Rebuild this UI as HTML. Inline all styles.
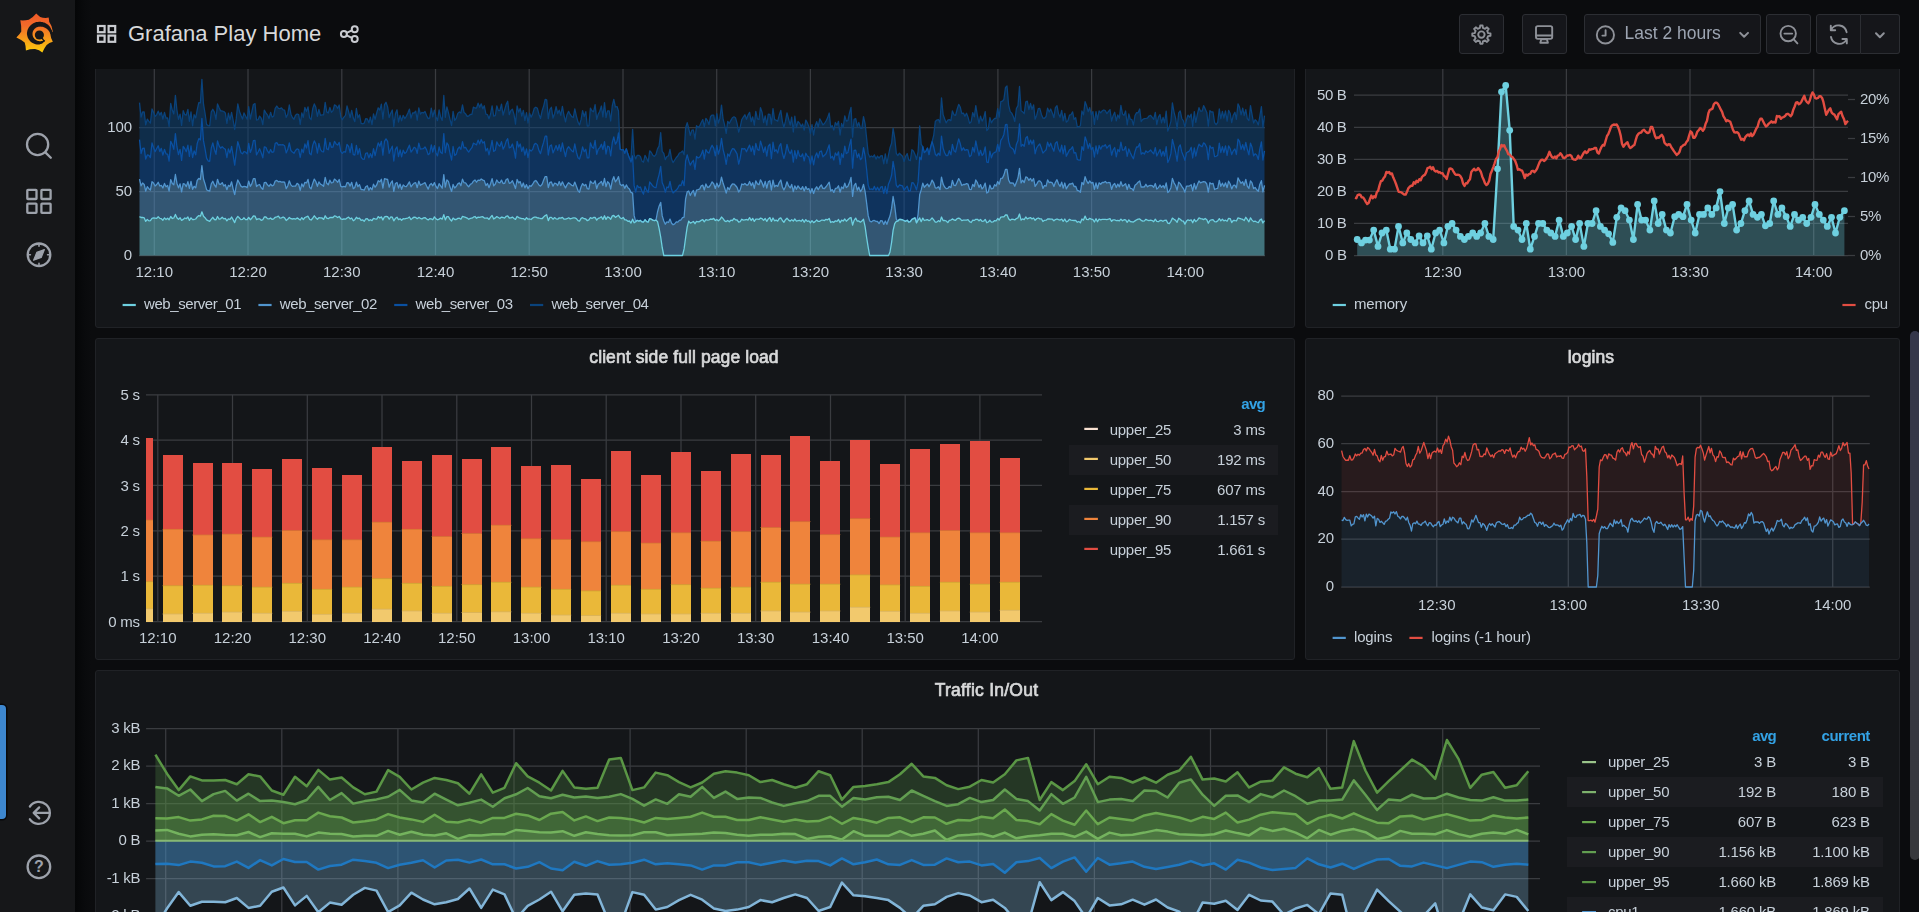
<!DOCTYPE html>
<html><head><meta charset="utf-8"><title>Grafana Play Home - Grafana</title>
<style>
html,body{margin:0;padding:0;background:#0b0c0e;}
body{width:1919px;height:912px;overflow:hidden;position:relative;font-family:"Liberation Sans", sans-serif;color:#c7d0d9;}
.abs{position:absolute}
.panel{position:absolute;box-sizing:border-box;background:#141619;border:1px solid #202226;border-radius:3px}
.side{position:absolute;left:0;top:0;width:75px;height:912px;background:#161719;z-index:5}
.shadow{position:absolute;left:75px;top:0;width:16px;height:912px;background:linear-gradient(to right,#050607,#090a0c 60%,#0b0c0e);z-index:5}
.header{position:absolute;left:91px;top:0;width:1828px;height:69px;background:#0b0c0e;z-index:4}
.hdr{position:absolute;left:0;top:0;z-index:6}
.charts{position:absolute;left:0;top:0;z-index:2}
.title{position:absolute;left:128px;top:20.5px;font-size:22px;line-height:26px;color:#d8d9da;white-space:nowrap;letter-spacing:0px;z-index:6}
.btn{position:absolute;top:14px;height:40px;box-sizing:border-box;background:#15161a;border:1px solid #2c2e33;border-radius:3px;z-index:6}
.tr{position:absolute;left:1624.5px;top:23.4px;font-size:17.5px;line-height:20px;color:#9da5b2;white-space:nowrap;z-index:7}
.alt{position:absolute;height:30px;background:#1b1c20;z-index:1}
.bluebar{position:absolute;left:0;top:705px;width:5.5px;height:114px;background:#3d87cf;border-radius:0 4px 4px 0;box-shadow:0 0 0 1.5px #07080a;z-index:7}
.scroll{position:absolute;left:1910px;top:331px;width:10px;height:529px;background:linear-gradient(#35374a,#37383c);border-radius:5px;z-index:7}
.q{z-index:7}
.side svg, svg.abs{z-index:6}
</style></head>
<body>
<div class="panel" style="left:95px;top:6px;width:1200px;height:322px"></div><div class="panel" style="left:1305px;top:6px;width:595px;height:322px"></div><div class="panel" style="left:95px;top:338px;width:1200px;height:322px"></div><div class="panel" style="left:1305px;top:338px;width:595px;height:322px"></div><div class="panel" style="left:95px;top:670px;width:1805px;height:322px"></div>
<div class="alt" style="left:1069px;top:445px;width:209px"></div><div class="alt" style="left:1069px;top:505px;width:209px"></div>
<div class="alt" style="left:1567px;top:777px;width:316px"></div><div class="alt" style="left:1567px;top:837px;width:316px"></div><div class="alt" style="left:1567px;top:897px;width:316px"></div>
<svg class="charts" style="will-change:transform" width="1919" height="912" viewBox="0 0 1919 912" font-family='"Liberation Sans", sans-serif' font-size="15" fill="#c7d0d9"><line x1="139" y1="255.5" x2="1265" y2="255.5" stroke="#3a3c40" stroke-width="1.25"/>
<line x1="139" y1="191.5" x2="1265" y2="191.5" stroke="#3a3c40" stroke-width="1.25"/>
<line x1="139" y1="127.5" x2="1265" y2="127.5" stroke="#3a3c40" stroke-width="1.25"/>
<line x1="154.3" y1="40" x2="154.3" y2="255.5" stroke="#3a3c40" stroke-width="1.25"/>
<line x1="248" y1="40" x2="248" y2="255.5" stroke="#3a3c40" stroke-width="1.25"/>
<line x1="341.8" y1="40" x2="341.8" y2="255.5" stroke="#3a3c40" stroke-width="1.25"/>
<line x1="435.5" y1="40" x2="435.5" y2="255.5" stroke="#3a3c40" stroke-width="1.25"/>
<line x1="529.2" y1="40" x2="529.2" y2="255.5" stroke="#3a3c40" stroke-width="1.25"/>
<line x1="623" y1="40" x2="623" y2="255.5" stroke="#3a3c40" stroke-width="1.25"/>
<line x1="716.7" y1="40" x2="716.7" y2="255.5" stroke="#3a3c40" stroke-width="1.25"/>
<line x1="810.4" y1="40" x2="810.4" y2="255.5" stroke="#3a3c40" stroke-width="1.25"/>
<line x1="904.1" y1="40" x2="904.1" y2="255.5" stroke="#3a3c40" stroke-width="1.25"/>
<line x1="997.9" y1="40" x2="997.9" y2="255.5" stroke="#3a3c40" stroke-width="1.25"/>
<line x1="1091.6" y1="40" x2="1091.6" y2="255.5" stroke="#3a3c40" stroke-width="1.25"/>
<line x1="1185.3" y1="40" x2="1185.3" y2="255.5" stroke="#3a3c40" stroke-width="1.25"/>
<line x1="1354" y1="255.5" x2="1848" y2="255.5" stroke="#3a3c40" stroke-width="1.25"/>
<line x1="1354" y1="223.4" x2="1848" y2="223.4" stroke="#3a3c40" stroke-width="1.25"/>
<line x1="1354" y1="191.4" x2="1848" y2="191.4" stroke="#3a3c40" stroke-width="1.25"/>
<line x1="1354" y1="159.4" x2="1848" y2="159.4" stroke="#3a3c40" stroke-width="1.25"/>
<line x1="1354" y1="127.3" x2="1848" y2="127.3" stroke="#3a3c40" stroke-width="1.25"/>
<line x1="1354" y1="95.2" x2="1848" y2="95.2" stroke="#3a3c40" stroke-width="1.25"/>
<line x1="1442.8" y1="40" x2="1442.8" y2="255.5" stroke="#3a3c40" stroke-width="1.25"/>
<line x1="1566.4" y1="40" x2="1566.4" y2="255.5" stroke="#3a3c40" stroke-width="1.25"/>
<line x1="1690" y1="40" x2="1690" y2="255.5" stroke="#3a3c40" stroke-width="1.25"/>
<line x1="1813.7" y1="40" x2="1813.7" y2="255.5" stroke="#3a3c40" stroke-width="1.25"/>
<line x1="1848" y1="255.5" x2="1855" y2="255.5" stroke="#3a3c40" stroke-width="1.25"/>
<line x1="1848" y1="216.5" x2="1855" y2="216.5" stroke="#3a3c40" stroke-width="1.25"/>
<line x1="1848" y1="177.5" x2="1855" y2="177.5" stroke="#3a3c40" stroke-width="1.25"/>
<line x1="1848" y1="138.5" x2="1855" y2="138.5" stroke="#3a3c40" stroke-width="1.25"/>
<line x1="1848" y1="99.5" x2="1855" y2="99.5" stroke="#3a3c40" stroke-width="1.25"/>
<line x1="146" y1="621.5" x2="1042" y2="621.5" stroke="#3a3c40" stroke-width="1.25"/>
<line x1="146" y1="576.1" x2="1042" y2="576.1" stroke="#3a3c40" stroke-width="1.25"/>
<line x1="146" y1="530.8" x2="1042" y2="530.8" stroke="#3a3c40" stroke-width="1.25"/>
<line x1="146" y1="485.4" x2="1042" y2="485.4" stroke="#3a3c40" stroke-width="1.25"/>
<line x1="146" y1="440.1" x2="1042" y2="440.1" stroke="#3a3c40" stroke-width="1.25"/>
<line x1="146" y1="394.8" x2="1042" y2="394.8" stroke="#3a3c40" stroke-width="1.25"/>
<line x1="157.8" y1="394.8" x2="157.8" y2="621.5" stroke="#3a3c40" stroke-width="1.25"/>
<line x1="232.5" y1="394.8" x2="232.5" y2="621.5" stroke="#3a3c40" stroke-width="1.25"/>
<line x1="307.3" y1="394.8" x2="307.3" y2="621.5" stroke="#3a3c40" stroke-width="1.25"/>
<line x1="382" y1="394.8" x2="382" y2="621.5" stroke="#3a3c40" stroke-width="1.25"/>
<line x1="456.8" y1="394.8" x2="456.8" y2="621.5" stroke="#3a3c40" stroke-width="1.25"/>
<line x1="531.5" y1="394.8" x2="531.5" y2="621.5" stroke="#3a3c40" stroke-width="1.25"/>
<line x1="606.2" y1="394.8" x2="606.2" y2="621.5" stroke="#3a3c40" stroke-width="1.25"/>
<line x1="681" y1="394.8" x2="681" y2="621.5" stroke="#3a3c40" stroke-width="1.25"/>
<line x1="755.7" y1="394.8" x2="755.7" y2="621.5" stroke="#3a3c40" stroke-width="1.25"/>
<line x1="830.5" y1="394.8" x2="830.5" y2="621.5" stroke="#3a3c40" stroke-width="1.25"/>
<line x1="905.2" y1="394.8" x2="905.2" y2="621.5" stroke="#3a3c40" stroke-width="1.25"/>
<line x1="979.9" y1="394.8" x2="979.9" y2="621.5" stroke="#3a3c40" stroke-width="1.25"/>
<line x1="1341.2" y1="587" x2="1869.8" y2="587" stroke="#3a3c40" stroke-width="1.25"/>
<line x1="1341.2" y1="539.2" x2="1869.8" y2="539.2" stroke="#3a3c40" stroke-width="1.25"/>
<line x1="1341.2" y1="491.5" x2="1869.8" y2="491.5" stroke="#3a3c40" stroke-width="1.25"/>
<line x1="1341.2" y1="443.7" x2="1869.8" y2="443.7" stroke="#3a3c40" stroke-width="1.25"/>
<line x1="1341.2" y1="396" x2="1869.8" y2="396" stroke="#3a3c40" stroke-width="1.25"/>
<line x1="1436.8" y1="395.9" x2="1436.8" y2="587" stroke="#3a3c40" stroke-width="1.25"/>
<line x1="1568.3" y1="395.9" x2="1568.3" y2="587" stroke="#3a3c40" stroke-width="1.25"/>
<line x1="1700.8" y1="395.9" x2="1700.8" y2="587" stroke="#3a3c40" stroke-width="1.25"/>
<line x1="1832.7" y1="395.9" x2="1832.7" y2="587" stroke="#3a3c40" stroke-width="1.25"/>
<line x1="146.1" y1="916.2" x2="1540" y2="916.2" stroke="#3a3c40" stroke-width="1.25"/>
<line x1="146.1" y1="878.6" x2="1540" y2="878.6" stroke="#3a3c40" stroke-width="1.25"/>
<line x1="146.1" y1="841.1" x2="1540" y2="841.1" stroke="#3a3c40" stroke-width="1.25"/>
<line x1="146.1" y1="803.6" x2="1540" y2="803.6" stroke="#3a3c40" stroke-width="1.25"/>
<line x1="146.1" y1="766" x2="1540" y2="766" stroke="#3a3c40" stroke-width="1.25"/>
<line x1="146.1" y1="728.5" x2="1540" y2="728.5" stroke="#3a3c40" stroke-width="1.25"/>
<line x1="165.7" y1="728.4" x2="165.7" y2="920" stroke="#3a3c40" stroke-width="1.25"/>
<line x1="281.8" y1="728.4" x2="281.8" y2="920" stroke="#3a3c40" stroke-width="1.25"/>
<line x1="397.9" y1="728.4" x2="397.9" y2="920" stroke="#3a3c40" stroke-width="1.25"/>
<line x1="514" y1="728.4" x2="514" y2="920" stroke="#3a3c40" stroke-width="1.25"/>
<line x1="630.1" y1="728.4" x2="630.1" y2="920" stroke="#3a3c40" stroke-width="1.25"/>
<line x1="746.2" y1="728.4" x2="746.2" y2="920" stroke="#3a3c40" stroke-width="1.25"/>
<line x1="862.2" y1="728.4" x2="862.2" y2="920" stroke="#3a3c40" stroke-width="1.25"/>
<line x1="978.3" y1="728.4" x2="978.3" y2="920" stroke="#3a3c40" stroke-width="1.25"/>
<line x1="1094.4" y1="728.4" x2="1094.4" y2="920" stroke="#3a3c40" stroke-width="1.25"/>
<line x1="1210.5" y1="728.4" x2="1210.5" y2="920" stroke="#3a3c40" stroke-width="1.25"/>
<line x1="1326.6" y1="728.4" x2="1326.6" y2="920" stroke="#3a3c40" stroke-width="1.25"/>
<line x1="1442.7" y1="728.4" x2="1442.7" y2="920" stroke="#3a3c40" stroke-width="1.25"/>
<g stroke-linejoin="round" fill-opacity="0.5">
<path d="M139.5,102.6 L141.1,117.1 L142.6,112 L144.2,112 L145.7,124.9 L147.3,119.2 L148.9,121.4 L150.4,123.1 L152,109 L153.5,112.2 L155.1,116.5 L156.7,114.6 L158.2,111.2 L159.8,115.1 L161.3,112.4 L162.9,119.2 L164.5,112.4 L166,118.1 L167.6,117.9 L169.1,126.4 L170.7,103.5 L172.3,110.3 L173.8,114 L175.4,95.3 L176.9,110 L178.5,119.4 L180.1,114.1 L181.6,125.4 L183.2,110.7 L184.7,114.6 L186.3,115.2 L187.9,109.4 L189.4,121.4 L191,111.9 L192.6,125.8 L194.1,114.7 L195.7,117.9 L197.2,109.9 L198.8,102.7 L200.4,102.9 L201.9,79.4 L203.5,104.2 L205,113 L206.6,124.5 L208.2,125.6 L209.7,125.9 L211.3,111.9 L212.8,109.2 L214.4,112.1 L216,119.3 L217.5,103.9 L219.1,107.8 L220.6,110.9 L222.2,111 L223.8,111.5 L225.3,112.9 L226.9,123.5 L228.4,113.1 L230,119.9 L231.6,112.5 L233.1,120.2 L234.7,129.5 L236.2,118.9 L237.8,104 L239.4,111.2 L240.9,115.2 L242.5,119.1 L244,113 L245.6,116.3 L247.2,119.3 L248.7,106.7 L250.3,119.1 L251.8,112.1 L253.4,104.5 L255,103.6 L256.5,120 L258.1,119.7 L259.6,116.1 L261.2,118.2 L262.8,124.7 L264.3,110.1 L265.9,112.8 L267.4,114.8 L269,118.5 L270.6,112.3 L272.1,117.1 L273.7,116.2 L275.2,108.3 L276.8,106 L278.4,108.4 L279.9,108.6 L281.5,107.9 L283.1,109.9 L284.6,110.2 L286.2,117.3 L287.7,114.5 L289.3,105 L290.9,114.2 L292.4,117.5 L294,119.2 L295.5,115.3 L297.1,114 L298.7,114.6 L300.2,124.4 L301.8,112.8 L303.3,117.5 L304.9,107.4 L306.5,111.4 L308,106.9 L309.6,117.9 L311.1,119.7 L312.7,108.8 L314.3,103.9 L315.8,107.3 L317.4,116.4 L318.9,109.5 L320.5,115.3 L322.1,114.9 L323.6,114.8 L325.2,102.3 L326.7,111.9 L328.3,113 L329.9,107.5 L331.4,112.3 L333,110.6 L334.5,104.9 L336.1,105.8 L337.7,108.3 L339.2,105 L340.8,116.9 L342.3,119.7 L343.9,117.1 L345.5,115.4 L347,106 L348.6,111.7 L350.1,117.6 L351.7,110.3 L353.3,118.1 L354.8,121.7 L356.4,108.5 L357.9,117.8 L359.5,114.8 L361.1,123.4 L362.6,123.8 L364.2,123.2 L365.7,118.7 L367.3,118.9 L368.9,122.8 L370.4,117.1 L372,124.6 L373.5,114 L375.1,119.4 L376.7,113 L378.2,107.8 L379.8,110.1 L381.4,104.2 L382.9,119 L384.5,104.7 L386,102.3 L387.6,106.9 L389.2,117.6 L390.7,113.4 L392.3,110 L393.8,126.6 L395.4,113.8 L397,109.8 L398.5,122.1 L400.1,115.5 L401.6,120.9 L403.2,115.3 L404.8,118.6 L406.3,116.4 L407.9,113.1 L409.4,109.2 L411,118.1 L412.6,112.9 L414.1,113 L415.7,111.1 L417.2,120.1 L418.8,107.9 L420.4,114.1 L421.9,112.3 L423.5,113 L425,111.4 L426.6,115.6 L428.2,118.6 L429.7,118.1 L431.3,108.2 L432.8,116.9 L434.4,110.2 L436,117 L437.5,120.7 L439.1,109.9 L440.6,116.9 L442.2,120.4 L443.8,95.5 L445.3,117.3 L446.9,106.8 L448.4,112.7 L450,119.3 L451.6,125.5 L453.1,111.3 L454.7,120.3 L456.2,118.5 L457.8,113.4 L459.4,111.9 L460.9,113.1 L462.5,105 L464,112.5 L465.6,113.8 L467.2,116.4 L468.7,116 L470.3,114.5 L471.9,114.3 L473.4,107.2 L475,108 L476.5,108.1 L478.1,103.2 L479.7,107.3 L481.2,103.8 L482.8,108.9 L484.3,105.8 L485.9,114.2 L487.5,114.7 L489,118.8 L490.6,114 L492.1,105.8 L493.7,116.2 L495.3,115.7 L496.8,105.8 L498.4,110.6 L499.9,110.5 L501.5,104.2 L503.1,115.1 L504.6,110 L506.2,104.4 L507.7,101.3 L509.3,114.7 L510.9,110.4 L512.4,109.2 L514,114.4 L515.5,124.1 L517.1,106 L518.7,112.1 L520.2,108.5 L521.8,116.1 L523.3,110.3 L524.9,120.5 L526.5,112.7 L528,123 L529.6,113.1 L531.1,117.2 L532.7,113.7 L534.3,108.3 L535.8,107.2 L537.4,108.3 L538.9,114.2 L540.5,118.5 L542.1,110.9 L543.6,106.3 L545.2,99.3 L546.7,99.8 L548.3,118.7 L549.9,109.3 L551.4,107.3 L553,118.1 L554.5,114 L556.1,106.7 L557.7,113.6 L559.2,110.2 L560.8,115.3 L562.4,106.4 L563.9,115 L565.5,121.9 L567,114.7 L568.6,111.4 L570.2,114.5 L571.7,116.6 L573.3,117.5 L574.8,108.8 L576.4,116.1 L578,122.1 L579.5,125 L581.1,119.4 L582.6,110.7 L584.2,116.6 L585.8,111.6 L587.3,126.2 L588.9,125.8 L590.4,108.1 L592,110.9 L593.6,111.7 L595.1,104.6 L596.7,119.4 L598.2,114.3 L599.8,111.3 L601.4,106 L602.9,116.9 L604.5,102.6 L606,117.6 L607.6,110.8 L609.2,110.8 L610.7,121 L612.3,105.7 L613.8,99.4 L615.4,107 L617,106.5 L618.5,111 L620.1,149.1 L621.6,149.8 L623.2,149.6 L624.8,153.2 L626.3,148.8 L627.9,154.1 L629.4,157.9 L631,159.3 L632.6,129.3 L634.1,154.6 L635.7,158.9 L637.2,155.3 L638.8,155.3 L640.4,156.5 L641.9,160.9 L643.5,162.2 L645,155.4 L646.6,158.3 L648.2,161.8 L649.7,150.8 L651.3,152.5 L652.8,155.2 L654.4,156.4 L656,154.3 L657.5,148.9 L659.1,146.2 L660.7,132.7 L662.2,151.4 L663.8,153.5 L665.3,159.6 L666.9,156.5 L668.5,155.9 L670,149.5 L671.6,159.1 L673.1,162.7 L674.7,160 L676.3,157.5 L677.8,156 L679.4,153 L680.9,152.5 L682.5,150.9 L684.1,154.8 L685.6,128 L687.2,122.6 L688.7,128.4 L690.3,135.3 L691.9,130.1 L693.4,129.9 L695,139.2 L696.5,125.6 L698.1,127.5 L699.7,125.9 L701.2,122.5 L702.8,119.6 L704.3,127 L705.9,118.4 L707.5,120.6 L709,124.7 L710.6,116.4 L712.1,115.1 L713.7,115.1 L715.3,125.8 L716.8,113.6 L718.4,123.1 L719.9,118.4 L721.5,105.1 L723.1,119.2 L724.6,124.8 L726.2,133.4 L727.7,121.3 L729.3,123.5 L730.9,120.4 L732.4,117.7 L734,116.8 L735.5,117.7 L737.1,123.7 L738.7,132.1 L740.2,127.2 L741.8,119.5 L743.3,117.2 L744.9,114.8 L746.5,119.3 L748,115.1 L749.6,112.4 L751.2,121.7 L752.7,116.8 L754.3,125.1 L755.8,111.4 L757.4,118.8 L759,119.5 L760.5,107.6 L762.1,112.5 L763.6,122.7 L765.2,116 L766.8,125.2 L768.3,114.2 L769.9,114.4 L771.4,124 L773,108.6 L774.6,119.6 L776.1,120.2 L777.7,121.2 L779.2,115.3 L780.8,110.4 L782.4,121.6 L783.9,127.5 L785.5,121.2 L787,112.8 L788.6,119.1 L790.2,125.1 L791.7,117.1 L793.3,132 L794.8,116.2 L796.4,127.7 L798,121.5 L799.5,123.1 L801.1,126.6 L802.6,124 L804.2,130.2 L805.8,120.1 L807.3,122.8 L808.9,126.7 L810.4,133.4 L812,124.7 L813.6,135.2 L815.1,126 L816.7,121.7 L818.2,127.1 L819.8,118.8 L821.4,121.7 L822.9,124.9 L824.5,123.5 L826,121 L827.6,117.9 L829.2,113 L830.7,127.1 L832.3,125.7 L833.8,130.1 L835.4,122.5 L837,125.2 L838.5,121.3 L840.1,135 L841.6,123.5 L843.2,127.5 L844.8,115.8 L846.3,121.2 L847.9,120.6 L849.5,112.8 L851,107.4 L852.6,137.2 L854.1,119.3 L855.7,118.6 L857.3,126.5 L858.8,122.5 L860.4,128.1 L861.9,128.3 L863.5,116.6 L865.1,123.9 L866.6,138.1 L868.2,153.6 L869.7,157.1 L871.3,156 L872.9,157 L874.4,154.9 L876,159.1 L877.5,156.1 L879.1,158.1 L880.7,155.8 L882.2,155.7 L883.8,163.9 L885.3,153.8 L886.9,163.5 L888.5,155 L890,147.8 L891.6,143.3 L893.1,128.4 L894.7,137.9 L896.3,153.3 L897.8,155.6 L899.4,153.2 L900.9,154.7 L902.5,156.3 L904.1,161.5 L905.6,156.3 L907.2,153.6 L908.7,159.9 L910.3,160.8 L911.9,149.7 L913.4,150.9 L915,154.4 L916.5,159.5 L918.1,151.7 L919.7,125.9 L921.2,144.5 L922.8,146.7 L924.3,152.6 L925.9,151.1 L927.5,148.1 L929,154.6 L930.6,147.1 L932.1,141.6 L933.7,135.5 L935.3,121.5 L936.8,120.1 L938.4,119.5 L940,122.8 L941.5,97.8 L943.1,114.6 L944.6,118.8 L946.2,122.9 L947.8,120.2 L949.3,119.6 L950.9,120.7 L952.4,110.9 L954,114.8 L955.6,115.3 L957.1,109.5 L958.7,104.4 L960.2,107 L961.8,113.7 L963.4,113.1 L964.9,116.3 L966.5,113.3 L968,117.2 L969.6,123.3 L971.2,121.7 L972.7,112.6 L974.3,116.8 L975.8,105.7 L977.4,115.5 L979,123.4 L980.5,116.1 L982.1,121.1 L983.6,118.3 L985.2,111.6 L986.8,130.7 L988.3,128.9 L989.9,117.6 L991.4,122.8 L993,120.1 L994.6,118.5 L996.1,118.4 L997.7,108.6 L999.2,117.1 L1000.8,101.7 L1002.4,101.2 L1003.9,99.5 L1005.5,87.4 L1007,86 L1008.6,105.1 L1010.2,111.6 L1011.7,113.1 L1013.3,116.5 L1014.8,121.5 L1016.4,108.5 L1018,105.6 L1019.5,86.5 L1021.1,110.8 L1022.6,111.8 L1024.2,113.7 L1025.8,101.8 L1027.3,101.2 L1028.9,109.7 L1030.5,103.5 L1032,109.4 L1033.6,104.9 L1035.1,119.2 L1036.7,115.2 L1038.3,108.7 L1039.8,108.4 L1041.4,114.4 L1042.9,118 L1044.5,118.3 L1046.1,116.5 L1047.6,108.2 L1049.2,112 L1050.7,109 L1052.3,112.9 L1053.9,117.7 L1055.4,107.6 L1057,105.7 L1058.5,113.8 L1060.1,117.2 L1061.7,110.4 L1063.2,120.8 L1064.8,113.3 L1066.3,122.2 L1067.9,120.8 L1069.5,115.1 L1071,114.7 L1072.6,111.9 L1074.1,119.3 L1075.7,117.8 L1077.3,127.2 L1078.8,126.7 L1080.4,125.8 L1081.9,111 L1083.5,114.8 L1085.1,101.7 L1086.6,105.8 L1088.2,111.7 L1089.7,107.7 L1091.3,114.9 L1092.9,111.6 L1094.4,124.4 L1096,111.6 L1097.5,119.7 L1099.1,110.8 L1100.7,112.9 L1102.2,110.9 L1103.8,110 L1105.3,110.7 L1106.9,113.6 L1108.5,111.4 L1110,109.6 L1111.6,121.2 L1113.1,115.7 L1114.7,112.3 L1116.3,120.8 L1117.8,115 L1119.4,118.2 L1120.9,105.3 L1122.5,114.1 L1124.1,115.4 L1125.6,111 L1127.2,124.8 L1128.8,114 L1130.3,119.2 L1131.9,119.7 L1133.4,125.2 L1135,115.5 L1136.6,112.6 L1138.1,112.8 L1139.7,109 L1141.2,121.7 L1142.8,119.4 L1144.4,118.6 L1145.9,118.4 L1147.5,118.1 L1149,116 L1150.6,115.4 L1152.2,117.4 L1153.7,119.4 L1155.3,112.4 L1156.8,124.5 L1158.4,117.1 L1160,114.5 L1161.5,122.8 L1163.1,117.4 L1164.6,122.8 L1166.2,111.2 L1167.8,131.1 L1169.3,127.2 L1170.9,121.3 L1172.4,102.9 L1174,112.1 L1175.6,118.1 L1177.1,129 L1178.7,112.9 L1180.2,110.9 L1181.8,118.5 L1183.4,120.9 L1184.9,126.8 L1186.5,119.8 L1188,115.1 L1189.6,117.4 L1191.2,114.1 L1192.7,126.5 L1194.3,111.6 L1195.8,122.3 L1197.4,114.1 L1199,107.7 L1200.5,111.2 L1202.1,111.1 L1203.6,105.6 L1205.2,108.9 L1206.8,112.4 L1208.3,126.2 L1209.9,110.7 L1211.4,112 L1213,112 L1214.6,122.6 L1216.1,124.7 L1217.7,122.5 L1219.3,109 L1220.8,118.7 L1222.4,111.5 L1223.9,118 L1225.5,111 L1227.1,121.1 L1228.6,110.3 L1230.2,113.5 L1231.7,122.7 L1233.3,115.2 L1234.9,112.2 L1236.4,119.3 L1238,103.8 L1239.5,107.1 L1241.1,114.8 L1242.7,108.2 L1244.2,115.7 L1245.8,109.6 L1247.3,118.6 L1248.9,120.5 L1250.5,105.6 L1252,114.4 L1253.6,123 L1255.1,119.8 L1256.7,121.2 L1258.3,125 L1259.8,116.7 L1261.4,106.6 L1262.9,127.4 L1264.5,115.6 L1264.5,150.8 L1262.9,160 L1261.4,141.9 L1259.8,149.1 L1258.3,159.4 L1256.7,155.1 L1255.1,153.8 L1253.6,155.8 L1252,147.2 L1250.5,143.1 L1248.9,154.9 L1247.3,149.3 L1245.8,142.5 L1244.2,150.2 L1242.7,144.7 L1241.1,149.4 L1239.5,141.4 L1238,139.1 L1236.4,154.5 L1234.9,148.9 L1233.3,150.8 L1231.7,154.6 L1230.2,148.7 L1228.6,145.8 L1227.1,155.3 L1225.5,145.8 L1223.9,152.5 L1222.4,146.6 L1220.8,152.7 L1219.3,143.2 L1217.7,155.4 L1216.1,156.3 L1214.6,156.6 L1213,147.4 L1211.4,148.3 L1209.9,145.7 L1208.3,159.7 L1206.8,147.8 L1205.2,144.3 L1203.6,142.8 L1202.1,146.7 L1200.5,145.9 L1199,144.2 L1197.4,148.9 L1195.8,156.2 L1194.3,147.9 L1192.7,158 L1191.2,147.3 L1189.6,150.7 L1188,151.9 L1186.5,152.7 L1184.9,160.3 L1183.4,155.9 L1181.8,151.9 L1180.2,144.9 L1178.7,147.4 L1177.1,161.1 L1175.6,152.4 L1174,145.6 L1172.4,139.5 L1170.9,153.6 L1169.3,159.3 L1167.8,162.5 L1166.2,146.7 L1164.6,156.1 L1163.1,151.3 L1161.5,156 L1160,149.5 L1158.4,152.8 L1156.8,156 L1155.3,147.6 L1153.7,153.9 L1152.2,152.1 L1150.6,150 L1149,151.5 L1147.5,152.4 L1145.9,150.9 L1144.4,154 L1142.8,152.7 L1141.2,154.2 L1139.7,143.5 L1138.1,147 L1136.6,146.9 L1135,151.7 L1133.4,158.8 L1131.9,156.1 L1130.3,152.8 L1128.8,149 L1127.2,156.4 L1125.6,146.6 L1124.1,149.9 L1122.5,150.2 L1120.9,142.1 L1119.4,151.5 L1117.8,149.5 L1116.3,156.8 L1114.7,147.5 L1113.1,150 L1111.6,155.2 L1110,144.9 L1108.5,146.1 L1106.9,148.2 L1105.3,144.6 L1103.8,146.2 L1102.2,146 L1100.7,149.2 L1099.1,145.5 L1097.5,153.9 L1096,145.9 L1094.4,157 L1092.9,147.5 L1091.3,149.6 L1089.7,143.5 L1088.2,148.4 L1086.6,141.1 L1085.1,136.8 L1083.5,150.3 L1081.9,146.6 L1080.4,160.2 L1078.8,160.2 L1077.3,159.5 L1075.7,152.7 L1074.1,153.2 L1072.6,146.7 L1071,149.1 L1069.5,149.9 L1067.9,153.1 L1066.3,156.3 L1064.8,145.7 L1063.2,153.9 L1061.7,145.1 L1060.1,152 L1058.5,148.8 L1057,141.6 L1055.4,143.1 L1053.9,151.2 L1052.3,147.7 L1050.7,143.2 L1049.2,146.6 L1047.6,142.1 L1046.1,149.8 L1044.5,151.4 L1042.9,153.1 L1041.4,148.2 L1039.8,143.9 L1038.3,145.5 L1036.7,147.8 L1035.1,153.8 L1033.6,140.1 L1032,144.1 L1030.5,140.1 L1028.9,144.4 L1027.3,136.5 L1025.8,137.9 L1024.2,146.3 L1022.6,144.5 L1021.1,146.3 L1019.5,123.8 L1018,140.6 L1016.4,144.4 L1014.8,153.9 L1013.3,149.2 L1011.7,147.9 L1010.2,146.8 L1008.6,141.1 L1007,124.5 L1005.5,124.7 L1003.9,134.4 L1002.4,138 L1000.8,140.3 L999.2,151.3 L997.7,144.5 L996.1,151.8 L994.6,152.4 L993,153.6 L991.4,157.8 L989.9,151.1 L988.3,162.5 L986.8,162.1 L985.2,146.9 L983.6,153.5 L982.1,155.5 L980.5,150.3 L979,155.6 L977.4,148.8 L975.8,141 L974.3,152.1 L972.7,147.3 L971.2,155.2 L969.6,156.7 L968,149.9 L966.5,149.6 L964.9,150.4 L963.4,147.8 L961.8,150.5 L960.2,143.5 L958.7,138.9 L957.1,145.3 L955.6,152 L954,150.7 L952.4,144.3 L950.9,154.8 L949.3,150.7 L947.8,155.5 L946.2,155.6 L944.6,152.7 L943.1,148.1 L941.5,136.1 L940,155.3 L938.4,153.2 L936.8,155.9 L935.3,154.2 L933.7,147 L932.1,141.6 L930.6,147.1 L929,154.6 L927.5,148.1 L925.9,151.1 L924.3,152.6 L922.8,146.7 L921.2,159.7 L919.7,157.2 L918.1,181.9 L916.5,189.8 L915,185.8 L913.4,183 L911.9,182.6 L910.3,190.9 L908.7,191 L907.2,186.2 L905.6,188.1 L904.1,190.2 L902.5,185.8 L900.9,185.4 L899.4,185 L897.8,187.4 L896.3,185.2 L894.7,170.5 L893.1,161.4 L891.6,175.2 L890,180.6 L888.5,183.9 L886.9,193.5 L885.3,186.3 L883.8,193.4 L882.2,186.5 L880.7,187.2 L879.1,190.5 L877.5,187.3 L876,190.2 L874.4,186.4 L872.9,189.6 L871.3,188.8 L869.7,189.5 L868.2,185.1 L866.6,169.4 L865.1,155.8 L863.5,147.6 L861.9,158 L860.4,159.7 L858.8,153.7 L857.3,157.6 L855.7,150.1 L854.1,150.5 L852.6,168.1 L851,139.1 L849.5,145.1 L847.9,152.5 L846.3,153.5 L844.8,146.1 L843.2,157.7 L841.6,153.7 L840.1,164.4 L838.5,151.8 L837,155.5 L835.4,153 L833.8,160 L832.3,156.3 L830.7,158.2 L829.2,144.8 L827.6,149.4 L826,153.8 L824.5,155.2 L822.9,156.9 L821.4,151 L819.8,151.7 L818.2,157.8 L816.7,152.9 L815.1,156.5 L813.6,164.8 L812,155.8 L810.4,164.1 L808.9,157.1 L807.3,156 L805.8,153.2 L804.2,160.9 L802.6,153.9 L801.1,156.6 L799.5,155.9 L798,150.3 L796.4,158.7 L794.8,150.6 L793.3,162.1 L791.7,150 L790.2,153.7 L788.6,150.8 L787,144.4 L785.5,153.1 L783.9,158.6 L782.4,153.3 L780.8,143.6 L779.2,146.3 L777.7,153 L776.1,149.8 L774.6,151.4 L773,142.2 L771.4,158.7 L769.9,144.1 L768.3,146.1 L766.8,156.1 L765.2,146.9 L763.6,152.3 L762.1,146.4 L760.5,141.1 L759,150.4 L757.4,149.4 L755.8,143.5 L754.3,154.9 L752.7,146.2 L751.2,151.4 L749.6,145.1 L748,148.2 L746.5,151.8 L744.9,148.7 L743.3,149 L741.8,148.4 L740.2,158.1 L738.7,164.1 L737.1,154.1 L735.5,151.1 L734,149 L732.4,148.7 L730.9,151.6 L729.3,156.2 L727.7,154 L726.2,164.4 L724.6,155.5 L723.1,149.6 L721.5,138.3 L719.9,148.9 L718.4,154.1 L716.8,145.3 L715.3,155.9 L713.7,148.1 L712.1,145.3 L710.6,148.4 L709,153.1 L707.5,152.1 L705.9,149.7 L704.3,159.1 L702.8,150.2 L701.2,154.6 L699.7,157.2 L698.1,158 L696.5,156.4 L695,169.4 L693.4,160.3 L691.9,162.1 L690.3,165.2 L688.7,160.6 L687.2,154.8 L685.6,161.1 L684.1,185.7 L682.5,180.6 L680.9,185.7 L679.4,185 L677.8,188.1 L676.3,190.1 L674.7,191.2 L673.1,193 L671.6,189.6 L670,181.5 L668.5,187.7 L666.9,187 L665.3,192.2 L663.8,186.3 L662.2,182.7 L660.7,166.3 L659.1,174.6 L657.5,180.3 L656,187.6 L654.4,187.3 L652.8,186.1 L651.3,184 L649.7,182 L648.2,192.4 L646.6,190.2 L645,186.5 L643.5,194.2 L641.9,191 L640.4,187 L638.8,187.7 L637.2,185.3 L635.7,192 L634.1,185.4 L632.6,155.8 L631,162.1 L629.4,157.9 L627.9,154.1 L626.3,148.8 L624.8,153.2 L623.2,149.6 L621.6,149.8 L620.1,149.1 L618.5,132.9 L617,141.4 L615.4,144.1 L613.8,136.8 L612.3,142.5 L610.7,155.9 L609.2,147 L607.6,146.2 L606,154 L604.5,141.7 L602.9,149.5 L601.4,144.3 L599.8,147.6 L598.2,149.2 L596.7,154.3 L595.1,140.4 L593.6,148.3 L592,147.1 L590.4,142.8 L588.9,157.8 L587.3,157.8 L585.8,149.3 L584.2,151.6 L582.6,147 L581.1,154 L579.5,159 L578,157.7 L576.4,152.2 L574.8,144 L573.3,151.9 L571.7,150.7 L570.2,148.9 L568.6,146.7 L567,149.2 L565.5,156.5 L563.9,150.1 L562.4,142.9 L560.8,151.4 L559.2,144.6 L557.7,150.4 L556.1,145.5 L554.5,149.4 L553,152.9 L551.4,144.9 L549.9,146.1 L548.3,155 L546.7,136.1 L545.2,136.2 L543.6,142.4 L542.1,147.3 L540.5,153.6 L538.9,150.4 L537.4,144.9 L535.8,143.4 L534.3,144.4 L532.7,149.4 L531.1,151.1 L529.6,149.7 L528,157.6 L526.5,148.9 L524.9,155.1 L523.3,147 L521.8,151.4 L520.2,144 L518.7,147 L517.1,141.3 L515.5,158.2 L514,149.7 L512.4,144 L510.9,147.1 L509.3,147.9 L507.7,138.7 L506.2,141.1 L504.6,146.4 L503.1,149.2 L501.5,141.6 L499.9,146.3 L498.4,145 L496.8,141.8 L495.3,150.3 L493.7,151.4 L492.1,140.5 L490.6,147.9 L489,154.8 L487.5,148.4 L485.9,151 L484.3,141.6 L482.8,143.1 L481.2,139.4 L479.7,143.9 L478.1,140.1 L476.5,144.9 L475,144 L473.4,143.2 L471.9,147.7 L470.3,149.7 L468.7,152.1 L467.2,150.2 L465.6,147.4 L464,147.9 L462.5,141.6 L460.9,149.3 L459.4,147 L457.8,149 L456.2,154.2 L454.7,155.4 L453.1,146.5 L451.6,160 L450,153.5 L448.4,145.1 L446.9,142.8 L445.3,152.6 L443.8,133.6 L442.2,153.6 L440.6,152.3 L439.1,147 L437.5,155.9 L436,153 L434.4,145.6 L432.8,152 L431.3,144.8 L429.7,153.5 L428.2,154.7 L426.6,149.9 L425,146.9 L423.5,148.7 L421.9,148.9 L420.4,149.2 L418.8,143.2 L417.2,153.5 L415.7,148.3 L414.1,147.2 L412.6,150 L411,152 L409.4,145.2 L407.9,148.5 L406.3,152.3 L404.8,153.4 L403.2,150.2 L401.6,156.8 L400.1,149.9 L398.5,156.7 L397,146.9 L395.4,149.4 L393.8,161 L392.3,146.2 L390.7,149.5 L389.2,153.3 L387.6,141.3 L386,138.9 L384.5,141.4 L382.9,155.2 L381.4,141.3 L379.8,146.3 L378.2,142.8 L376.7,148.7 L375.1,155.5 L373.5,148.6 L372,157.7 L370.4,153.5 L368.9,157.9 L367.3,152.8 L365.7,153.3 L364.2,159.4 L362.6,159.2 L361.1,157.1 L359.5,148.6 L357.9,154.3 L356.4,145.4 L354.8,155.1 L353.3,154.7 L351.7,143.6 L350.1,152.7 L348.6,146.4 L347,144.4 L345.5,152.2 L343.9,151.6 L342.3,153.4 L340.8,151.6 L339.2,142.4 L337.7,145.1 L336.1,143.9 L334.5,141.3 L333,147 L331.4,147.4 L329.9,142.3 L328.3,149.7 L326.7,148.9 L325.2,138.3 L323.6,151.9 L322.1,151.6 L320.5,149.7 L318.9,143.4 L317.4,153.2 L315.8,144 L314.3,140.9 L312.7,145.4 L311.1,154.8 L309.6,153.4 L308,140.6 L306.5,148 L304.9,144 L303.3,152.7 L301.8,149.1 L300.2,157.5 L298.7,149.7 L297.1,148.9 L295.5,150.5 L294,153.3 L292.4,152 L290.9,150.6 L289.3,142.8 L287.7,149.6 L286.2,152.9 L284.6,145.7 L283.1,144.7 L281.5,144.9 L279.9,144.6 L278.4,145.2 L276.8,142.7 L275.2,143.4 L273.7,151.8 L272.1,152.4 L270.6,149.5 L269,153.2 L267.4,150.9 L265.9,147.3 L264.3,146.8 L262.8,157.9 L261.2,152.7 L259.6,148.8 L258.1,152 L256.5,154.9 L255,140.5 L253.4,140.6 L251.8,148.4 L250.3,152.4 L248.7,143.4 L247.2,153.9 L245.6,152.1 L244,151.5 L242.5,153.8 L240.9,152.7 L239.4,147 L237.8,141.6 L236.2,153.1 L234.7,165.2 L233.1,155.2 L231.6,146.4 L230,153.1 L228.4,148.9 L226.9,157.7 L225.3,149.2 L223.8,148.2 L222.2,146.8 L220.6,148.2 L219.1,145.9 L217.5,140.9 L216,154.4 L214.4,149.5 L212.8,142.9 L211.3,148 L209.7,161.4 L208.2,161 L206.6,158.1 L205,148.6 L203.5,140.9 L201.9,118.5 L200.4,139.9 L198.8,138.6 L197.2,143.6 L195.7,154.8 L194.1,150.8 L192.6,157.5 L191,145.8 L189.4,156.4 L187.9,145.2 L186.3,151.7 L184.7,148.5 L183.2,146.5 L181.6,160.4 L180.1,149.3 L178.5,154.5 L176.9,146.7 L175.4,133.6 L173.8,149.4 L172.3,144.5 L170.7,141.4 L169.1,161 L167.6,154.1 L166,153.8 L164.5,149.4 L162.9,155.2 L161.3,148.3 L159.8,151.7 L158.2,145.7 L156.7,148.5 L155.1,151.7 L153.5,147.4 L152,143 L150.4,157.6 L148.9,155.3 L147.3,154.9 L145.7,159.1 L144.2,148.2 L142.6,148.5 L141.1,153.5 L139.5,139.6 Z" fill="#0a437c"/>
<path d="M139.5,139.6 L141.1,153.5 L142.6,148.5 L144.2,148.2 L145.7,159.1 L147.3,154.9 L148.9,155.3 L150.4,157.6 L152,143 L153.5,147.4 L155.1,151.7 L156.7,148.5 L158.2,145.7 L159.8,151.7 L161.3,148.3 L162.9,155.2 L164.5,149.4 L166,153.8 L167.6,154.1 L169.1,161 L170.7,141.4 L172.3,144.5 L173.8,149.4 L175.4,133.6 L176.9,146.7 L178.5,154.5 L180.1,149.3 L181.6,160.4 L183.2,146.5 L184.7,148.5 L186.3,151.7 L187.9,145.2 L189.4,156.4 L191,145.8 L192.6,157.5 L194.1,150.8 L195.7,154.8 L197.2,143.6 L198.8,138.6 L200.4,139.9 L201.9,118.5 L203.5,140.9 L205,148.6 L206.6,158.1 L208.2,161 L209.7,161.4 L211.3,148 L212.8,142.9 L214.4,149.5 L216,154.4 L217.5,140.9 L219.1,145.9 L220.6,148.2 L222.2,146.8 L223.8,148.2 L225.3,149.2 L226.9,157.7 L228.4,148.9 L230,153.1 L231.6,146.4 L233.1,155.2 L234.7,165.2 L236.2,153.1 L237.8,141.6 L239.4,147 L240.9,152.7 L242.5,153.8 L244,151.5 L245.6,152.1 L247.2,153.9 L248.7,143.4 L250.3,152.4 L251.8,148.4 L253.4,140.6 L255,140.5 L256.5,154.9 L258.1,152 L259.6,148.8 L261.2,152.7 L262.8,157.9 L264.3,146.8 L265.9,147.3 L267.4,150.9 L269,153.2 L270.6,149.5 L272.1,152.4 L273.7,151.8 L275.2,143.4 L276.8,142.7 L278.4,145.2 L279.9,144.6 L281.5,144.9 L283.1,144.7 L284.6,145.7 L286.2,152.9 L287.7,149.6 L289.3,142.8 L290.9,150.6 L292.4,152 L294,153.3 L295.5,150.5 L297.1,148.9 L298.7,149.7 L300.2,157.5 L301.8,149.1 L303.3,152.7 L304.9,144 L306.5,148 L308,140.6 L309.6,153.4 L311.1,154.8 L312.7,145.4 L314.3,140.9 L315.8,144 L317.4,153.2 L318.9,143.4 L320.5,149.7 L322.1,151.6 L323.6,151.9 L325.2,138.3 L326.7,148.9 L328.3,149.7 L329.9,142.3 L331.4,147.4 L333,147 L334.5,141.3 L336.1,143.9 L337.7,145.1 L339.2,142.4 L340.8,151.6 L342.3,153.4 L343.9,151.6 L345.5,152.2 L347,144.4 L348.6,146.4 L350.1,152.7 L351.7,143.6 L353.3,154.7 L354.8,155.1 L356.4,145.4 L357.9,154.3 L359.5,148.6 L361.1,157.1 L362.6,159.2 L364.2,159.4 L365.7,153.3 L367.3,152.8 L368.9,157.9 L370.4,153.5 L372,157.7 L373.5,148.6 L375.1,155.5 L376.7,148.7 L378.2,142.8 L379.8,146.3 L381.4,141.3 L382.9,155.2 L384.5,141.4 L386,138.9 L387.6,141.3 L389.2,153.3 L390.7,149.5 L392.3,146.2 L393.8,161 L395.4,149.4 L397,146.9 L398.5,156.7 L400.1,149.9 L401.6,156.8 L403.2,150.2 L404.8,153.4 L406.3,152.3 L407.9,148.5 L409.4,145.2 L411,152 L412.6,150 L414.1,147.2 L415.7,148.3 L417.2,153.5 L418.8,143.2 L420.4,149.2 L421.9,148.9 L423.5,148.7 L425,146.9 L426.6,149.9 L428.2,154.7 L429.7,153.5 L431.3,144.8 L432.8,152 L434.4,145.6 L436,153 L437.5,155.9 L439.1,147 L440.6,152.3 L442.2,153.6 L443.8,133.6 L445.3,152.6 L446.9,142.8 L448.4,145.1 L450,153.5 L451.6,160 L453.1,146.5 L454.7,155.4 L456.2,154.2 L457.8,149 L459.4,147 L460.9,149.3 L462.5,141.6 L464,147.9 L465.6,147.4 L467.2,150.2 L468.7,152.1 L470.3,149.7 L471.9,147.7 L473.4,143.2 L475,144 L476.5,144.9 L478.1,140.1 L479.7,143.9 L481.2,139.4 L482.8,143.1 L484.3,141.6 L485.9,151 L487.5,148.4 L489,154.8 L490.6,147.9 L492.1,140.5 L493.7,151.4 L495.3,150.3 L496.8,141.8 L498.4,145 L499.9,146.3 L501.5,141.6 L503.1,149.2 L504.6,146.4 L506.2,141.1 L507.7,138.7 L509.3,147.9 L510.9,147.1 L512.4,144 L514,149.7 L515.5,158.2 L517.1,141.3 L518.7,147 L520.2,144 L521.8,151.4 L523.3,147 L524.9,155.1 L526.5,148.9 L528,157.6 L529.6,149.7 L531.1,151.1 L532.7,149.4 L534.3,144.4 L535.8,143.4 L537.4,144.9 L538.9,150.4 L540.5,153.6 L542.1,147.3 L543.6,142.4 L545.2,136.2 L546.7,136.1 L548.3,155 L549.9,146.1 L551.4,144.9 L553,152.9 L554.5,149.4 L556.1,145.5 L557.7,150.4 L559.2,144.6 L560.8,151.4 L562.4,142.9 L563.9,150.1 L565.5,156.5 L567,149.2 L568.6,146.7 L570.2,148.9 L571.7,150.7 L573.3,151.9 L574.8,144 L576.4,152.2 L578,157.7 L579.5,159 L581.1,154 L582.6,147 L584.2,151.6 L585.8,149.3 L587.3,157.8 L588.9,157.8 L590.4,142.8 L592,147.1 L593.6,148.3 L595.1,140.4 L596.7,154.3 L598.2,149.2 L599.8,147.6 L601.4,144.3 L602.9,149.5 L604.5,141.7 L606,154 L607.6,146.2 L609.2,147 L610.7,155.9 L612.3,142.5 L613.8,136.8 L615.4,144.1 L617,141.4 L618.5,132.9 L620.1,149.1 L621.6,149.8 L623.2,149.6 L624.8,153.2 L626.3,148.8 L627.9,154.1 L629.4,157.9 L631,162.1 L632.6,155.8 L634.1,185.4 L635.7,192 L637.2,185.3 L638.8,187.7 L640.4,187 L641.9,191 L643.5,194.2 L645,186.5 L646.6,190.2 L648.2,192.4 L649.7,182 L651.3,184 L652.8,186.1 L654.4,187.3 L656,187.6 L657.5,180.3 L659.1,174.6 L660.7,166.3 L662.2,182.7 L663.8,186.3 L665.3,192.2 L666.9,187 L668.5,187.7 L670,181.5 L671.6,189.6 L673.1,193 L674.7,191.2 L676.3,190.1 L677.8,188.1 L679.4,185 L680.9,185.7 L682.5,180.6 L684.1,185.7 L685.6,161.1 L687.2,154.8 L688.7,160.6 L690.3,165.2 L691.9,162.1 L693.4,160.3 L695,169.4 L696.5,156.4 L698.1,158 L699.7,157.2 L701.2,154.6 L702.8,150.2 L704.3,159.1 L705.9,149.7 L707.5,152.1 L709,153.1 L710.6,148.4 L712.1,145.3 L713.7,148.1 L715.3,155.9 L716.8,145.3 L718.4,154.1 L719.9,148.9 L721.5,138.3 L723.1,149.6 L724.6,155.5 L726.2,164.4 L727.7,154 L729.3,156.2 L730.9,151.6 L732.4,148.7 L734,149 L735.5,151.1 L737.1,154.1 L738.7,164.1 L740.2,158.1 L741.8,148.4 L743.3,149 L744.9,148.7 L746.5,151.8 L748,148.2 L749.6,145.1 L751.2,151.4 L752.7,146.2 L754.3,154.9 L755.8,143.5 L757.4,149.4 L759,150.4 L760.5,141.1 L762.1,146.4 L763.6,152.3 L765.2,146.9 L766.8,156.1 L768.3,146.1 L769.9,144.1 L771.4,158.7 L773,142.2 L774.6,151.4 L776.1,149.8 L777.7,153 L779.2,146.3 L780.8,143.6 L782.4,153.3 L783.9,158.6 L785.5,153.1 L787,144.4 L788.6,150.8 L790.2,153.7 L791.7,150 L793.3,162.1 L794.8,150.6 L796.4,158.7 L798,150.3 L799.5,155.9 L801.1,156.6 L802.6,153.9 L804.2,160.9 L805.8,153.2 L807.3,156 L808.9,157.1 L810.4,164.1 L812,155.8 L813.6,164.8 L815.1,156.5 L816.7,152.9 L818.2,157.8 L819.8,151.7 L821.4,151 L822.9,156.9 L824.5,155.2 L826,153.8 L827.6,149.4 L829.2,144.8 L830.7,158.2 L832.3,156.3 L833.8,160 L835.4,153 L837,155.5 L838.5,151.8 L840.1,164.4 L841.6,153.7 L843.2,157.7 L844.8,146.1 L846.3,153.5 L847.9,152.5 L849.5,145.1 L851,139.1 L852.6,168.1 L854.1,150.5 L855.7,150.1 L857.3,157.6 L858.8,153.7 L860.4,159.7 L861.9,158 L863.5,147.6 L865.1,155.8 L866.6,169.4 L868.2,185.1 L869.7,189.5 L871.3,188.8 L872.9,189.6 L874.4,186.4 L876,190.2 L877.5,187.3 L879.1,190.5 L880.7,187.2 L882.2,186.5 L883.8,193.4 L885.3,186.3 L886.9,193.5 L888.5,183.9 L890,180.6 L891.6,175.2 L893.1,161.4 L894.7,170.5 L896.3,185.2 L897.8,187.4 L899.4,185 L900.9,185.4 L902.5,185.8 L904.1,190.2 L905.6,188.1 L907.2,186.2 L908.7,191 L910.3,190.9 L911.9,182.6 L913.4,183 L915,185.8 L916.5,189.8 L918.1,181.9 L919.7,157.2 L921.2,159.7 L922.8,146.7 L924.3,152.6 L925.9,151.1 L927.5,148.1 L929,154.6 L930.6,147.1 L932.1,141.6 L933.7,147 L935.3,154.2 L936.8,155.9 L938.4,153.2 L940,155.3 L941.5,136.1 L943.1,148.1 L944.6,152.7 L946.2,155.6 L947.8,155.5 L949.3,150.7 L950.9,154.8 L952.4,144.3 L954,150.7 L955.6,152 L957.1,145.3 L958.7,138.9 L960.2,143.5 L961.8,150.5 L963.4,147.8 L964.9,150.4 L966.5,149.6 L968,149.9 L969.6,156.7 L971.2,155.2 L972.7,147.3 L974.3,152.1 L975.8,141 L977.4,148.8 L979,155.6 L980.5,150.3 L982.1,155.5 L983.6,153.5 L985.2,146.9 L986.8,162.1 L988.3,162.5 L989.9,151.1 L991.4,157.8 L993,153.6 L994.6,152.4 L996.1,151.8 L997.7,144.5 L999.2,151.3 L1000.8,140.3 L1002.4,138 L1003.9,134.4 L1005.5,124.7 L1007,124.5 L1008.6,141.1 L1010.2,146.8 L1011.7,147.9 L1013.3,149.2 L1014.8,153.9 L1016.4,144.4 L1018,140.6 L1019.5,123.8 L1021.1,146.3 L1022.6,144.5 L1024.2,146.3 L1025.8,137.9 L1027.3,136.5 L1028.9,144.4 L1030.5,140.1 L1032,144.1 L1033.6,140.1 L1035.1,153.8 L1036.7,147.8 L1038.3,145.5 L1039.8,143.9 L1041.4,148.2 L1042.9,153.1 L1044.5,151.4 L1046.1,149.8 L1047.6,142.1 L1049.2,146.6 L1050.7,143.2 L1052.3,147.7 L1053.9,151.2 L1055.4,143.1 L1057,141.6 L1058.5,148.8 L1060.1,152 L1061.7,145.1 L1063.2,153.9 L1064.8,145.7 L1066.3,156.3 L1067.9,153.1 L1069.5,149.9 L1071,149.1 L1072.6,146.7 L1074.1,153.2 L1075.7,152.7 L1077.3,159.5 L1078.8,160.2 L1080.4,160.2 L1081.9,146.6 L1083.5,150.3 L1085.1,136.8 L1086.6,141.1 L1088.2,148.4 L1089.7,143.5 L1091.3,149.6 L1092.9,147.5 L1094.4,157 L1096,145.9 L1097.5,153.9 L1099.1,145.5 L1100.7,149.2 L1102.2,146 L1103.8,146.2 L1105.3,144.6 L1106.9,148.2 L1108.5,146.1 L1110,144.9 L1111.6,155.2 L1113.1,150 L1114.7,147.5 L1116.3,156.8 L1117.8,149.5 L1119.4,151.5 L1120.9,142.1 L1122.5,150.2 L1124.1,149.9 L1125.6,146.6 L1127.2,156.4 L1128.8,149 L1130.3,152.8 L1131.9,156.1 L1133.4,158.8 L1135,151.7 L1136.6,146.9 L1138.1,147 L1139.7,143.5 L1141.2,154.2 L1142.8,152.7 L1144.4,154 L1145.9,150.9 L1147.5,152.4 L1149,151.5 L1150.6,150 L1152.2,152.1 L1153.7,153.9 L1155.3,147.6 L1156.8,156 L1158.4,152.8 L1160,149.5 L1161.5,156 L1163.1,151.3 L1164.6,156.1 L1166.2,146.7 L1167.8,162.5 L1169.3,159.3 L1170.9,153.6 L1172.4,139.5 L1174,145.6 L1175.6,152.4 L1177.1,161.1 L1178.7,147.4 L1180.2,144.9 L1181.8,151.9 L1183.4,155.9 L1184.9,160.3 L1186.5,152.7 L1188,151.9 L1189.6,150.7 L1191.2,147.3 L1192.7,158 L1194.3,147.9 L1195.8,156.2 L1197.4,148.9 L1199,144.2 L1200.5,145.9 L1202.1,146.7 L1203.6,142.8 L1205.2,144.3 L1206.8,147.8 L1208.3,159.7 L1209.9,145.7 L1211.4,148.3 L1213,147.4 L1214.6,156.6 L1216.1,156.3 L1217.7,155.4 L1219.3,143.2 L1220.8,152.7 L1222.4,146.6 L1223.9,152.5 L1225.5,145.8 L1227.1,155.3 L1228.6,145.8 L1230.2,148.7 L1231.7,154.6 L1233.3,150.8 L1234.9,148.9 L1236.4,154.5 L1238,139.1 L1239.5,141.4 L1241.1,149.4 L1242.7,144.7 L1244.2,150.2 L1245.8,142.5 L1247.3,149.3 L1248.9,154.9 L1250.5,143.1 L1252,147.2 L1253.6,155.8 L1255.1,153.8 L1256.7,155.1 L1258.3,159.4 L1259.8,149.1 L1261.4,141.9 L1262.9,160 L1264.5,150.8 L1264.5,185.3 L1262.9,191.8 L1261.4,180.7 L1259.8,184.5 L1258.3,191.3 L1256.7,189.8 L1255.1,187.4 L1253.6,188.6 L1252,182.9 L1250.5,180.9 L1248.9,188.4 L1247.3,186.2 L1245.8,179.3 L1244.2,185.4 L1242.7,181.8 L1241.1,183.3 L1239.5,180.7 L1238,177.9 L1236.4,187.9 L1234.9,185.2 L1233.3,185.4 L1231.7,188.9 L1230.2,184 L1228.6,181.2 L1227.1,187.7 L1225.5,182.8 L1223.9,186.5 L1222.4,183.2 L1220.8,186.3 L1219.3,180.3 L1217.7,188.4 L1216.1,188.7 L1214.6,189.5 L1213,183.3 L1211.4,183.9 L1209.9,182.7 L1208.3,192.1 L1206.8,184 L1205.2,181.8 L1203.6,181.7 L1202.1,182.2 L1200.5,182.8 L1199,181 L1197.4,184.6 L1195.8,189.2 L1194.3,183.4 L1192.7,190.9 L1191.2,184.8 L1189.6,185.8 L1188,186.2 L1186.5,186.2 L1184.9,192.2 L1183.4,188.6 L1181.8,186.3 L1180.2,183.6 L1178.7,182.1 L1177.1,190.2 L1175.6,185.5 L1174,182.8 L1172.4,178.4 L1170.9,187.7 L1169.3,191 L1167.8,192.5 L1166.2,182.9 L1164.6,188.1 L1163.1,185.6 L1161.5,187.4 L1160,185 L1158.4,187.6 L1156.8,189.1 L1155.3,183.5 L1153.7,187.3 L1152.2,185.7 L1150.6,185.5 L1149,185.7 L1147.5,186.8 L1145.9,184.3 L1144.4,186.9 L1142.8,187 L1141.2,187.2 L1139.7,180.9 L1138.1,182.2 L1136.6,184 L1135,185.2 L1133.4,190.5 L1131.9,188.6 L1130.3,188.4 L1128.8,184.3 L1127.2,189.5 L1125.6,183.8 L1124.1,185 L1122.5,186.1 L1120.9,181.7 L1119.4,186.8 L1117.8,184.1 L1116.3,187.5 L1114.7,183.5 L1113.1,185 L1111.6,189.4 L1110,182.7 L1108.5,182.5 L1106.9,183 L1105.3,181.4 L1103.8,182.5 L1102.2,182.5 L1100.7,184.2 L1099.1,182.8 L1097.5,188.5 L1096,183 L1094.4,189.4 L1092.9,182.4 L1091.3,183.2 L1089.7,180.9 L1088.2,183.5 L1086.6,180.9 L1085.1,176.7 L1083.5,184.5 L1081.9,182.4 L1080.4,192.2 L1078.8,190.8 L1077.3,190.4 L1075.7,186.3 L1074.1,186.5 L1072.6,183.1 L1071,184 L1069.5,183.9 L1067.9,186.1 L1066.3,188.8 L1064.8,183 L1063.2,188.1 L1061.7,182.2 L1060.1,186.5 L1058.5,183.8 L1057,179.7 L1055.4,182.3 L1053.9,186.5 L1052.3,182.8 L1050.7,182.1 L1049.2,182.7 L1047.6,179.9 L1046.1,186.2 L1044.5,185.5 L1042.9,188.4 L1041.4,182.6 L1039.8,180.9 L1038.3,181.2 L1036.7,184.1 L1035.1,186.4 L1033.6,178.5 L1032,181.2 L1030.5,178.5 L1028.9,180.3 L1027.3,177.6 L1025.8,176.8 L1024.2,182.6 L1022.6,180.2 L1021.1,182.9 L1019.5,168.4 L1018,178 L1016.4,182.2 L1014.8,186.2 L1013.3,183.1 L1011.7,182.9 L1010.2,183.1 L1008.6,180 L1007,169.4 L1005.5,169.4 L1003.9,175.1 L1002.4,178.1 L1000.8,178.3 L999.2,184.3 L997.7,181.5 L996.1,186.1 L994.6,184.7 L993,188.4 L991.4,188.9 L989.9,185.2 L988.3,191.9 L986.8,193 L985.2,183.1 L983.6,187.1 L982.1,188.9 L980.5,184.6 L979,187.4 L977.4,182.6 L975.8,180 L974.3,186.5 L972.7,184.3 L971.2,189.7 L969.6,189.4 L968,184.2 L966.5,183.6 L964.9,184.5 L963.4,184.5 L961.8,185.5 L960.2,181.2 L958.7,178.6 L957.1,182.2 L955.6,185.6 L954,185.3 L952.4,180.5 L950.9,187.6 L949.3,186.5 L947.8,188.3 L946.2,188.6 L944.6,187 L943.1,184.1 L941.5,177.2 L940,189.6 L938.4,186.8 L936.8,188.1 L935.3,187.9 L933.7,182.8 L932.1,180.1 L930.6,184 L929,186.8 L927.5,183.9 L925.9,185.5 L924.3,187.3 L922.8,183.2 L921.2,189.9 L919.7,194.6 L918.1,214.3 L916.5,222.8 L915,217.9 L913.4,218.7 L911.9,219.3 L910.3,221.7 L908.7,222 L907.2,220.2 L905.6,221.3 L904.1,220.7 L902.5,219.8 L900.9,219.5 L899.4,219.3 L897.8,221.2 L896.3,219.1 L894.7,205.6 L893.1,196.5 L891.6,208.4 L890,216.1 L888.5,219.8 L886.9,224.3 L885.3,221 L883.8,224.4 L882.2,220.8 L880.7,220.6 L879.1,223.6 L877.5,221.5 L876,221.3 L874.4,220.5 L872.9,220.7 L871.3,221.9 L869.7,221 L868.2,215.7 L866.6,202.9 L865.1,191.6 L863.5,184.4 L861.9,189.4 L860.4,191.6 L858.8,187.1 L857.3,190.1 L855.7,183.4 L854.1,185.7 L852.6,196.4 L851,177.4 L849.5,182.6 L847.9,186.3 L846.3,187.6 L844.8,183.2 L843.2,188.6 L841.6,187 L840.1,192 L838.5,185.8 L837,188.1 L835.4,188.4 L833.8,192.4 L832.3,189.6 L830.7,191 L829.2,182.2 L827.6,184.5 L826,186.8 L824.5,188.5 L822.9,188.4 L821.4,184.9 L819.8,186.7 L818.2,189.7 L816.7,186.8 L815.1,189 L813.6,193.5 L812,188.5 L810.4,193 L808.9,188.6 L807.3,189.5 L805.8,186.6 L804.2,190.9 L802.6,186.6 L801.1,189.4 L799.5,188 L798,185.9 L796.4,189.3 L794.8,185.8 L793.3,191.5 L791.7,184.4 L790.2,187.9 L788.6,185.9 L787,181.8 L785.5,186.7 L783.9,190 L782.4,187 L780.8,180 L779.2,182.5 L777.7,186.4 L776.1,185.3 L774.6,186.8 L773,180.2 L771.4,190.2 L769.9,180.8 L768.3,181.9 L766.8,188 L765.2,181.4 L763.6,187.2 L762.1,182.8 L760.5,179.8 L759,184.8 L757.4,183.9 L755.8,180.8 L754.3,188.3 L752.7,182.7 L751.2,185.6 L749.6,181.5 L748,185 L746.5,185 L744.9,183.5 L743.3,184.7 L741.8,184 L740.2,189.8 L738.7,192 L737.1,187.5 L735.5,185.5 L734,184.1 L732.4,184 L730.9,186 L729.3,189.7 L727.7,187.4 L726.2,193.1 L724.6,187.8 L723.1,183.3 L721.5,177.2 L719.9,184.7 L718.4,187.1 L716.8,183.1 L715.3,188.5 L713.7,183.7 L712.1,181.9 L710.6,184.8 L709,187 L707.5,187.3 L705.9,184 L704.3,190 L702.8,185.2 L701.2,185.8 L699.7,189 L698.1,189.6 L696.5,190.1 L695,196.2 L693.4,190.5 L691.9,192.3 L690.3,195.5 L688.7,191 L687.2,191.9 L685.6,198.9 L684.1,217.1 L682.5,217.6 L680.9,220 L679.4,220.4 L677.8,222.1 L676.3,221.8 L674.7,223.9 L673.1,224.8 L671.6,223.2 L670,219.1 L668.5,222.5 L666.9,221.8 L665.3,224.2 L663.8,221 L662.2,215.9 L660.7,202.4 L659.1,206.2 L657.5,212 L656,220.2 L654.4,220.6 L652.8,220.1 L651.3,219.2 L649.7,218.6 L648.2,222 L646.6,221.6 L645,219.8 L643.5,222 L641.9,221.9 L640.4,220.4 L638.8,221.2 L637.2,220.3 L635.7,221.7 L634.1,215.4 L632.6,193.1 L631,192.4 L629.4,188.9 L627.9,187.8 L626.3,184.9 L624.8,188.3 L623.2,184.6 L621.6,185.6 L620.1,184.3 L618.5,176.6 L617,179.7 L615.4,181.9 L613.8,176.7 L612.3,180.5 L610.7,189.2 L609.2,183.5 L607.6,181.6 L606,186.7 L604.5,178.5 L602.9,185.5 L601.4,181.4 L599.8,183 L598.2,184.2 L596.7,188.5 L595.1,180.7 L593.6,183.5 L592,183 L590.4,181.1 L588.9,189 L587.3,188.7 L585.8,184.4 L584.2,185.7 L582.6,183.6 L581.1,186.7 L579.5,192.3 L578,190.6 L576.4,186.3 L574.8,182.1 L573.3,185.9 L571.7,185.3 L570.2,184 L568.6,182.7 L567,184.9 L565.5,187.9 L563.9,185 L562.4,181.8 L560.8,185.5 L559.2,181.6 L557.7,185.6 L556.1,183.6 L554.5,183.2 L553,186.2 L551.4,182 L549.9,182.3 L548.3,187.5 L546.7,176.6 L545.2,176.6 L543.6,180.3 L542.1,184.3 L540.5,186.1 L538.9,185 L537.4,182.5 L535.8,180.5 L534.3,181.4 L532.7,184.2 L531.1,186.4 L529.6,185.6 L528,188.7 L526.5,184.6 L524.9,187.9 L523.3,183 L521.8,186.9 L520.2,181.6 L518.7,182.9 L517.1,179.5 L515.5,188.5 L514,184.6 L512.4,180.7 L510.9,182.7 L509.3,183.4 L507.7,178.8 L506.2,179.5 L504.6,183.4 L503.1,183.5 L501.5,180.1 L499.9,182.9 L498.4,182.4 L496.8,180 L495.3,184 L493.7,185.9 L492.1,178.7 L490.6,183.5 L489,187.7 L487.5,183.5 L485.9,185.6 L484.3,180.6 L482.8,180.1 L481.2,179 L479.7,180.4 L478.1,180.1 L476.5,182.2 L475,180 L473.4,181.2 L471.9,183.5 L470.3,184.4 L468.7,186.8 L467.2,185.2 L465.6,182.9 L464,182.7 L462.5,179.2 L460.9,185.7 L459.4,182.9 L457.8,183.9 L456.2,186.5 L454.7,188 L453.1,184.5 L451.6,191.4 L450,187.1 L448.4,181.4 L446.9,179.9 L445.3,187.2 L443.8,174.7 L442.2,188.2 L440.6,185.8 L439.1,183.7 L437.5,188.5 L436,186.5 L434.4,182.6 L432.8,185.8 L431.3,183.5 L429.7,185 L428.2,189.1 L426.6,186 L425,182.6 L423.5,183.5 L421.9,184.3 L420.4,185.3 L418.8,181.2 L417.2,187.7 L415.7,182.6 L414.1,183.1 L412.6,184.6 L411,186.9 L409.4,181.9 L407.9,184.4 L406.3,186.7 L404.8,186.3 L403.2,184.9 L401.6,189.3 L400.1,184.1 L398.5,188 L397,182.5 L395.4,183.5 L393.8,191.4 L392.3,180.9 L390.7,183.1 L389.2,187.2 L387.6,179.5 L386,179.1 L384.5,178.7 L382.9,188.1 L381.4,179.3 L379.8,181.8 L378.2,180.7 L376.7,185 L375.1,187.2 L373.5,184.2 L372,189.9 L370.4,187.6 L368.9,190.3 L367.3,185.8 L365.7,186.7 L364.2,190.2 L362.6,189.6 L361.1,189.5 L359.5,184.6 L357.9,186.7 L356.4,182.2 L354.8,187.5 L353.3,188.7 L351.7,182.3 L350.1,186.1 L348.6,183 L347,182.6 L345.5,186.9 L343.9,186.3 L342.3,186.8 L340.8,186.4 L339.2,179.5 L337.7,182.3 L336.1,180.4 L334.5,179.1 L333,182.5 L331.4,183 L329.9,180.2 L328.3,184.8 L326.7,183.3 L325.2,177.4 L323.6,186.3 L322.1,185 L320.5,184.1 L318.9,181.9 L317.4,186.3 L315.8,181.5 L314.3,179.1 L312.7,183.4 L311.1,188.9 L309.6,187.2 L308,179.4 L306.5,182.9 L304.9,182.3 L303.3,186.8 L301.8,183.9 L300.2,190.3 L298.7,184.5 L297.1,183.4 L295.5,186.1 L294,186.2 L292.4,186.4 L290.9,184.9 L289.3,180.8 L287.7,186 L286.2,188.6 L284.6,182.1 L283.1,181.9 L281.5,182.1 L279.9,181.4 L278.4,181.8 L276.8,180.4 L275.2,181.1 L273.7,185.1 L272.1,185.8 L270.6,184.1 L269,186.4 L267.4,184.8 L265.9,182.3 L264.3,182.7 L262.8,189.4 L261.2,187.8 L259.6,184.5 L258.1,185 L256.5,186.5 L255,178.6 L253.4,178.6 L251.8,183.9 L250.3,186.4 L248.7,181.1 L247.2,187.6 L245.6,186.6 L244,186.3 L242.5,187.1 L240.9,186.1 L239.4,183 L237.8,180 L236.2,186 L234.7,194.6 L233.1,188.8 L231.6,181.8 L230,186.5 L228.4,185.4 L226.9,189.7 L225.3,184.8 L223.8,186.1 L222.2,182.6 L220.6,184.4 L219.1,184 L217.5,179.3 L216,187.2 L214.4,185 L212.8,181.2 L211.3,183.9 L209.7,191.2 L208.2,190.7 L206.6,189.7 L205,183.7 L203.5,179 L201.9,165.6 L200.4,179.5 L198.8,178.4 L197.2,180.5 L195.7,187.9 L194.1,186.3 L192.6,189.3 L191,181.5 L189.4,188.4 L187.9,181.6 L186.3,186.6 L184.7,184.2 L183.2,183.7 L181.6,191.8 L180.1,183.8 L178.5,187.9 L176.9,183.2 L175.4,174.5 L173.8,184.8 L172.3,183.5 L170.7,179.6 L169.1,191.1 L167.6,185.5 L166,186.8 L164.5,183.4 L162.9,188 L161.3,185.3 L159.8,186 L158.2,182.3 L156.7,184.5 L155.1,186 L153.5,183 L152,181.7 L150.4,190.1 L148.9,188.7 L147.3,186.7 L145.7,191.1 L144.2,184.4 L142.6,183 L141.1,185.8 L139.5,179.2 Z" fill="#0a50a1"/>
<path d="M139.5,179.2 L141.1,185.8 L142.6,183 L144.2,184.4 L145.7,191.1 L147.3,186.7 L148.9,188.7 L150.4,190.1 L152,181.7 L153.5,183 L155.1,186 L156.7,184.5 L158.2,182.3 L159.8,186 L161.3,185.3 L162.9,188 L164.5,183.4 L166,186.8 L167.6,185.5 L169.1,191.1 L170.7,179.6 L172.3,183.5 L173.8,184.8 L175.4,174.5 L176.9,183.2 L178.5,187.9 L180.1,183.8 L181.6,191.8 L183.2,183.7 L184.7,184.2 L186.3,186.6 L187.9,181.6 L189.4,188.4 L191,181.5 L192.6,189.3 L194.1,186.3 L195.7,187.9 L197.2,180.5 L198.8,178.4 L200.4,179.5 L201.9,165.6 L203.5,179 L205,183.7 L206.6,189.7 L208.2,190.7 L209.7,191.2 L211.3,183.9 L212.8,181.2 L214.4,185 L216,187.2 L217.5,179.3 L219.1,184 L220.6,184.4 L222.2,182.6 L223.8,186.1 L225.3,184.8 L226.9,189.7 L228.4,185.4 L230,186.5 L231.6,181.8 L233.1,188.8 L234.7,194.6 L236.2,186 L237.8,180 L239.4,183 L240.9,186.1 L242.5,187.1 L244,186.3 L245.6,186.6 L247.2,187.6 L248.7,181.1 L250.3,186.4 L251.8,183.9 L253.4,178.6 L255,178.6 L256.5,186.5 L258.1,185 L259.6,184.5 L261.2,187.8 L262.8,189.4 L264.3,182.7 L265.9,182.3 L267.4,184.8 L269,186.4 L270.6,184.1 L272.1,185.8 L273.7,185.1 L275.2,181.1 L276.8,180.4 L278.4,181.8 L279.9,181.4 L281.5,182.1 L283.1,181.9 L284.6,182.1 L286.2,188.6 L287.7,186 L289.3,180.8 L290.9,184.9 L292.4,186.4 L294,186.2 L295.5,186.1 L297.1,183.4 L298.7,184.5 L300.2,190.3 L301.8,183.9 L303.3,186.8 L304.9,182.3 L306.5,182.9 L308,179.4 L309.6,187.2 L311.1,188.9 L312.7,183.4 L314.3,179.1 L315.8,181.5 L317.4,186.3 L318.9,181.9 L320.5,184.1 L322.1,185 L323.6,186.3 L325.2,177.4 L326.7,183.3 L328.3,184.8 L329.9,180.2 L331.4,183 L333,182.5 L334.5,179.1 L336.1,180.4 L337.7,182.3 L339.2,179.5 L340.8,186.4 L342.3,186.8 L343.9,186.3 L345.5,186.9 L347,182.6 L348.6,183 L350.1,186.1 L351.7,182.3 L353.3,188.7 L354.8,187.5 L356.4,182.2 L357.9,186.7 L359.5,184.6 L361.1,189.5 L362.6,189.6 L364.2,190.2 L365.7,186.7 L367.3,185.8 L368.9,190.3 L370.4,187.6 L372,189.9 L373.5,184.2 L375.1,187.2 L376.7,185 L378.2,180.7 L379.8,181.8 L381.4,179.3 L382.9,188.1 L384.5,178.7 L386,179.1 L387.6,179.5 L389.2,187.2 L390.7,183.1 L392.3,180.9 L393.8,191.4 L395.4,183.5 L397,182.5 L398.5,188 L400.1,184.1 L401.6,189.3 L403.2,184.9 L404.8,186.3 L406.3,186.7 L407.9,184.4 L409.4,181.9 L411,186.9 L412.6,184.6 L414.1,183.1 L415.7,182.6 L417.2,187.7 L418.8,181.2 L420.4,185.3 L421.9,184.3 L423.5,183.5 L425,182.6 L426.6,186 L428.2,189.1 L429.7,185 L431.3,183.5 L432.8,185.8 L434.4,182.6 L436,186.5 L437.5,188.5 L439.1,183.7 L440.6,185.8 L442.2,188.2 L443.8,174.7 L445.3,187.2 L446.9,179.9 L448.4,181.4 L450,187.1 L451.6,191.4 L453.1,184.5 L454.7,188 L456.2,186.5 L457.8,183.9 L459.4,182.9 L460.9,185.7 L462.5,179.2 L464,182.7 L465.6,182.9 L467.2,185.2 L468.7,186.8 L470.3,184.4 L471.9,183.5 L473.4,181.2 L475,180 L476.5,182.2 L478.1,180.1 L479.7,180.4 L481.2,179 L482.8,180.1 L484.3,180.6 L485.9,185.6 L487.5,183.5 L489,187.7 L490.6,183.5 L492.1,178.7 L493.7,185.9 L495.3,184 L496.8,180 L498.4,182.4 L499.9,182.9 L501.5,180.1 L503.1,183.5 L504.6,183.4 L506.2,179.5 L507.7,178.8 L509.3,183.4 L510.9,182.7 L512.4,180.7 L514,184.6 L515.5,188.5 L517.1,179.5 L518.7,182.9 L520.2,181.6 L521.8,186.9 L523.3,183 L524.9,187.9 L526.5,184.6 L528,188.7 L529.6,185.6 L531.1,186.4 L532.7,184.2 L534.3,181.4 L535.8,180.5 L537.4,182.5 L538.9,185 L540.5,186.1 L542.1,184.3 L543.6,180.3 L545.2,176.6 L546.7,176.6 L548.3,187.5 L549.9,182.3 L551.4,182 L553,186.2 L554.5,183.2 L556.1,183.6 L557.7,185.6 L559.2,181.6 L560.8,185.5 L562.4,181.8 L563.9,185 L565.5,187.9 L567,184.9 L568.6,182.7 L570.2,184 L571.7,185.3 L573.3,185.9 L574.8,182.1 L576.4,186.3 L578,190.6 L579.5,192.3 L581.1,186.7 L582.6,183.6 L584.2,185.7 L585.8,184.4 L587.3,188.7 L588.9,189 L590.4,181.1 L592,183 L593.6,183.5 L595.1,180.7 L596.7,188.5 L598.2,184.2 L599.8,183 L601.4,181.4 L602.9,185.5 L604.5,178.5 L606,186.7 L607.6,181.6 L609.2,183.5 L610.7,189.2 L612.3,180.5 L613.8,176.7 L615.4,181.9 L617,179.7 L618.5,176.6 L620.1,184.3 L621.6,185.6 L623.2,184.6 L624.8,188.3 L626.3,184.9 L627.9,187.8 L629.4,188.9 L631,192.4 L632.6,193.1 L634.1,215.4 L635.7,221.7 L637.2,220.3 L638.8,221.2 L640.4,220.4 L641.9,221.9 L643.5,222 L645,219.8 L646.6,221.6 L648.2,222 L649.7,218.6 L651.3,219.2 L652.8,220.1 L654.4,220.6 L656,220.2 L657.5,212 L659.1,206.2 L660.7,202.4 L662.2,215.9 L663.8,221 L665.3,224.2 L666.9,221.8 L668.5,222.5 L670,219.1 L671.6,223.2 L673.1,224.8 L674.7,223.9 L676.3,221.8 L677.8,222.1 L679.4,220.4 L680.9,220 L682.5,217.6 L684.1,217.1 L685.6,198.9 L687.2,191.9 L688.7,191 L690.3,195.5 L691.9,192.3 L693.4,190.5 L695,196.2 L696.5,190.1 L698.1,189.6 L699.7,189 L701.2,185.8 L702.8,185.2 L704.3,190 L705.9,184 L707.5,187.3 L709,187 L710.6,184.8 L712.1,181.9 L713.7,183.7 L715.3,188.5 L716.8,183.1 L718.4,187.1 L719.9,184.7 L721.5,177.2 L723.1,183.3 L724.6,187.8 L726.2,193.1 L727.7,187.4 L729.3,189.7 L730.9,186 L732.4,184 L734,184.1 L735.5,185.5 L737.1,187.5 L738.7,192 L740.2,189.8 L741.8,184 L743.3,184.7 L744.9,183.5 L746.5,185 L748,185 L749.6,181.5 L751.2,185.6 L752.7,182.7 L754.3,188.3 L755.8,180.8 L757.4,183.9 L759,184.8 L760.5,179.8 L762.1,182.8 L763.6,187.2 L765.2,181.4 L766.8,188 L768.3,181.9 L769.9,180.8 L771.4,190.2 L773,180.2 L774.6,186.8 L776.1,185.3 L777.7,186.4 L779.2,182.5 L780.8,180 L782.4,187 L783.9,190 L785.5,186.7 L787,181.8 L788.6,185.9 L790.2,187.9 L791.7,184.4 L793.3,191.5 L794.8,185.8 L796.4,189.3 L798,185.9 L799.5,188 L801.1,189.4 L802.6,186.6 L804.2,190.9 L805.8,186.6 L807.3,189.5 L808.9,188.6 L810.4,193 L812,188.5 L813.6,193.5 L815.1,189 L816.7,186.8 L818.2,189.7 L819.8,186.7 L821.4,184.9 L822.9,188.4 L824.5,188.5 L826,186.8 L827.6,184.5 L829.2,182.2 L830.7,191 L832.3,189.6 L833.8,192.4 L835.4,188.4 L837,188.1 L838.5,185.8 L840.1,192 L841.6,187 L843.2,188.6 L844.8,183.2 L846.3,187.6 L847.9,186.3 L849.5,182.6 L851,177.4 L852.6,196.4 L854.1,185.7 L855.7,183.4 L857.3,190.1 L858.8,187.1 L860.4,191.6 L861.9,189.4 L863.5,184.4 L865.1,191.6 L866.6,202.9 L868.2,215.7 L869.7,221 L871.3,221.9 L872.9,220.7 L874.4,220.5 L876,221.3 L877.5,221.5 L879.1,223.6 L880.7,220.6 L882.2,220.8 L883.8,224.4 L885.3,221 L886.9,224.3 L888.5,219.8 L890,216.1 L891.6,208.4 L893.1,196.5 L894.7,205.6 L896.3,219.1 L897.8,221.2 L899.4,219.3 L900.9,219.5 L902.5,219.8 L904.1,220.7 L905.6,221.3 L907.2,220.2 L908.7,222 L910.3,221.7 L911.9,219.3 L913.4,218.7 L915,217.9 L916.5,222.8 L918.1,214.3 L919.7,194.6 L921.2,189.9 L922.8,183.2 L924.3,187.3 L925.9,185.5 L927.5,183.9 L929,186.8 L930.6,184 L932.1,180.1 L933.7,182.8 L935.3,187.9 L936.8,188.1 L938.4,186.8 L940,189.6 L941.5,177.2 L943.1,184.1 L944.6,187 L946.2,188.6 L947.8,188.3 L949.3,186.5 L950.9,187.6 L952.4,180.5 L954,185.3 L955.6,185.6 L957.1,182.2 L958.7,178.6 L960.2,181.2 L961.8,185.5 L963.4,184.5 L964.9,184.5 L966.5,183.6 L968,184.2 L969.6,189.4 L971.2,189.7 L972.7,184.3 L974.3,186.5 L975.8,180 L977.4,182.6 L979,187.4 L980.5,184.6 L982.1,188.9 L983.6,187.1 L985.2,183.1 L986.8,193 L988.3,191.9 L989.9,185.2 L991.4,188.9 L993,188.4 L994.6,184.7 L996.1,186.1 L997.7,181.5 L999.2,184.3 L1000.8,178.3 L1002.4,178.1 L1003.9,175.1 L1005.5,169.4 L1007,169.4 L1008.6,180 L1010.2,183.1 L1011.7,182.9 L1013.3,183.1 L1014.8,186.2 L1016.4,182.2 L1018,178 L1019.5,168.4 L1021.1,182.9 L1022.6,180.2 L1024.2,182.6 L1025.8,176.8 L1027.3,177.6 L1028.9,180.3 L1030.5,178.5 L1032,181.2 L1033.6,178.5 L1035.1,186.4 L1036.7,184.1 L1038.3,181.2 L1039.8,180.9 L1041.4,182.6 L1042.9,188.4 L1044.5,185.5 L1046.1,186.2 L1047.6,179.9 L1049.2,182.7 L1050.7,182.1 L1052.3,182.8 L1053.9,186.5 L1055.4,182.3 L1057,179.7 L1058.5,183.8 L1060.1,186.5 L1061.7,182.2 L1063.2,188.1 L1064.8,183 L1066.3,188.8 L1067.9,186.1 L1069.5,183.9 L1071,184 L1072.6,183.1 L1074.1,186.5 L1075.7,186.3 L1077.3,190.4 L1078.8,190.8 L1080.4,192.2 L1081.9,182.4 L1083.5,184.5 L1085.1,176.7 L1086.6,180.9 L1088.2,183.5 L1089.7,180.9 L1091.3,183.2 L1092.9,182.4 L1094.4,189.4 L1096,183 L1097.5,188.5 L1099.1,182.8 L1100.7,184.2 L1102.2,182.5 L1103.8,182.5 L1105.3,181.4 L1106.9,183 L1108.5,182.5 L1110,182.7 L1111.6,189.4 L1113.1,185 L1114.7,183.5 L1116.3,187.5 L1117.8,184.1 L1119.4,186.8 L1120.9,181.7 L1122.5,186.1 L1124.1,185 L1125.6,183.8 L1127.2,189.5 L1128.8,184.3 L1130.3,188.4 L1131.9,188.6 L1133.4,190.5 L1135,185.2 L1136.6,184 L1138.1,182.2 L1139.7,180.9 L1141.2,187.2 L1142.8,187 L1144.4,186.9 L1145.9,184.3 L1147.5,186.8 L1149,185.7 L1150.6,185.5 L1152.2,185.7 L1153.7,187.3 L1155.3,183.5 L1156.8,189.1 L1158.4,187.6 L1160,185 L1161.5,187.4 L1163.1,185.6 L1164.6,188.1 L1166.2,182.9 L1167.8,192.5 L1169.3,191 L1170.9,187.7 L1172.4,178.4 L1174,182.8 L1175.6,185.5 L1177.1,190.2 L1178.7,182.1 L1180.2,183.6 L1181.8,186.3 L1183.4,188.6 L1184.9,192.2 L1186.5,186.2 L1188,186.2 L1189.6,185.8 L1191.2,184.8 L1192.7,190.9 L1194.3,183.4 L1195.8,189.2 L1197.4,184.6 L1199,181 L1200.5,182.8 L1202.1,182.2 L1203.6,181.7 L1205.2,181.8 L1206.8,184 L1208.3,192.1 L1209.9,182.7 L1211.4,183.9 L1213,183.3 L1214.6,189.5 L1216.1,188.7 L1217.7,188.4 L1219.3,180.3 L1220.8,186.3 L1222.4,183.2 L1223.9,186.5 L1225.5,182.8 L1227.1,187.7 L1228.6,181.2 L1230.2,184 L1231.7,188.9 L1233.3,185.4 L1234.9,185.2 L1236.4,187.9 L1238,177.9 L1239.5,180.7 L1241.1,183.3 L1242.7,181.8 L1244.2,185.4 L1245.8,179.3 L1247.3,186.2 L1248.9,188.4 L1250.5,180.9 L1252,182.9 L1253.6,188.6 L1255.1,187.4 L1256.7,189.8 L1258.3,191.3 L1259.8,184.5 L1261.4,180.7 L1262.9,191.8 L1264.5,185.3 L1264.5,220.7 L1262.9,223 L1261.4,219 L1259.8,220.1 L1258.3,222.7 L1256.7,222 L1255.1,221.2 L1253.6,221.6 L1252,220.1 L1250.5,217.8 L1248.9,221.8 L1247.3,219.4 L1245.8,217.3 L1244.2,220.5 L1242.7,219.4 L1241.1,218.9 L1239.5,218.3 L1238,217.9 L1236.4,221 L1234.9,220.5 L1233.3,220.4 L1231.7,222.6 L1230.2,218.6 L1228.6,218.3 L1227.1,221.2 L1225.5,220.2 L1223.9,220.9 L1222.4,219.3 L1220.8,220.9 L1219.3,218.6 L1217.7,220.9 L1216.1,221.9 L1214.6,221.7 L1213,219.6 L1211.4,219.8 L1209.9,220.5 L1208.3,223.2 L1206.8,219.8 L1205.2,218.5 L1203.6,219.6 L1202.1,218.9 L1200.5,218.6 L1199,217.8 L1197.4,220.1 L1195.8,221.6 L1194.3,219.4 L1192.7,222.8 L1191.2,219.8 L1189.6,220.5 L1188,219.8 L1186.5,221.1 L1184.9,224.1 L1183.4,221.1 L1181.8,220.8 L1180.2,219.2 L1178.7,218.2 L1177.1,222.3 L1175.6,220.4 L1174,219.3 L1172.4,218.1 L1170.9,221.3 L1169.3,223.6 L1167.8,223.1 L1166.2,220.1 L1164.6,220.3 L1163.1,221.3 L1161.5,220.5 L1160,220.5 L1158.4,221.7 L1156.8,221.4 L1155.3,219.2 L1153.7,221.7 L1152.2,220.6 L1150.6,220.2 L1149,220.7 L1147.5,220.1 L1145.9,219.3 L1144.4,220.9 L1142.8,221.1 L1141.2,220.3 L1139.7,219 L1138.1,219.2 L1136.6,219.8 L1135,220.9 L1133.4,222 L1131.9,221.8 L1130.3,221.5 L1128.8,219.9 L1127.2,222.3 L1125.6,219.8 L1124.1,219.7 L1122.5,220.8 L1120.9,219.1 L1119.4,220.9 L1117.8,220.4 L1116.3,220.7 L1114.7,219.8 L1113.1,219.8 L1111.6,221.4 L1110,218.6 L1108.5,219.2 L1106.9,219.6 L1105.3,219.4 L1103.8,219.4 L1102.2,219.3 L1100.7,219.8 L1099.1,219.1 L1097.5,221.7 L1096,218.7 L1094.4,222 L1092.9,219.5 L1091.3,219.1 L1089.7,218.3 L1088.2,219.7 L1086.6,219.4 L1085.1,216.1 L1083.5,220.1 L1081.9,219 L1080.4,222.8 L1078.8,221.5 L1077.3,222.3 L1075.7,220.3 L1074.1,220.5 L1072.6,220.3 L1071,220.1 L1069.5,219.3 L1067.9,221.1 L1066.3,221.8 L1064.8,219 L1063.2,221.3 L1061.7,219.2 L1060.1,220 L1058.5,219.7 L1057,219 L1055.4,219.6 L1053.9,220.8 L1052.3,219.2 L1050.7,219.2 L1049.2,219 L1047.6,219 L1046.1,220.2 L1044.5,220.3 L1042.9,221.5 L1041.4,218.8 L1039.8,218.9 L1038.3,218 L1036.7,218.7 L1035.1,220.3 L1033.6,218 L1032,218.9 L1030.5,217.6 L1028.9,218.1 L1027.3,218.9 L1025.8,217 L1024.2,219.7 L1022.6,218.9 L1021.1,220.1 L1019.5,214 L1018,217.8 L1016.4,218.5 L1014.8,219.9 L1013.3,219.4 L1011.7,219.2 L1010.2,220.3 L1008.6,218.8 L1007,214.8 L1005.5,215 L1003.9,216.9 L1002.4,216.9 L1000.8,217.1 L999.2,220 L997.7,218.5 L996.1,220.8 L994.6,220.6 L993,221.9 L991.4,222.1 L989.9,220.3 L988.3,222 L986.8,222.7 L985.2,219.4 L983.6,221.2 L982.1,221.4 L980.5,219.4 L979,220.7 L977.4,219.3 L975.8,219.3 L974.3,220.4 L972.7,220.2 L971.2,222.5 L969.6,221.7 L968,219.6 L966.5,220.2 L964.9,220.2 L963.4,220.2 L961.8,220.6 L960.2,218.9 L958.7,218.1 L957.1,218.6 L955.6,220.3 L954,220 L952.4,218.9 L950.9,220.1 L949.3,220.3 L947.8,222.6 L946.2,221 L944.6,220.4 L943.1,220.6 L941.5,217 L940,221.7 L938.4,220.6 L936.8,222.1 L935.3,222.1 L933.7,219.9 L932.1,217.9 L930.6,219.7 L929,220.7 L927.5,219.6 L925.9,220 L924.3,220.5 L922.8,218.1 L921.2,221.7 L919.7,217.9 L918.1,220.2 L916.5,222.8 L915,217.9 L913.4,218.7 L911.9,219.3 L910.3,221.7 L908.7,222 L907.2,220.2 L905.6,221.3 L904.1,220.7 L902.5,219.8 L900.9,219.5 L899.4,219.3 L897.8,221.2 L896.3,221.4 L894.7,223.6 L893.1,230.4 L891.6,242.3 L890,252 L888.5,255.5 L886.9,255.5 L885.3,255.5 L883.8,255.5 L882.2,255.5 L880.7,255.5 L879.1,255.5 L877.5,255.5 L876,255.5 L874.4,255.5 L872.9,255.5 L871.3,255.5 L869.7,255.5 L868.2,247.3 L866.6,237.4 L865.1,226.7 L863.5,219.3 L861.9,221.1 L860.4,222.2 L858.8,220.9 L857.3,221.2 L855.7,218.1 L854.1,220.4 L852.6,225 L851,217.5 L849.5,218.2 L847.9,219.7 L846.3,221.2 L844.8,219 L843.2,221 L841.6,220.2 L840.1,222.6 L838.5,219.5 L837,221.3 L835.4,220.8 L833.8,222.3 L832.3,221.7 L830.7,222.5 L829.2,218.5 L827.6,219.8 L826,219.3 L824.5,220.6 L822.9,220.1 L821.4,220.2 L819.8,221.3 L818.2,221.4 L816.7,220 L815.1,221.6 L813.6,222.6 L812,220.7 L810.4,222.8 L808.9,220.9 L807.3,221.4 L805.8,219.6 L804.2,222.2 L802.6,219.5 L801.1,221.3 L799.5,220.3 L798,220.7 L796.4,221.1 L794.8,219 L793.3,221.1 L791.7,219.6 L790.2,221.1 L788.6,220.1 L787,218.2 L785.5,219.7 L783.9,222.3 L782.4,220.5 L780.8,217.9 L779.2,218.7 L777.7,221.1 L776.1,220.1 L774.6,220.8 L773,218 L771.4,221.4 L769.9,217.6 L768.3,218.9 L766.8,221.4 L765.2,218.5 L763.6,220.4 L762.1,218.7 L760.5,218.1 L759,219.4 L757.4,219.2 L755.8,219.1 L754.3,221.4 L752.7,218.4 L751.2,220.5 L749.6,217.6 L748,220.2 L746.5,219.5 L744.9,219.8 L743.3,220.1 L741.8,219.2 L740.2,221.6 L738.7,222.1 L737.1,220 L735.5,219.8 L734,218.4 L732.4,220.6 L730.9,220.2 L729.3,221.8 L727.7,220.5 L726.2,221.6 L724.6,220.8 L723.1,218.6 L721.5,217 L719.9,219.6 L718.4,220.8 L716.8,219.5 L715.3,220.5 L713.7,218.4 L712.1,219.4 L710.6,219 L709,219.8 L707.5,220.2 L705.9,219.7 L704.3,221.8 L702.8,219.6 L701.2,220.3 L699.7,221.5 L698.1,221.8 L696.5,221.3 L695,223.7 L693.4,221.5 L691.9,222.3 L690.3,223.1 L688.7,221.1 L687.2,226.8 L685.6,237.9 L684.1,248.9 L682.5,255.5 L680.9,255.5 L679.4,255.5 L677.8,255.5 L676.3,255.5 L674.7,255.5 L673.1,255.5 L671.6,255.5 L670,255.5 L668.5,255.5 L666.9,255.5 L665.3,255.5 L663.8,255.5 L662.2,247.5 L660.7,237.2 L659.1,228.4 L657.5,221.4 L656,220.2 L654.4,220.6 L652.8,220.1 L651.3,219.2 L649.7,218.6 L648.2,222 L646.6,221.6 L645,219.8 L643.5,222 L641.9,221.9 L640.4,220.4 L638.8,221.2 L637.2,220.3 L635.7,221.7 L634.1,222.8 L632.6,219.2 L631,223.1 L629.4,221 L627.9,221.3 L626.3,219.9 L624.8,219.9 L623.2,217.4 L621.6,218.7 L620.1,217.8 L618.5,215.3 L617,216.2 L615.4,217.4 L613.8,215.5 L612.3,215.9 L610.7,219.3 L609.2,217.6 L607.6,216.8 L606,219.4 L604.5,215.8 L602.9,219.4 L601.4,216.8 L599.8,217.8 L598.2,218.3 L596.7,220.1 L595.1,217.4 L593.6,217.5 L592,218.5 L590.4,217.6 L588.9,219.9 L587.3,220.7 L585.8,219 L584.2,218.7 L582.6,217.7 L581.1,218.4 L579.5,221.2 L578,220.6 L576.4,218.6 L574.8,217.8 L573.3,217.8 L571.7,218.4 L570.2,218.9 L568.6,217.8 L567,218.7 L565.5,219.2 L563.9,219 L562.4,217.4 L560.8,218.2 L559.2,217.8 L557.7,219.2 L556.1,218.8 L554.5,217.6 L553,219.2 L551.4,217.3 L549.9,217.4 L548.3,220.6 L546.7,214.8 L545.2,215.6 L543.6,217 L542.1,218.7 L540.5,218.5 L538.9,218 L537.4,217.9 L535.8,217.1 L534.3,217.2 L532.7,218 L531.1,219.5 L529.6,219 L528,219.2 L526.5,217.6 L524.9,219.8 L523.3,218.6 L521.8,218.7 L520.2,218.1 L518.7,217.6 L517.1,216.4 L515.5,219.4 L514,218.5 L512.4,217.1 L510.9,217.8 L509.3,218 L507.7,215.9 L506.2,216.3 L504.6,218.1 L503.1,217.5 L501.5,217.1 L499.9,218.5 L498.4,217.5 L496.8,216.6 L495.3,217.9 L493.7,219 L492.1,215.4 L490.6,217.2 L489,219.4 L487.5,218 L485.9,218.2 L484.3,218 L482.8,216.7 L481.2,216.9 L479.7,217.3 L478.1,217.1 L476.5,218.2 L475,216.5 L473.4,217.2 L471.9,218.2 L470.3,218.4 L468.7,219.3 L467.2,218.1 L465.6,217.4 L464,216.9 L462.5,216.4 L460.9,219.2 L459.4,218.2 L457.8,218.4 L456.2,219.5 L454.7,219.5 L453.1,218.1 L451.6,221 L450,219.3 L448.4,216.7 L446.9,216.6 L445.3,219.9 L443.8,214.6 L442.2,219.1 L440.6,218.1 L439.1,219.1 L437.5,219.8 L436,218.9 L434.4,216.9 L432.8,219.7 L431.3,218.9 L429.7,218.7 L428.2,219.9 L426.6,219 L425,217.6 L423.5,217.9 L421.9,219 L420.4,218.3 L418.8,217.4 L417.2,218.7 L415.7,217.4 L414.1,217.1 L412.6,218.1 L411,219.6 L409.4,217 L407.9,218.1 L406.3,218.4 L404.8,218.8 L403.2,218.7 L401.6,220.3 L400.1,218.8 L398.5,219.6 L397,217.2 L395.4,218.3 L393.8,220.8 L392.3,217.2 L390.7,217 L389.2,219.2 L387.6,216.6 L386,216.5 L384.5,216.8 L382.9,220 L381.4,216.9 L379.8,218 L378.2,216.6 L376.7,219.2 L375.1,218.8 L373.5,218.3 L372,220.6 L370.4,219.7 L368.9,220.6 L367.3,218.7 L365.7,219 L364.2,221.4 L362.6,219.8 L361.1,220.4 L359.5,218.1 L357.9,218.7 L356.4,217.3 L354.8,219.7 L353.3,220.8 L351.7,218 L350.1,218.9 L348.6,217.1 L347,218 L345.5,219.2 L343.9,219 L342.3,219.4 L340.8,218.9 L339.2,216.4 L337.7,217.6 L336.1,216.4 L334.5,215.9 L333,217.5 L331.4,217.5 L329.9,217.5 L328.3,218.7 L326.7,218.2 L325.2,215.8 L323.6,219.4 L322.1,218 L320.5,217.9 L318.9,217.7 L317.4,219.2 L315.8,217.7 L314.3,215.8 L312.7,218.2 L311.1,220 L309.6,219.3 L308,216.2 L306.5,216.8 L304.9,217.5 L303.3,219.6 L301.8,217.7 L300.2,220 L298.7,218.9 L297.1,217.9 L295.5,219.2 L294,218.7 L292.4,219 L290.9,218.7 L289.3,217.4 L287.7,219.3 L286.2,220.5 L284.6,217.9 L283.1,217 L281.5,217.9 L279.9,218.1 L278.4,216.2 L276.8,216.8 L275.2,217.3 L273.7,218.8 L272.1,219.4 L270.6,218 L269,218.8 L267.4,218.7 L265.9,216.9 L264.3,217 L262.8,219.7 L261.2,220.4 L259.6,218.8 L258.1,218.9 L256.5,219.6 L255,216.1 L253.4,216 L251.8,218.2 L250.3,219.7 L248.7,217.4 L247.2,219.5 L245.6,219.7 L244,217.8 L242.5,219.4 L240.9,219.6 L239.4,218 L237.8,216.4 L236.2,218.6 L234.7,222.6 L233.1,219.6 L231.6,217 L230,219.3 L228.4,218.9 L226.9,220.8 L225.3,218.4 L223.8,218.9 L222.2,217.3 L220.6,218.8 L219.1,219.1 L217.5,216.5 L216,219.8 L214.4,219.5 L212.8,217.3 L211.3,219.1 L209.7,221.4 L208.2,220.7 L206.6,219.9 L205,217.7 L203.5,216.2 L201.9,211.8 L200.4,216.2 L198.8,215.6 L197.2,216.9 L195.7,219 L194.1,219.5 L192.6,219.7 L191,217.8 L189.4,220.4 L187.9,216.9 L186.3,218.7 L184.7,218 L183.2,219.4 L181.6,220.4 L180.1,217.8 L178.5,219.4 L176.9,217.7 L175.4,214.4 L173.8,218 L172.3,218.5 L170.7,216.5 L169.1,219.8 L167.6,218.2 L166,219.5 L164.5,217.9 L162.9,220.2 L161.3,218.7 L159.8,218.4 L158.2,216.8 L156.7,218.4 L155.1,218.1 L153.5,217.9 L152,218.4 L150.4,220.7 L148.9,220.9 L147.3,219.4 L145.7,221.4 L144.2,217.8 L142.6,217.3 L141.1,217.5 L139.5,216.6 Z" fill="#5195ce"/>
<path d="M139.5,216.6 L141.1,217.5 L142.6,217.3 L144.2,217.8 L145.7,221.4 L147.3,219.4 L148.9,220.9 L150.4,220.7 L152,218.4 L153.5,217.9 L155.1,218.1 L156.7,218.4 L158.2,216.8 L159.8,218.4 L161.3,218.7 L162.9,220.2 L164.5,217.9 L166,219.5 L167.6,218.2 L169.1,219.8 L170.7,216.5 L172.3,218.5 L173.8,218 L175.4,214.4 L176.9,217.7 L178.5,219.4 L180.1,217.8 L181.6,220.4 L183.2,219.4 L184.7,218 L186.3,218.7 L187.9,216.9 L189.4,220.4 L191,217.8 L192.6,219.7 L194.1,219.5 L195.7,219 L197.2,216.9 L198.8,215.6 L200.4,216.2 L201.9,211.8 L203.5,216.2 L205,217.7 L206.6,219.9 L208.2,220.7 L209.7,221.4 L211.3,219.1 L212.8,217.3 L214.4,219.5 L216,219.8 L217.5,216.5 L219.1,219.1 L220.6,218.8 L222.2,217.3 L223.8,218.9 L225.3,218.4 L226.9,220.8 L228.4,218.9 L230,219.3 L231.6,217 L233.1,219.6 L234.7,222.6 L236.2,218.6 L237.8,216.4 L239.4,218 L240.9,219.6 L242.5,219.4 L244,217.8 L245.6,219.7 L247.2,219.5 L248.7,217.4 L250.3,219.7 L251.8,218.2 L253.4,216 L255,216.1 L256.5,219.6 L258.1,218.9 L259.6,218.8 L261.2,220.4 L262.8,219.7 L264.3,217 L265.9,216.9 L267.4,218.7 L269,218.8 L270.6,218 L272.1,219.4 L273.7,218.8 L275.2,217.3 L276.8,216.8 L278.4,216.2 L279.9,218.1 L281.5,217.9 L283.1,217 L284.6,217.9 L286.2,220.5 L287.7,219.3 L289.3,217.4 L290.9,218.7 L292.4,219 L294,218.7 L295.5,219.2 L297.1,217.9 L298.7,218.9 L300.2,220 L301.8,217.7 L303.3,219.6 L304.9,217.5 L306.5,216.8 L308,216.2 L309.6,219.3 L311.1,220 L312.7,218.2 L314.3,215.8 L315.8,217.7 L317.4,219.2 L318.9,217.7 L320.5,217.9 L322.1,218 L323.6,219.4 L325.2,215.8 L326.7,218.2 L328.3,218.7 L329.9,217.5 L331.4,217.5 L333,217.5 L334.5,215.9 L336.1,216.4 L337.7,217.6 L339.2,216.4 L340.8,218.9 L342.3,219.4 L343.9,219 L345.5,219.2 L347,218 L348.6,217.1 L350.1,218.9 L351.7,218 L353.3,220.8 L354.8,219.7 L356.4,217.3 L357.9,218.7 L359.5,218.1 L361.1,220.4 L362.6,219.8 L364.2,221.4 L365.7,219 L367.3,218.7 L368.9,220.6 L370.4,219.7 L372,220.6 L373.5,218.3 L375.1,218.8 L376.7,219.2 L378.2,216.6 L379.8,218 L381.4,216.9 L382.9,220 L384.5,216.8 L386,216.5 L387.6,216.6 L389.2,219.2 L390.7,217 L392.3,217.2 L393.8,220.8 L395.4,218.3 L397,217.2 L398.5,219.6 L400.1,218.8 L401.6,220.3 L403.2,218.7 L404.8,218.8 L406.3,218.4 L407.9,218.1 L409.4,217 L411,219.6 L412.6,218.1 L414.1,217.1 L415.7,217.4 L417.2,218.7 L418.8,217.4 L420.4,218.3 L421.9,219 L423.5,217.9 L425,217.6 L426.6,219 L428.2,219.9 L429.7,218.7 L431.3,218.9 L432.8,219.7 L434.4,216.9 L436,218.9 L437.5,219.8 L439.1,219.1 L440.6,218.1 L442.2,219.1 L443.8,214.6 L445.3,219.9 L446.9,216.6 L448.4,216.7 L450,219.3 L451.6,221 L453.1,218.1 L454.7,219.5 L456.2,219.5 L457.8,218.4 L459.4,218.2 L460.9,219.2 L462.5,216.4 L464,216.9 L465.6,217.4 L467.2,218.1 L468.7,219.3 L470.3,218.4 L471.9,218.2 L473.4,217.2 L475,216.5 L476.5,218.2 L478.1,217.1 L479.7,217.3 L481.2,216.9 L482.8,216.7 L484.3,218 L485.9,218.2 L487.5,218 L489,219.4 L490.6,217.2 L492.1,215.4 L493.7,219 L495.3,217.9 L496.8,216.6 L498.4,217.5 L499.9,218.5 L501.5,217.1 L503.1,217.5 L504.6,218.1 L506.2,216.3 L507.7,215.9 L509.3,218 L510.9,217.8 L512.4,217.1 L514,218.5 L515.5,219.4 L517.1,216.4 L518.7,217.6 L520.2,218.1 L521.8,218.7 L523.3,218.6 L524.9,219.8 L526.5,217.6 L528,219.2 L529.6,219 L531.1,219.5 L532.7,218 L534.3,217.2 L535.8,217.1 L537.4,217.9 L538.9,218 L540.5,218.5 L542.1,218.7 L543.6,217 L545.2,215.6 L546.7,214.8 L548.3,220.6 L549.9,217.4 L551.4,217.3 L553,219.2 L554.5,217.6 L556.1,218.8 L557.7,219.2 L559.2,217.8 L560.8,218.2 L562.4,217.4 L563.9,219 L565.5,219.2 L567,218.7 L568.6,217.8 L570.2,218.9 L571.7,218.4 L573.3,217.8 L574.8,217.8 L576.4,218.6 L578,220.6 L579.5,221.2 L581.1,218.4 L582.6,217.7 L584.2,218.7 L585.8,219 L587.3,220.7 L588.9,219.9 L590.4,217.6 L592,218.5 L593.6,217.5 L595.1,217.4 L596.7,220.1 L598.2,218.3 L599.8,217.8 L601.4,216.8 L602.9,219.4 L604.5,215.8 L606,219.4 L607.6,216.8 L609.2,217.6 L610.7,219.3 L612.3,215.9 L613.8,215.5 L615.4,217.4 L617,216.2 L618.5,215.3 L620.1,217.8 L621.6,218.7 L623.2,217.4 L624.8,219.9 L626.3,219.9 L627.9,221.3 L629.4,221 L631,223.1 L632.6,219.2 L634.1,222.8 L635.7,221.7 L637.2,220.3 L638.8,221.2 L640.4,220.4 L641.9,221.9 L643.5,222 L645,219.8 L646.6,221.6 L648.2,222 L649.7,218.6 L651.3,219.2 L652.8,220.1 L654.4,220.6 L656,220.2 L657.5,221.4 L659.1,228.4 L660.7,237.2 L662.2,247.5 L663.8,255.5 L665.3,255.5 L666.9,255.5 L668.5,255.5 L670,255.5 L671.6,255.5 L673.1,255.5 L674.7,255.5 L676.3,255.5 L677.8,255.5 L679.4,255.5 L680.9,255.5 L682.5,255.5 L684.1,248.9 L685.6,237.9 L687.2,226.8 L688.7,221.1 L690.3,223.1 L691.9,222.3 L693.4,221.5 L695,223.7 L696.5,221.3 L698.1,221.8 L699.7,221.5 L701.2,220.3 L702.8,219.6 L704.3,221.8 L705.9,219.7 L707.5,220.2 L709,219.8 L710.6,219 L712.1,219.4 L713.7,218.4 L715.3,220.5 L716.8,219.5 L718.4,220.8 L719.9,219.6 L721.5,217 L723.1,218.6 L724.6,220.8 L726.2,221.6 L727.7,220.5 L729.3,221.8 L730.9,220.2 L732.4,220.6 L734,218.4 L735.5,219.8 L737.1,220 L738.7,222.1 L740.2,221.6 L741.8,219.2 L743.3,220.1 L744.9,219.8 L746.5,219.5 L748,220.2 L749.6,217.6 L751.2,220.5 L752.7,218.4 L754.3,221.4 L755.8,219.1 L757.4,219.2 L759,219.4 L760.5,218.1 L762.1,218.7 L763.6,220.4 L765.2,218.5 L766.8,221.4 L768.3,218.9 L769.9,217.6 L771.4,221.4 L773,218 L774.6,220.8 L776.1,220.1 L777.7,221.1 L779.2,218.7 L780.8,217.9 L782.4,220.5 L783.9,222.3 L785.5,219.7 L787,218.2 L788.6,220.1 L790.2,221.1 L791.7,219.6 L793.3,221.1 L794.8,219 L796.4,221.1 L798,220.7 L799.5,220.3 L801.1,221.3 L802.6,219.5 L804.2,222.2 L805.8,219.6 L807.3,221.4 L808.9,220.9 L810.4,222.8 L812,220.7 L813.6,222.6 L815.1,221.6 L816.7,220 L818.2,221.4 L819.8,221.3 L821.4,220.2 L822.9,220.1 L824.5,220.6 L826,219.3 L827.6,219.8 L829.2,218.5 L830.7,222.5 L832.3,221.7 L833.8,222.3 L835.4,220.8 L837,221.3 L838.5,219.5 L840.1,222.6 L841.6,220.2 L843.2,221 L844.8,219 L846.3,221.2 L847.9,219.7 L849.5,218.2 L851,217.5 L852.6,225 L854.1,220.4 L855.7,218.1 L857.3,221.2 L858.8,220.9 L860.4,222.2 L861.9,221.1 L863.5,219.3 L865.1,226.7 L866.6,237.4 L868.2,247.3 L869.7,255.5 L871.3,255.5 L872.9,255.5 L874.4,255.5 L876,255.5 L877.5,255.5 L879.1,255.5 L880.7,255.5 L882.2,255.5 L883.8,255.5 L885.3,255.5 L886.9,255.5 L888.5,255.5 L890,252 L891.6,242.3 L893.1,230.4 L894.7,223.6 L896.3,221.4 L897.8,221.2 L899.4,219.3 L900.9,219.5 L902.5,219.8 L904.1,220.7 L905.6,221.3 L907.2,220.2 L908.7,222 L910.3,221.7 L911.9,219.3 L913.4,218.7 L915,217.9 L916.5,222.8 L918.1,220.2 L919.7,217.9 L921.2,221.7 L922.8,218.1 L924.3,220.5 L925.9,220 L927.5,219.6 L929,220.7 L930.6,219.7 L932.1,217.9 L933.7,219.9 L935.3,222.1 L936.8,222.1 L938.4,220.6 L940,221.7 L941.5,217 L943.1,220.6 L944.6,220.4 L946.2,221 L947.8,222.6 L949.3,220.3 L950.9,220.1 L952.4,218.9 L954,220 L955.6,220.3 L957.1,218.6 L958.7,218.1 L960.2,218.9 L961.8,220.6 L963.4,220.2 L964.9,220.2 L966.5,220.2 L968,219.6 L969.6,221.7 L971.2,222.5 L972.7,220.2 L974.3,220.4 L975.8,219.3 L977.4,219.3 L979,220.7 L980.5,219.4 L982.1,221.4 L983.6,221.2 L985.2,219.4 L986.8,222.7 L988.3,222 L989.9,220.3 L991.4,222.1 L993,221.9 L994.6,220.6 L996.1,220.8 L997.7,218.5 L999.2,220 L1000.8,217.1 L1002.4,216.9 L1003.9,216.9 L1005.5,215 L1007,214.8 L1008.6,218.8 L1010.2,220.3 L1011.7,219.2 L1013.3,219.4 L1014.8,219.9 L1016.4,218.5 L1018,217.8 L1019.5,214 L1021.1,220.1 L1022.6,218.9 L1024.2,219.7 L1025.8,217 L1027.3,218.9 L1028.9,218.1 L1030.5,217.6 L1032,218.9 L1033.6,218 L1035.1,220.3 L1036.7,218.7 L1038.3,218 L1039.8,218.9 L1041.4,218.8 L1042.9,221.5 L1044.5,220.3 L1046.1,220.2 L1047.6,219 L1049.2,219 L1050.7,219.2 L1052.3,219.2 L1053.9,220.8 L1055.4,219.6 L1057,219 L1058.5,219.7 L1060.1,220 L1061.7,219.2 L1063.2,221.3 L1064.8,219 L1066.3,221.8 L1067.9,221.1 L1069.5,219.3 L1071,220.1 L1072.6,220.3 L1074.1,220.5 L1075.7,220.3 L1077.3,222.3 L1078.8,221.5 L1080.4,222.8 L1081.9,219 L1083.5,220.1 L1085.1,216.1 L1086.6,219.4 L1088.2,219.7 L1089.7,218.3 L1091.3,219.1 L1092.9,219.5 L1094.4,222 L1096,218.7 L1097.5,221.7 L1099.1,219.1 L1100.7,219.8 L1102.2,219.3 L1103.8,219.4 L1105.3,219.4 L1106.9,219.6 L1108.5,219.2 L1110,218.6 L1111.6,221.4 L1113.1,219.8 L1114.7,219.8 L1116.3,220.7 L1117.8,220.4 L1119.4,220.9 L1120.9,219.1 L1122.5,220.8 L1124.1,219.7 L1125.6,219.8 L1127.2,222.3 L1128.8,219.9 L1130.3,221.5 L1131.9,221.8 L1133.4,222 L1135,220.9 L1136.6,219.8 L1138.1,219.2 L1139.7,219 L1141.2,220.3 L1142.8,221.1 L1144.4,220.9 L1145.9,219.3 L1147.5,220.1 L1149,220.7 L1150.6,220.2 L1152.2,220.6 L1153.7,221.7 L1155.3,219.2 L1156.8,221.4 L1158.4,221.7 L1160,220.5 L1161.5,220.5 L1163.1,221.3 L1164.6,220.3 L1166.2,220.1 L1167.8,223.1 L1169.3,223.6 L1170.9,221.3 L1172.4,218.1 L1174,219.3 L1175.6,220.4 L1177.1,222.3 L1178.7,218.2 L1180.2,219.2 L1181.8,220.8 L1183.4,221.1 L1184.9,224.1 L1186.5,221.1 L1188,219.8 L1189.6,220.5 L1191.2,219.8 L1192.7,222.8 L1194.3,219.4 L1195.8,221.6 L1197.4,220.1 L1199,217.8 L1200.5,218.6 L1202.1,218.9 L1203.6,219.6 L1205.2,218.5 L1206.8,219.8 L1208.3,223.2 L1209.9,220.5 L1211.4,219.8 L1213,219.6 L1214.6,221.7 L1216.1,221.9 L1217.7,220.9 L1219.3,218.6 L1220.8,220.9 L1222.4,219.3 L1223.9,220.9 L1225.5,220.2 L1227.1,221.2 L1228.6,218.3 L1230.2,218.6 L1231.7,222.6 L1233.3,220.4 L1234.9,220.5 L1236.4,221 L1238,217.9 L1239.5,218.3 L1241.1,218.9 L1242.7,219.4 L1244.2,220.5 L1245.8,217.3 L1247.3,219.4 L1248.9,221.8 L1250.5,217.8 L1252,220.1 L1253.6,221.6 L1255.1,221.2 L1256.7,222 L1258.3,222.7 L1259.8,220.1 L1261.4,219 L1262.9,223 L1264.5,220.7 L1264.5,255.5 L139.5,255.5 Z" fill="#6ed0e0"/>
</g>
<g fill="none" stroke-width="1.3" stroke-linejoin="round">
<path d="M139.5,102.6 L141.1,117.1 L142.6,112 L144.2,112 L145.7,124.9 L147.3,119.2 L148.9,121.4 L150.4,123.1 L152,109 L153.5,112.2 L155.1,116.5 L156.7,114.6 L158.2,111.2 L159.8,115.1 L161.3,112.4 L162.9,119.2 L164.5,112.4 L166,118.1 L167.6,117.9 L169.1,126.4 L170.7,103.5 L172.3,110.3 L173.8,114 L175.4,95.3 L176.9,110 L178.5,119.4 L180.1,114.1 L181.6,125.4 L183.2,110.7 L184.7,114.6 L186.3,115.2 L187.9,109.4 L189.4,121.4 L191,111.9 L192.6,125.8 L194.1,114.7 L195.7,117.9 L197.2,109.9 L198.8,102.7 L200.4,102.9 L201.9,79.4 L203.5,104.2 L205,113 L206.6,124.5 L208.2,125.6 L209.7,125.9 L211.3,111.9 L212.8,109.2 L214.4,112.1 L216,119.3 L217.5,103.9 L219.1,107.8 L220.6,110.9 L222.2,111 L223.8,111.5 L225.3,112.9 L226.9,123.5 L228.4,113.1 L230,119.9 L231.6,112.5 L233.1,120.2 L234.7,129.5 L236.2,118.9 L237.8,104 L239.4,111.2 L240.9,115.2 L242.5,119.1 L244,113 L245.6,116.3 L247.2,119.3 L248.7,106.7 L250.3,119.1 L251.8,112.1 L253.4,104.5 L255,103.6 L256.5,120 L258.1,119.7 L259.6,116.1 L261.2,118.2 L262.8,124.7 L264.3,110.1 L265.9,112.8 L267.4,114.8 L269,118.5 L270.6,112.3 L272.1,117.1 L273.7,116.2 L275.2,108.3 L276.8,106 L278.4,108.4 L279.9,108.6 L281.5,107.9 L283.1,109.9 L284.6,110.2 L286.2,117.3 L287.7,114.5 L289.3,105 L290.9,114.2 L292.4,117.5 L294,119.2 L295.5,115.3 L297.1,114 L298.7,114.6 L300.2,124.4 L301.8,112.8 L303.3,117.5 L304.9,107.4 L306.5,111.4 L308,106.9 L309.6,117.9 L311.1,119.7 L312.7,108.8 L314.3,103.9 L315.8,107.3 L317.4,116.4 L318.9,109.5 L320.5,115.3 L322.1,114.9 L323.6,114.8 L325.2,102.3 L326.7,111.9 L328.3,113 L329.9,107.5 L331.4,112.3 L333,110.6 L334.5,104.9 L336.1,105.8 L337.7,108.3 L339.2,105 L340.8,116.9 L342.3,119.7 L343.9,117.1 L345.5,115.4 L347,106 L348.6,111.7 L350.1,117.6 L351.7,110.3 L353.3,118.1 L354.8,121.7 L356.4,108.5 L357.9,117.8 L359.5,114.8 L361.1,123.4 L362.6,123.8 L364.2,123.2 L365.7,118.7 L367.3,118.9 L368.9,122.8 L370.4,117.1 L372,124.6 L373.5,114 L375.1,119.4 L376.7,113 L378.2,107.8 L379.8,110.1 L381.4,104.2 L382.9,119 L384.5,104.7 L386,102.3 L387.6,106.9 L389.2,117.6 L390.7,113.4 L392.3,110 L393.8,126.6 L395.4,113.8 L397,109.8 L398.5,122.1 L400.1,115.5 L401.6,120.9 L403.2,115.3 L404.8,118.6 L406.3,116.4 L407.9,113.1 L409.4,109.2 L411,118.1 L412.6,112.9 L414.1,113 L415.7,111.1 L417.2,120.1 L418.8,107.9 L420.4,114.1 L421.9,112.3 L423.5,113 L425,111.4 L426.6,115.6 L428.2,118.6 L429.7,118.1 L431.3,108.2 L432.8,116.9 L434.4,110.2 L436,117 L437.5,120.7 L439.1,109.9 L440.6,116.9 L442.2,120.4 L443.8,95.5 L445.3,117.3 L446.9,106.8 L448.4,112.7 L450,119.3 L451.6,125.5 L453.1,111.3 L454.7,120.3 L456.2,118.5 L457.8,113.4 L459.4,111.9 L460.9,113.1 L462.5,105 L464,112.5 L465.6,113.8 L467.2,116.4 L468.7,116 L470.3,114.5 L471.9,114.3 L473.4,107.2 L475,108 L476.5,108.1 L478.1,103.2 L479.7,107.3 L481.2,103.8 L482.8,108.9 L484.3,105.8 L485.9,114.2 L487.5,114.7 L489,118.8 L490.6,114 L492.1,105.8 L493.7,116.2 L495.3,115.7 L496.8,105.8 L498.4,110.6 L499.9,110.5 L501.5,104.2 L503.1,115.1 L504.6,110 L506.2,104.4 L507.7,101.3 L509.3,114.7 L510.9,110.4 L512.4,109.2 L514,114.4 L515.5,124.1 L517.1,106 L518.7,112.1 L520.2,108.5 L521.8,116.1 L523.3,110.3 L524.9,120.5 L526.5,112.7 L528,123 L529.6,113.1 L531.1,117.2 L532.7,113.7 L534.3,108.3 L535.8,107.2 L537.4,108.3 L538.9,114.2 L540.5,118.5 L542.1,110.9 L543.6,106.3 L545.2,99.3 L546.7,99.8 L548.3,118.7 L549.9,109.3 L551.4,107.3 L553,118.1 L554.5,114 L556.1,106.7 L557.7,113.6 L559.2,110.2 L560.8,115.3 L562.4,106.4 L563.9,115 L565.5,121.9 L567,114.7 L568.6,111.4 L570.2,114.5 L571.7,116.6 L573.3,117.5 L574.8,108.8 L576.4,116.1 L578,122.1 L579.5,125 L581.1,119.4 L582.6,110.7 L584.2,116.6 L585.8,111.6 L587.3,126.2 L588.9,125.8 L590.4,108.1 L592,110.9 L593.6,111.7 L595.1,104.6 L596.7,119.4 L598.2,114.3 L599.8,111.3 L601.4,106 L602.9,116.9 L604.5,102.6 L606,117.6 L607.6,110.8 L609.2,110.8 L610.7,121 L612.3,105.7 L613.8,99.4 L615.4,107 L617,106.5 L618.5,111 L620.1,149.1 L621.6,149.8 L623.2,149.6 L624.8,153.2 L626.3,148.8 L627.9,154.1 L629.4,157.9 L631,159.3 L632.6,129.3 L634.1,154.6 L635.7,158.9 L637.2,155.3 L638.8,155.3 L640.4,156.5 L641.9,160.9 L643.5,162.2 L645,155.4 L646.6,158.3 L648.2,161.8 L649.7,150.8 L651.3,152.5 L652.8,155.2 L654.4,156.4 L656,154.3 L657.5,148.9 L659.1,146.2 L660.7,132.7 L662.2,151.4 L663.8,153.5 L665.3,159.6 L666.9,156.5 L668.5,155.9 L670,149.5 L671.6,159.1 L673.1,162.7 L674.7,160 L676.3,157.5 L677.8,156 L679.4,153 L680.9,152.5 L682.5,150.9 L684.1,154.8 L685.6,128 L687.2,122.6 L688.7,128.4 L690.3,135.3 L691.9,130.1 L693.4,129.9 L695,139.2 L696.5,125.6 L698.1,127.5 L699.7,125.9 L701.2,122.5 L702.8,119.6 L704.3,127 L705.9,118.4 L707.5,120.6 L709,124.7 L710.6,116.4 L712.1,115.1 L713.7,115.1 L715.3,125.8 L716.8,113.6 L718.4,123.1 L719.9,118.4 L721.5,105.1 L723.1,119.2 L724.6,124.8 L726.2,133.4 L727.7,121.3 L729.3,123.5 L730.9,120.4 L732.4,117.7 L734,116.8 L735.5,117.7 L737.1,123.7 L738.7,132.1 L740.2,127.2 L741.8,119.5 L743.3,117.2 L744.9,114.8 L746.5,119.3 L748,115.1 L749.6,112.4 L751.2,121.7 L752.7,116.8 L754.3,125.1 L755.8,111.4 L757.4,118.8 L759,119.5 L760.5,107.6 L762.1,112.5 L763.6,122.7 L765.2,116 L766.8,125.2 L768.3,114.2 L769.9,114.4 L771.4,124 L773,108.6 L774.6,119.6 L776.1,120.2 L777.7,121.2 L779.2,115.3 L780.8,110.4 L782.4,121.6 L783.9,127.5 L785.5,121.2 L787,112.8 L788.6,119.1 L790.2,125.1 L791.7,117.1 L793.3,132 L794.8,116.2 L796.4,127.7 L798,121.5 L799.5,123.1 L801.1,126.6 L802.6,124 L804.2,130.2 L805.8,120.1 L807.3,122.8 L808.9,126.7 L810.4,133.4 L812,124.7 L813.6,135.2 L815.1,126 L816.7,121.7 L818.2,127.1 L819.8,118.8 L821.4,121.7 L822.9,124.9 L824.5,123.5 L826,121 L827.6,117.9 L829.2,113 L830.7,127.1 L832.3,125.7 L833.8,130.1 L835.4,122.5 L837,125.2 L838.5,121.3 L840.1,135 L841.6,123.5 L843.2,127.5 L844.8,115.8 L846.3,121.2 L847.9,120.6 L849.5,112.8 L851,107.4 L852.6,137.2 L854.1,119.3 L855.7,118.6 L857.3,126.5 L858.8,122.5 L860.4,128.1 L861.9,128.3 L863.5,116.6 L865.1,123.9 L866.6,138.1 L868.2,153.6 L869.7,157.1 L871.3,156 L872.9,157 L874.4,154.9 L876,159.1 L877.5,156.1 L879.1,158.1 L880.7,155.8 L882.2,155.7 L883.8,163.9 L885.3,153.8 L886.9,163.5 L888.5,155 L890,147.8 L891.6,143.3 L893.1,128.4 L894.7,137.9 L896.3,153.3 L897.8,155.6 L899.4,153.2 L900.9,154.7 L902.5,156.3 L904.1,161.5 L905.6,156.3 L907.2,153.6 L908.7,159.9 L910.3,160.8 L911.9,149.7 L913.4,150.9 L915,154.4 L916.5,159.5 L918.1,151.7 L919.7,125.9 L921.2,144.5 L922.8,146.7 L924.3,152.6 L925.9,151.1 L927.5,148.1 L929,154.6 L930.6,147.1 L932.1,141.6 L933.7,135.5 L935.3,121.5 L936.8,120.1 L938.4,119.5 L940,122.8 L941.5,97.8 L943.1,114.6 L944.6,118.8 L946.2,122.9 L947.8,120.2 L949.3,119.6 L950.9,120.7 L952.4,110.9 L954,114.8 L955.6,115.3 L957.1,109.5 L958.7,104.4 L960.2,107 L961.8,113.7 L963.4,113.1 L964.9,116.3 L966.5,113.3 L968,117.2 L969.6,123.3 L971.2,121.7 L972.7,112.6 L974.3,116.8 L975.8,105.7 L977.4,115.5 L979,123.4 L980.5,116.1 L982.1,121.1 L983.6,118.3 L985.2,111.6 L986.8,130.7 L988.3,128.9 L989.9,117.6 L991.4,122.8 L993,120.1 L994.6,118.5 L996.1,118.4 L997.7,108.6 L999.2,117.1 L1000.8,101.7 L1002.4,101.2 L1003.9,99.5 L1005.5,87.4 L1007,86 L1008.6,105.1 L1010.2,111.6 L1011.7,113.1 L1013.3,116.5 L1014.8,121.5 L1016.4,108.5 L1018,105.6 L1019.5,86.5 L1021.1,110.8 L1022.6,111.8 L1024.2,113.7 L1025.8,101.8 L1027.3,101.2 L1028.9,109.7 L1030.5,103.5 L1032,109.4 L1033.6,104.9 L1035.1,119.2 L1036.7,115.2 L1038.3,108.7 L1039.8,108.4 L1041.4,114.4 L1042.9,118 L1044.5,118.3 L1046.1,116.5 L1047.6,108.2 L1049.2,112 L1050.7,109 L1052.3,112.9 L1053.9,117.7 L1055.4,107.6 L1057,105.7 L1058.5,113.8 L1060.1,117.2 L1061.7,110.4 L1063.2,120.8 L1064.8,113.3 L1066.3,122.2 L1067.9,120.8 L1069.5,115.1 L1071,114.7 L1072.6,111.9 L1074.1,119.3 L1075.7,117.8 L1077.3,127.2 L1078.8,126.7 L1080.4,125.8 L1081.9,111 L1083.5,114.8 L1085.1,101.7 L1086.6,105.8 L1088.2,111.7 L1089.7,107.7 L1091.3,114.9 L1092.9,111.6 L1094.4,124.4 L1096,111.6 L1097.5,119.7 L1099.1,110.8 L1100.7,112.9 L1102.2,110.9 L1103.8,110 L1105.3,110.7 L1106.9,113.6 L1108.5,111.4 L1110,109.6 L1111.6,121.2 L1113.1,115.7 L1114.7,112.3 L1116.3,120.8 L1117.8,115 L1119.4,118.2 L1120.9,105.3 L1122.5,114.1 L1124.1,115.4 L1125.6,111 L1127.2,124.8 L1128.8,114 L1130.3,119.2 L1131.9,119.7 L1133.4,125.2 L1135,115.5 L1136.6,112.6 L1138.1,112.8 L1139.7,109 L1141.2,121.7 L1142.8,119.4 L1144.4,118.6 L1145.9,118.4 L1147.5,118.1 L1149,116 L1150.6,115.4 L1152.2,117.4 L1153.7,119.4 L1155.3,112.4 L1156.8,124.5 L1158.4,117.1 L1160,114.5 L1161.5,122.8 L1163.1,117.4 L1164.6,122.8 L1166.2,111.2 L1167.8,131.1 L1169.3,127.2 L1170.9,121.3 L1172.4,102.9 L1174,112.1 L1175.6,118.1 L1177.1,129 L1178.7,112.9 L1180.2,110.9 L1181.8,118.5 L1183.4,120.9 L1184.9,126.8 L1186.5,119.8 L1188,115.1 L1189.6,117.4 L1191.2,114.1 L1192.7,126.5 L1194.3,111.6 L1195.8,122.3 L1197.4,114.1 L1199,107.7 L1200.5,111.2 L1202.1,111.1 L1203.6,105.6 L1205.2,108.9 L1206.8,112.4 L1208.3,126.2 L1209.9,110.7 L1211.4,112 L1213,112 L1214.6,122.6 L1216.1,124.7 L1217.7,122.5 L1219.3,109 L1220.8,118.7 L1222.4,111.5 L1223.9,118 L1225.5,111 L1227.1,121.1 L1228.6,110.3 L1230.2,113.5 L1231.7,122.7 L1233.3,115.2 L1234.9,112.2 L1236.4,119.3 L1238,103.8 L1239.5,107.1 L1241.1,114.8 L1242.7,108.2 L1244.2,115.7 L1245.8,109.6 L1247.3,118.6 L1248.9,120.5 L1250.5,105.6 L1252,114.4 L1253.6,123 L1255.1,119.8 L1256.7,121.2 L1258.3,125 L1259.8,116.7 L1261.4,106.6 L1262.9,127.4 L1264.5,115.6" stroke="#0a437c"/>
<path d="M139.5,139.6 L141.1,153.5 L142.6,148.5 L144.2,148.2 L145.7,159.1 L147.3,154.9 L148.9,155.3 L150.4,157.6 L152,143 L153.5,147.4 L155.1,151.7 L156.7,148.5 L158.2,145.7 L159.8,151.7 L161.3,148.3 L162.9,155.2 L164.5,149.4 L166,153.8 L167.6,154.1 L169.1,161 L170.7,141.4 L172.3,144.5 L173.8,149.4 L175.4,133.6 L176.9,146.7 L178.5,154.5 L180.1,149.3 L181.6,160.4 L183.2,146.5 L184.7,148.5 L186.3,151.7 L187.9,145.2 L189.4,156.4 L191,145.8 L192.6,157.5 L194.1,150.8 L195.7,154.8 L197.2,143.6 L198.8,138.6 L200.4,139.9 L201.9,118.5 L203.5,140.9 L205,148.6 L206.6,158.1 L208.2,161 L209.7,161.4 L211.3,148 L212.8,142.9 L214.4,149.5 L216,154.4 L217.5,140.9 L219.1,145.9 L220.6,148.2 L222.2,146.8 L223.8,148.2 L225.3,149.2 L226.9,157.7 L228.4,148.9 L230,153.1 L231.6,146.4 L233.1,155.2 L234.7,165.2 L236.2,153.1 L237.8,141.6 L239.4,147 L240.9,152.7 L242.5,153.8 L244,151.5 L245.6,152.1 L247.2,153.9 L248.7,143.4 L250.3,152.4 L251.8,148.4 L253.4,140.6 L255,140.5 L256.5,154.9 L258.1,152 L259.6,148.8 L261.2,152.7 L262.8,157.9 L264.3,146.8 L265.9,147.3 L267.4,150.9 L269,153.2 L270.6,149.5 L272.1,152.4 L273.7,151.8 L275.2,143.4 L276.8,142.7 L278.4,145.2 L279.9,144.6 L281.5,144.9 L283.1,144.7 L284.6,145.7 L286.2,152.9 L287.7,149.6 L289.3,142.8 L290.9,150.6 L292.4,152 L294,153.3 L295.5,150.5 L297.1,148.9 L298.7,149.7 L300.2,157.5 L301.8,149.1 L303.3,152.7 L304.9,144 L306.5,148 L308,140.6 L309.6,153.4 L311.1,154.8 L312.7,145.4 L314.3,140.9 L315.8,144 L317.4,153.2 L318.9,143.4 L320.5,149.7 L322.1,151.6 L323.6,151.9 L325.2,138.3 L326.7,148.9 L328.3,149.7 L329.9,142.3 L331.4,147.4 L333,147 L334.5,141.3 L336.1,143.9 L337.7,145.1 L339.2,142.4 L340.8,151.6 L342.3,153.4 L343.9,151.6 L345.5,152.2 L347,144.4 L348.6,146.4 L350.1,152.7 L351.7,143.6 L353.3,154.7 L354.8,155.1 L356.4,145.4 L357.9,154.3 L359.5,148.6 L361.1,157.1 L362.6,159.2 L364.2,159.4 L365.7,153.3 L367.3,152.8 L368.9,157.9 L370.4,153.5 L372,157.7 L373.5,148.6 L375.1,155.5 L376.7,148.7 L378.2,142.8 L379.8,146.3 L381.4,141.3 L382.9,155.2 L384.5,141.4 L386,138.9 L387.6,141.3 L389.2,153.3 L390.7,149.5 L392.3,146.2 L393.8,161 L395.4,149.4 L397,146.9 L398.5,156.7 L400.1,149.9 L401.6,156.8 L403.2,150.2 L404.8,153.4 L406.3,152.3 L407.9,148.5 L409.4,145.2 L411,152 L412.6,150 L414.1,147.2 L415.7,148.3 L417.2,153.5 L418.8,143.2 L420.4,149.2 L421.9,148.9 L423.5,148.7 L425,146.9 L426.6,149.9 L428.2,154.7 L429.7,153.5 L431.3,144.8 L432.8,152 L434.4,145.6 L436,153 L437.5,155.9 L439.1,147 L440.6,152.3 L442.2,153.6 L443.8,133.6 L445.3,152.6 L446.9,142.8 L448.4,145.1 L450,153.5 L451.6,160 L453.1,146.5 L454.7,155.4 L456.2,154.2 L457.8,149 L459.4,147 L460.9,149.3 L462.5,141.6 L464,147.9 L465.6,147.4 L467.2,150.2 L468.7,152.1 L470.3,149.7 L471.9,147.7 L473.4,143.2 L475,144 L476.5,144.9 L478.1,140.1 L479.7,143.9 L481.2,139.4 L482.8,143.1 L484.3,141.6 L485.9,151 L487.5,148.4 L489,154.8 L490.6,147.9 L492.1,140.5 L493.7,151.4 L495.3,150.3 L496.8,141.8 L498.4,145 L499.9,146.3 L501.5,141.6 L503.1,149.2 L504.6,146.4 L506.2,141.1 L507.7,138.7 L509.3,147.9 L510.9,147.1 L512.4,144 L514,149.7 L515.5,158.2 L517.1,141.3 L518.7,147 L520.2,144 L521.8,151.4 L523.3,147 L524.9,155.1 L526.5,148.9 L528,157.6 L529.6,149.7 L531.1,151.1 L532.7,149.4 L534.3,144.4 L535.8,143.4 L537.4,144.9 L538.9,150.4 L540.5,153.6 L542.1,147.3 L543.6,142.4 L545.2,136.2 L546.7,136.1 L548.3,155 L549.9,146.1 L551.4,144.9 L553,152.9 L554.5,149.4 L556.1,145.5 L557.7,150.4 L559.2,144.6 L560.8,151.4 L562.4,142.9 L563.9,150.1 L565.5,156.5 L567,149.2 L568.6,146.7 L570.2,148.9 L571.7,150.7 L573.3,151.9 L574.8,144 L576.4,152.2 L578,157.7 L579.5,159 L581.1,154 L582.6,147 L584.2,151.6 L585.8,149.3 L587.3,157.8 L588.9,157.8 L590.4,142.8 L592,147.1 L593.6,148.3 L595.1,140.4 L596.7,154.3 L598.2,149.2 L599.8,147.6 L601.4,144.3 L602.9,149.5 L604.5,141.7 L606,154 L607.6,146.2 L609.2,147 L610.7,155.9 L612.3,142.5 L613.8,136.8 L615.4,144.1 L617,141.4 L618.5,132.9 L620.1,149.1 L621.6,149.8 L623.2,149.6 L624.8,153.2 L626.3,148.8 L627.9,154.1 L629.4,157.9 L631,162.1 L632.6,155.8 L634.1,185.4 L635.7,192 L637.2,185.3 L638.8,187.7 L640.4,187 L641.9,191 L643.5,194.2 L645,186.5 L646.6,190.2 L648.2,192.4 L649.7,182 L651.3,184 L652.8,186.1 L654.4,187.3 L656,187.6 L657.5,180.3 L659.1,174.6 L660.7,166.3 L662.2,182.7 L663.8,186.3 L665.3,192.2 L666.9,187 L668.5,187.7 L670,181.5 L671.6,189.6 L673.1,193 L674.7,191.2 L676.3,190.1 L677.8,188.1 L679.4,185 L680.9,185.7 L682.5,180.6 L684.1,185.7 L685.6,161.1 L687.2,154.8 L688.7,160.6 L690.3,165.2 L691.9,162.1 L693.4,160.3 L695,169.4 L696.5,156.4 L698.1,158 L699.7,157.2 L701.2,154.6 L702.8,150.2 L704.3,159.1 L705.9,149.7 L707.5,152.1 L709,153.1 L710.6,148.4 L712.1,145.3 L713.7,148.1 L715.3,155.9 L716.8,145.3 L718.4,154.1 L719.9,148.9 L721.5,138.3 L723.1,149.6 L724.6,155.5 L726.2,164.4 L727.7,154 L729.3,156.2 L730.9,151.6 L732.4,148.7 L734,149 L735.5,151.1 L737.1,154.1 L738.7,164.1 L740.2,158.1 L741.8,148.4 L743.3,149 L744.9,148.7 L746.5,151.8 L748,148.2 L749.6,145.1 L751.2,151.4 L752.7,146.2 L754.3,154.9 L755.8,143.5 L757.4,149.4 L759,150.4 L760.5,141.1 L762.1,146.4 L763.6,152.3 L765.2,146.9 L766.8,156.1 L768.3,146.1 L769.9,144.1 L771.4,158.7 L773,142.2 L774.6,151.4 L776.1,149.8 L777.7,153 L779.2,146.3 L780.8,143.6 L782.4,153.3 L783.9,158.6 L785.5,153.1 L787,144.4 L788.6,150.8 L790.2,153.7 L791.7,150 L793.3,162.1 L794.8,150.6 L796.4,158.7 L798,150.3 L799.5,155.9 L801.1,156.6 L802.6,153.9 L804.2,160.9 L805.8,153.2 L807.3,156 L808.9,157.1 L810.4,164.1 L812,155.8 L813.6,164.8 L815.1,156.5 L816.7,152.9 L818.2,157.8 L819.8,151.7 L821.4,151 L822.9,156.9 L824.5,155.2 L826,153.8 L827.6,149.4 L829.2,144.8 L830.7,158.2 L832.3,156.3 L833.8,160 L835.4,153 L837,155.5 L838.5,151.8 L840.1,164.4 L841.6,153.7 L843.2,157.7 L844.8,146.1 L846.3,153.5 L847.9,152.5 L849.5,145.1 L851,139.1 L852.6,168.1 L854.1,150.5 L855.7,150.1 L857.3,157.6 L858.8,153.7 L860.4,159.7 L861.9,158 L863.5,147.6 L865.1,155.8 L866.6,169.4 L868.2,185.1 L869.7,189.5 L871.3,188.8 L872.9,189.6 L874.4,186.4 L876,190.2 L877.5,187.3 L879.1,190.5 L880.7,187.2 L882.2,186.5 L883.8,193.4 L885.3,186.3 L886.9,193.5 L888.5,183.9 L890,180.6 L891.6,175.2 L893.1,161.4 L894.7,170.5 L896.3,185.2 L897.8,187.4 L899.4,185 L900.9,185.4 L902.5,185.8 L904.1,190.2 L905.6,188.1 L907.2,186.2 L908.7,191 L910.3,190.9 L911.9,182.6 L913.4,183 L915,185.8 L916.5,189.8 L918.1,181.9 L919.7,157.2 L921.2,159.7 L922.8,146.7 L924.3,152.6 L925.9,151.1 L927.5,148.1 L929,154.6 L930.6,147.1 L932.1,141.6 L933.7,147 L935.3,154.2 L936.8,155.9 L938.4,153.2 L940,155.3 L941.5,136.1 L943.1,148.1 L944.6,152.7 L946.2,155.6 L947.8,155.5 L949.3,150.7 L950.9,154.8 L952.4,144.3 L954,150.7 L955.6,152 L957.1,145.3 L958.7,138.9 L960.2,143.5 L961.8,150.5 L963.4,147.8 L964.9,150.4 L966.5,149.6 L968,149.9 L969.6,156.7 L971.2,155.2 L972.7,147.3 L974.3,152.1 L975.8,141 L977.4,148.8 L979,155.6 L980.5,150.3 L982.1,155.5 L983.6,153.5 L985.2,146.9 L986.8,162.1 L988.3,162.5 L989.9,151.1 L991.4,157.8 L993,153.6 L994.6,152.4 L996.1,151.8 L997.7,144.5 L999.2,151.3 L1000.8,140.3 L1002.4,138 L1003.9,134.4 L1005.5,124.7 L1007,124.5 L1008.6,141.1 L1010.2,146.8 L1011.7,147.9 L1013.3,149.2 L1014.8,153.9 L1016.4,144.4 L1018,140.6 L1019.5,123.8 L1021.1,146.3 L1022.6,144.5 L1024.2,146.3 L1025.8,137.9 L1027.3,136.5 L1028.9,144.4 L1030.5,140.1 L1032,144.1 L1033.6,140.1 L1035.1,153.8 L1036.7,147.8 L1038.3,145.5 L1039.8,143.9 L1041.4,148.2 L1042.9,153.1 L1044.5,151.4 L1046.1,149.8 L1047.6,142.1 L1049.2,146.6 L1050.7,143.2 L1052.3,147.7 L1053.9,151.2 L1055.4,143.1 L1057,141.6 L1058.5,148.8 L1060.1,152 L1061.7,145.1 L1063.2,153.9 L1064.8,145.7 L1066.3,156.3 L1067.9,153.1 L1069.5,149.9 L1071,149.1 L1072.6,146.7 L1074.1,153.2 L1075.7,152.7 L1077.3,159.5 L1078.8,160.2 L1080.4,160.2 L1081.9,146.6 L1083.5,150.3 L1085.1,136.8 L1086.6,141.1 L1088.2,148.4 L1089.7,143.5 L1091.3,149.6 L1092.9,147.5 L1094.4,157 L1096,145.9 L1097.5,153.9 L1099.1,145.5 L1100.7,149.2 L1102.2,146 L1103.8,146.2 L1105.3,144.6 L1106.9,148.2 L1108.5,146.1 L1110,144.9 L1111.6,155.2 L1113.1,150 L1114.7,147.5 L1116.3,156.8 L1117.8,149.5 L1119.4,151.5 L1120.9,142.1 L1122.5,150.2 L1124.1,149.9 L1125.6,146.6 L1127.2,156.4 L1128.8,149 L1130.3,152.8 L1131.9,156.1 L1133.4,158.8 L1135,151.7 L1136.6,146.9 L1138.1,147 L1139.7,143.5 L1141.2,154.2 L1142.8,152.7 L1144.4,154 L1145.9,150.9 L1147.5,152.4 L1149,151.5 L1150.6,150 L1152.2,152.1 L1153.7,153.9 L1155.3,147.6 L1156.8,156 L1158.4,152.8 L1160,149.5 L1161.5,156 L1163.1,151.3 L1164.6,156.1 L1166.2,146.7 L1167.8,162.5 L1169.3,159.3 L1170.9,153.6 L1172.4,139.5 L1174,145.6 L1175.6,152.4 L1177.1,161.1 L1178.7,147.4 L1180.2,144.9 L1181.8,151.9 L1183.4,155.9 L1184.9,160.3 L1186.5,152.7 L1188,151.9 L1189.6,150.7 L1191.2,147.3 L1192.7,158 L1194.3,147.9 L1195.8,156.2 L1197.4,148.9 L1199,144.2 L1200.5,145.9 L1202.1,146.7 L1203.6,142.8 L1205.2,144.3 L1206.8,147.8 L1208.3,159.7 L1209.9,145.7 L1211.4,148.3 L1213,147.4 L1214.6,156.6 L1216.1,156.3 L1217.7,155.4 L1219.3,143.2 L1220.8,152.7 L1222.4,146.6 L1223.9,152.5 L1225.5,145.8 L1227.1,155.3 L1228.6,145.8 L1230.2,148.7 L1231.7,154.6 L1233.3,150.8 L1234.9,148.9 L1236.4,154.5 L1238,139.1 L1239.5,141.4 L1241.1,149.4 L1242.7,144.7 L1244.2,150.2 L1245.8,142.5 L1247.3,149.3 L1248.9,154.9 L1250.5,143.1 L1252,147.2 L1253.6,155.8 L1255.1,153.8 L1256.7,155.1 L1258.3,159.4 L1259.8,149.1 L1261.4,141.9 L1262.9,160 L1264.5,150.8" stroke="#0a50a1"/>
<path d="M139.5,179.2 L141.1,185.8 L142.6,183 L144.2,184.4 L145.7,191.1 L147.3,186.7 L148.9,188.7 L150.4,190.1 L152,181.7 L153.5,183 L155.1,186 L156.7,184.5 L158.2,182.3 L159.8,186 L161.3,185.3 L162.9,188 L164.5,183.4 L166,186.8 L167.6,185.5 L169.1,191.1 L170.7,179.6 L172.3,183.5 L173.8,184.8 L175.4,174.5 L176.9,183.2 L178.5,187.9 L180.1,183.8 L181.6,191.8 L183.2,183.7 L184.7,184.2 L186.3,186.6 L187.9,181.6 L189.4,188.4 L191,181.5 L192.6,189.3 L194.1,186.3 L195.7,187.9 L197.2,180.5 L198.8,178.4 L200.4,179.5 L201.9,165.6 L203.5,179 L205,183.7 L206.6,189.7 L208.2,190.7 L209.7,191.2 L211.3,183.9 L212.8,181.2 L214.4,185 L216,187.2 L217.5,179.3 L219.1,184 L220.6,184.4 L222.2,182.6 L223.8,186.1 L225.3,184.8 L226.9,189.7 L228.4,185.4 L230,186.5 L231.6,181.8 L233.1,188.8 L234.7,194.6 L236.2,186 L237.8,180 L239.4,183 L240.9,186.1 L242.5,187.1 L244,186.3 L245.6,186.6 L247.2,187.6 L248.7,181.1 L250.3,186.4 L251.8,183.9 L253.4,178.6 L255,178.6 L256.5,186.5 L258.1,185 L259.6,184.5 L261.2,187.8 L262.8,189.4 L264.3,182.7 L265.9,182.3 L267.4,184.8 L269,186.4 L270.6,184.1 L272.1,185.8 L273.7,185.1 L275.2,181.1 L276.8,180.4 L278.4,181.8 L279.9,181.4 L281.5,182.1 L283.1,181.9 L284.6,182.1 L286.2,188.6 L287.7,186 L289.3,180.8 L290.9,184.9 L292.4,186.4 L294,186.2 L295.5,186.1 L297.1,183.4 L298.7,184.5 L300.2,190.3 L301.8,183.9 L303.3,186.8 L304.9,182.3 L306.5,182.9 L308,179.4 L309.6,187.2 L311.1,188.9 L312.7,183.4 L314.3,179.1 L315.8,181.5 L317.4,186.3 L318.9,181.9 L320.5,184.1 L322.1,185 L323.6,186.3 L325.2,177.4 L326.7,183.3 L328.3,184.8 L329.9,180.2 L331.4,183 L333,182.5 L334.5,179.1 L336.1,180.4 L337.7,182.3 L339.2,179.5 L340.8,186.4 L342.3,186.8 L343.9,186.3 L345.5,186.9 L347,182.6 L348.6,183 L350.1,186.1 L351.7,182.3 L353.3,188.7 L354.8,187.5 L356.4,182.2 L357.9,186.7 L359.5,184.6 L361.1,189.5 L362.6,189.6 L364.2,190.2 L365.7,186.7 L367.3,185.8 L368.9,190.3 L370.4,187.6 L372,189.9 L373.5,184.2 L375.1,187.2 L376.7,185 L378.2,180.7 L379.8,181.8 L381.4,179.3 L382.9,188.1 L384.5,178.7 L386,179.1 L387.6,179.5 L389.2,187.2 L390.7,183.1 L392.3,180.9 L393.8,191.4 L395.4,183.5 L397,182.5 L398.5,188 L400.1,184.1 L401.6,189.3 L403.2,184.9 L404.8,186.3 L406.3,186.7 L407.9,184.4 L409.4,181.9 L411,186.9 L412.6,184.6 L414.1,183.1 L415.7,182.6 L417.2,187.7 L418.8,181.2 L420.4,185.3 L421.9,184.3 L423.5,183.5 L425,182.6 L426.6,186 L428.2,189.1 L429.7,185 L431.3,183.5 L432.8,185.8 L434.4,182.6 L436,186.5 L437.5,188.5 L439.1,183.7 L440.6,185.8 L442.2,188.2 L443.8,174.7 L445.3,187.2 L446.9,179.9 L448.4,181.4 L450,187.1 L451.6,191.4 L453.1,184.5 L454.7,188 L456.2,186.5 L457.8,183.9 L459.4,182.9 L460.9,185.7 L462.5,179.2 L464,182.7 L465.6,182.9 L467.2,185.2 L468.7,186.8 L470.3,184.4 L471.9,183.5 L473.4,181.2 L475,180 L476.5,182.2 L478.1,180.1 L479.7,180.4 L481.2,179 L482.8,180.1 L484.3,180.6 L485.9,185.6 L487.5,183.5 L489,187.7 L490.6,183.5 L492.1,178.7 L493.7,185.9 L495.3,184 L496.8,180 L498.4,182.4 L499.9,182.9 L501.5,180.1 L503.1,183.5 L504.6,183.4 L506.2,179.5 L507.7,178.8 L509.3,183.4 L510.9,182.7 L512.4,180.7 L514,184.6 L515.5,188.5 L517.1,179.5 L518.7,182.9 L520.2,181.6 L521.8,186.9 L523.3,183 L524.9,187.9 L526.5,184.6 L528,188.7 L529.6,185.6 L531.1,186.4 L532.7,184.2 L534.3,181.4 L535.8,180.5 L537.4,182.5 L538.9,185 L540.5,186.1 L542.1,184.3 L543.6,180.3 L545.2,176.6 L546.7,176.6 L548.3,187.5 L549.9,182.3 L551.4,182 L553,186.2 L554.5,183.2 L556.1,183.6 L557.7,185.6 L559.2,181.6 L560.8,185.5 L562.4,181.8 L563.9,185 L565.5,187.9 L567,184.9 L568.6,182.7 L570.2,184 L571.7,185.3 L573.3,185.9 L574.8,182.1 L576.4,186.3 L578,190.6 L579.5,192.3 L581.1,186.7 L582.6,183.6 L584.2,185.7 L585.8,184.4 L587.3,188.7 L588.9,189 L590.4,181.1 L592,183 L593.6,183.5 L595.1,180.7 L596.7,188.5 L598.2,184.2 L599.8,183 L601.4,181.4 L602.9,185.5 L604.5,178.5 L606,186.7 L607.6,181.6 L609.2,183.5 L610.7,189.2 L612.3,180.5 L613.8,176.7 L615.4,181.9 L617,179.7 L618.5,176.6 L620.1,184.3 L621.6,185.6 L623.2,184.6 L624.8,188.3 L626.3,184.9 L627.9,187.8 L629.4,188.9 L631,192.4 L632.6,193.1 L634.1,215.4 L635.7,221.7 L637.2,220.3 L638.8,221.2 L640.4,220.4 L641.9,221.9 L643.5,222 L645,219.8 L646.6,221.6 L648.2,222 L649.7,218.6 L651.3,219.2 L652.8,220.1 L654.4,220.6 L656,220.2 L657.5,212 L659.1,206.2 L660.7,202.4 L662.2,215.9 L663.8,221 L665.3,224.2 L666.9,221.8 L668.5,222.5 L670,219.1 L671.6,223.2 L673.1,224.8 L674.7,223.9 L676.3,221.8 L677.8,222.1 L679.4,220.4 L680.9,220 L682.5,217.6 L684.1,217.1 L685.6,198.9 L687.2,191.9 L688.7,191 L690.3,195.5 L691.9,192.3 L693.4,190.5 L695,196.2 L696.5,190.1 L698.1,189.6 L699.7,189 L701.2,185.8 L702.8,185.2 L704.3,190 L705.9,184 L707.5,187.3 L709,187 L710.6,184.8 L712.1,181.9 L713.7,183.7 L715.3,188.5 L716.8,183.1 L718.4,187.1 L719.9,184.7 L721.5,177.2 L723.1,183.3 L724.6,187.8 L726.2,193.1 L727.7,187.4 L729.3,189.7 L730.9,186 L732.4,184 L734,184.1 L735.5,185.5 L737.1,187.5 L738.7,192 L740.2,189.8 L741.8,184 L743.3,184.7 L744.9,183.5 L746.5,185 L748,185 L749.6,181.5 L751.2,185.6 L752.7,182.7 L754.3,188.3 L755.8,180.8 L757.4,183.9 L759,184.8 L760.5,179.8 L762.1,182.8 L763.6,187.2 L765.2,181.4 L766.8,188 L768.3,181.9 L769.9,180.8 L771.4,190.2 L773,180.2 L774.6,186.8 L776.1,185.3 L777.7,186.4 L779.2,182.5 L780.8,180 L782.4,187 L783.9,190 L785.5,186.7 L787,181.8 L788.6,185.9 L790.2,187.9 L791.7,184.4 L793.3,191.5 L794.8,185.8 L796.4,189.3 L798,185.9 L799.5,188 L801.1,189.4 L802.6,186.6 L804.2,190.9 L805.8,186.6 L807.3,189.5 L808.9,188.6 L810.4,193 L812,188.5 L813.6,193.5 L815.1,189 L816.7,186.8 L818.2,189.7 L819.8,186.7 L821.4,184.9 L822.9,188.4 L824.5,188.5 L826,186.8 L827.6,184.5 L829.2,182.2 L830.7,191 L832.3,189.6 L833.8,192.4 L835.4,188.4 L837,188.1 L838.5,185.8 L840.1,192 L841.6,187 L843.2,188.6 L844.8,183.2 L846.3,187.6 L847.9,186.3 L849.5,182.6 L851,177.4 L852.6,196.4 L854.1,185.7 L855.7,183.4 L857.3,190.1 L858.8,187.1 L860.4,191.6 L861.9,189.4 L863.5,184.4 L865.1,191.6 L866.6,202.9 L868.2,215.7 L869.7,221 L871.3,221.9 L872.9,220.7 L874.4,220.5 L876,221.3 L877.5,221.5 L879.1,223.6 L880.7,220.6 L882.2,220.8 L883.8,224.4 L885.3,221 L886.9,224.3 L888.5,219.8 L890,216.1 L891.6,208.4 L893.1,196.5 L894.7,205.6 L896.3,219.1 L897.8,221.2 L899.4,219.3 L900.9,219.5 L902.5,219.8 L904.1,220.7 L905.6,221.3 L907.2,220.2 L908.7,222 L910.3,221.7 L911.9,219.3 L913.4,218.7 L915,217.9 L916.5,222.8 L918.1,214.3 L919.7,194.6 L921.2,189.9 L922.8,183.2 L924.3,187.3 L925.9,185.5 L927.5,183.9 L929,186.8 L930.6,184 L932.1,180.1 L933.7,182.8 L935.3,187.9 L936.8,188.1 L938.4,186.8 L940,189.6 L941.5,177.2 L943.1,184.1 L944.6,187 L946.2,188.6 L947.8,188.3 L949.3,186.5 L950.9,187.6 L952.4,180.5 L954,185.3 L955.6,185.6 L957.1,182.2 L958.7,178.6 L960.2,181.2 L961.8,185.5 L963.4,184.5 L964.9,184.5 L966.5,183.6 L968,184.2 L969.6,189.4 L971.2,189.7 L972.7,184.3 L974.3,186.5 L975.8,180 L977.4,182.6 L979,187.4 L980.5,184.6 L982.1,188.9 L983.6,187.1 L985.2,183.1 L986.8,193 L988.3,191.9 L989.9,185.2 L991.4,188.9 L993,188.4 L994.6,184.7 L996.1,186.1 L997.7,181.5 L999.2,184.3 L1000.8,178.3 L1002.4,178.1 L1003.9,175.1 L1005.5,169.4 L1007,169.4 L1008.6,180 L1010.2,183.1 L1011.7,182.9 L1013.3,183.1 L1014.8,186.2 L1016.4,182.2 L1018,178 L1019.5,168.4 L1021.1,182.9 L1022.6,180.2 L1024.2,182.6 L1025.8,176.8 L1027.3,177.6 L1028.9,180.3 L1030.5,178.5 L1032,181.2 L1033.6,178.5 L1035.1,186.4 L1036.7,184.1 L1038.3,181.2 L1039.8,180.9 L1041.4,182.6 L1042.9,188.4 L1044.5,185.5 L1046.1,186.2 L1047.6,179.9 L1049.2,182.7 L1050.7,182.1 L1052.3,182.8 L1053.9,186.5 L1055.4,182.3 L1057,179.7 L1058.5,183.8 L1060.1,186.5 L1061.7,182.2 L1063.2,188.1 L1064.8,183 L1066.3,188.8 L1067.9,186.1 L1069.5,183.9 L1071,184 L1072.6,183.1 L1074.1,186.5 L1075.7,186.3 L1077.3,190.4 L1078.8,190.8 L1080.4,192.2 L1081.9,182.4 L1083.5,184.5 L1085.1,176.7 L1086.6,180.9 L1088.2,183.5 L1089.7,180.9 L1091.3,183.2 L1092.9,182.4 L1094.4,189.4 L1096,183 L1097.5,188.5 L1099.1,182.8 L1100.7,184.2 L1102.2,182.5 L1103.8,182.5 L1105.3,181.4 L1106.9,183 L1108.5,182.5 L1110,182.7 L1111.6,189.4 L1113.1,185 L1114.7,183.5 L1116.3,187.5 L1117.8,184.1 L1119.4,186.8 L1120.9,181.7 L1122.5,186.1 L1124.1,185 L1125.6,183.8 L1127.2,189.5 L1128.8,184.3 L1130.3,188.4 L1131.9,188.6 L1133.4,190.5 L1135,185.2 L1136.6,184 L1138.1,182.2 L1139.7,180.9 L1141.2,187.2 L1142.8,187 L1144.4,186.9 L1145.9,184.3 L1147.5,186.8 L1149,185.7 L1150.6,185.5 L1152.2,185.7 L1153.7,187.3 L1155.3,183.5 L1156.8,189.1 L1158.4,187.6 L1160,185 L1161.5,187.4 L1163.1,185.6 L1164.6,188.1 L1166.2,182.9 L1167.8,192.5 L1169.3,191 L1170.9,187.7 L1172.4,178.4 L1174,182.8 L1175.6,185.5 L1177.1,190.2 L1178.7,182.1 L1180.2,183.6 L1181.8,186.3 L1183.4,188.6 L1184.9,192.2 L1186.5,186.2 L1188,186.2 L1189.6,185.8 L1191.2,184.8 L1192.7,190.9 L1194.3,183.4 L1195.8,189.2 L1197.4,184.6 L1199,181 L1200.5,182.8 L1202.1,182.2 L1203.6,181.7 L1205.2,181.8 L1206.8,184 L1208.3,192.1 L1209.9,182.7 L1211.4,183.9 L1213,183.3 L1214.6,189.5 L1216.1,188.7 L1217.7,188.4 L1219.3,180.3 L1220.8,186.3 L1222.4,183.2 L1223.9,186.5 L1225.5,182.8 L1227.1,187.7 L1228.6,181.2 L1230.2,184 L1231.7,188.9 L1233.3,185.4 L1234.9,185.2 L1236.4,187.9 L1238,177.9 L1239.5,180.7 L1241.1,183.3 L1242.7,181.8 L1244.2,185.4 L1245.8,179.3 L1247.3,186.2 L1248.9,188.4 L1250.5,180.9 L1252,182.9 L1253.6,188.6 L1255.1,187.4 L1256.7,189.8 L1258.3,191.3 L1259.8,184.5 L1261.4,180.7 L1262.9,191.8 L1264.5,185.3" stroke="#5195ce"/>
<path d="M139.5,216.6 L141.1,217.5 L142.6,217.3 L144.2,217.8 L145.7,221.4 L147.3,219.4 L148.9,220.9 L150.4,220.7 L152,218.4 L153.5,217.9 L155.1,218.1 L156.7,218.4 L158.2,216.8 L159.8,218.4 L161.3,218.7 L162.9,220.2 L164.5,217.9 L166,219.5 L167.6,218.2 L169.1,219.8 L170.7,216.5 L172.3,218.5 L173.8,218 L175.4,214.4 L176.9,217.7 L178.5,219.4 L180.1,217.8 L181.6,220.4 L183.2,219.4 L184.7,218 L186.3,218.7 L187.9,216.9 L189.4,220.4 L191,217.8 L192.6,219.7 L194.1,219.5 L195.7,219 L197.2,216.9 L198.8,215.6 L200.4,216.2 L201.9,211.8 L203.5,216.2 L205,217.7 L206.6,219.9 L208.2,220.7 L209.7,221.4 L211.3,219.1 L212.8,217.3 L214.4,219.5 L216,219.8 L217.5,216.5 L219.1,219.1 L220.6,218.8 L222.2,217.3 L223.8,218.9 L225.3,218.4 L226.9,220.8 L228.4,218.9 L230,219.3 L231.6,217 L233.1,219.6 L234.7,222.6 L236.2,218.6 L237.8,216.4 L239.4,218 L240.9,219.6 L242.5,219.4 L244,217.8 L245.6,219.7 L247.2,219.5 L248.7,217.4 L250.3,219.7 L251.8,218.2 L253.4,216 L255,216.1 L256.5,219.6 L258.1,218.9 L259.6,218.8 L261.2,220.4 L262.8,219.7 L264.3,217 L265.9,216.9 L267.4,218.7 L269,218.8 L270.6,218 L272.1,219.4 L273.7,218.8 L275.2,217.3 L276.8,216.8 L278.4,216.2 L279.9,218.1 L281.5,217.9 L283.1,217 L284.6,217.9 L286.2,220.5 L287.7,219.3 L289.3,217.4 L290.9,218.7 L292.4,219 L294,218.7 L295.5,219.2 L297.1,217.9 L298.7,218.9 L300.2,220 L301.8,217.7 L303.3,219.6 L304.9,217.5 L306.5,216.8 L308,216.2 L309.6,219.3 L311.1,220 L312.7,218.2 L314.3,215.8 L315.8,217.7 L317.4,219.2 L318.9,217.7 L320.5,217.9 L322.1,218 L323.6,219.4 L325.2,215.8 L326.7,218.2 L328.3,218.7 L329.9,217.5 L331.4,217.5 L333,217.5 L334.5,215.9 L336.1,216.4 L337.7,217.6 L339.2,216.4 L340.8,218.9 L342.3,219.4 L343.9,219 L345.5,219.2 L347,218 L348.6,217.1 L350.1,218.9 L351.7,218 L353.3,220.8 L354.8,219.7 L356.4,217.3 L357.9,218.7 L359.5,218.1 L361.1,220.4 L362.6,219.8 L364.2,221.4 L365.7,219 L367.3,218.7 L368.9,220.6 L370.4,219.7 L372,220.6 L373.5,218.3 L375.1,218.8 L376.7,219.2 L378.2,216.6 L379.8,218 L381.4,216.9 L382.9,220 L384.5,216.8 L386,216.5 L387.6,216.6 L389.2,219.2 L390.7,217 L392.3,217.2 L393.8,220.8 L395.4,218.3 L397,217.2 L398.5,219.6 L400.1,218.8 L401.6,220.3 L403.2,218.7 L404.8,218.8 L406.3,218.4 L407.9,218.1 L409.4,217 L411,219.6 L412.6,218.1 L414.1,217.1 L415.7,217.4 L417.2,218.7 L418.8,217.4 L420.4,218.3 L421.9,219 L423.5,217.9 L425,217.6 L426.6,219 L428.2,219.9 L429.7,218.7 L431.3,218.9 L432.8,219.7 L434.4,216.9 L436,218.9 L437.5,219.8 L439.1,219.1 L440.6,218.1 L442.2,219.1 L443.8,214.6 L445.3,219.9 L446.9,216.6 L448.4,216.7 L450,219.3 L451.6,221 L453.1,218.1 L454.7,219.5 L456.2,219.5 L457.8,218.4 L459.4,218.2 L460.9,219.2 L462.5,216.4 L464,216.9 L465.6,217.4 L467.2,218.1 L468.7,219.3 L470.3,218.4 L471.9,218.2 L473.4,217.2 L475,216.5 L476.5,218.2 L478.1,217.1 L479.7,217.3 L481.2,216.9 L482.8,216.7 L484.3,218 L485.9,218.2 L487.5,218 L489,219.4 L490.6,217.2 L492.1,215.4 L493.7,219 L495.3,217.9 L496.8,216.6 L498.4,217.5 L499.9,218.5 L501.5,217.1 L503.1,217.5 L504.6,218.1 L506.2,216.3 L507.7,215.9 L509.3,218 L510.9,217.8 L512.4,217.1 L514,218.5 L515.5,219.4 L517.1,216.4 L518.7,217.6 L520.2,218.1 L521.8,218.7 L523.3,218.6 L524.9,219.8 L526.5,217.6 L528,219.2 L529.6,219 L531.1,219.5 L532.7,218 L534.3,217.2 L535.8,217.1 L537.4,217.9 L538.9,218 L540.5,218.5 L542.1,218.7 L543.6,217 L545.2,215.6 L546.7,214.8 L548.3,220.6 L549.9,217.4 L551.4,217.3 L553,219.2 L554.5,217.6 L556.1,218.8 L557.7,219.2 L559.2,217.8 L560.8,218.2 L562.4,217.4 L563.9,219 L565.5,219.2 L567,218.7 L568.6,217.8 L570.2,218.9 L571.7,218.4 L573.3,217.8 L574.8,217.8 L576.4,218.6 L578,220.6 L579.5,221.2 L581.1,218.4 L582.6,217.7 L584.2,218.7 L585.8,219 L587.3,220.7 L588.9,219.9 L590.4,217.6 L592,218.5 L593.6,217.5 L595.1,217.4 L596.7,220.1 L598.2,218.3 L599.8,217.8 L601.4,216.8 L602.9,219.4 L604.5,215.8 L606,219.4 L607.6,216.8 L609.2,217.6 L610.7,219.3 L612.3,215.9 L613.8,215.5 L615.4,217.4 L617,216.2 L618.5,215.3 L620.1,217.8 L621.6,218.7 L623.2,217.4 L624.8,219.9 L626.3,219.9 L627.9,221.3 L629.4,221 L631,223.1 L632.6,219.2 L634.1,222.8 L635.7,221.7 L637.2,220.3 L638.8,221.2 L640.4,220.4 L641.9,221.9 L643.5,222 L645,219.8 L646.6,221.6 L648.2,222 L649.7,218.6 L651.3,219.2 L652.8,220.1 L654.4,220.6 L656,220.2 L657.5,221.4 L659.1,228.4 L660.7,237.2 L662.2,247.5 L663.8,255.5 L665.3,255.5 L666.9,255.5 L668.5,255.5 L670,255.5 L671.6,255.5 L673.1,255.5 L674.7,255.5 L676.3,255.5 L677.8,255.5 L679.4,255.5 L680.9,255.5 L682.5,255.5 L684.1,248.9 L685.6,237.9 L687.2,226.8 L688.7,221.1 L690.3,223.1 L691.9,222.3 L693.4,221.5 L695,223.7 L696.5,221.3 L698.1,221.8 L699.7,221.5 L701.2,220.3 L702.8,219.6 L704.3,221.8 L705.9,219.7 L707.5,220.2 L709,219.8 L710.6,219 L712.1,219.4 L713.7,218.4 L715.3,220.5 L716.8,219.5 L718.4,220.8 L719.9,219.6 L721.5,217 L723.1,218.6 L724.6,220.8 L726.2,221.6 L727.7,220.5 L729.3,221.8 L730.9,220.2 L732.4,220.6 L734,218.4 L735.5,219.8 L737.1,220 L738.7,222.1 L740.2,221.6 L741.8,219.2 L743.3,220.1 L744.9,219.8 L746.5,219.5 L748,220.2 L749.6,217.6 L751.2,220.5 L752.7,218.4 L754.3,221.4 L755.8,219.1 L757.4,219.2 L759,219.4 L760.5,218.1 L762.1,218.7 L763.6,220.4 L765.2,218.5 L766.8,221.4 L768.3,218.9 L769.9,217.6 L771.4,221.4 L773,218 L774.6,220.8 L776.1,220.1 L777.7,221.1 L779.2,218.7 L780.8,217.9 L782.4,220.5 L783.9,222.3 L785.5,219.7 L787,218.2 L788.6,220.1 L790.2,221.1 L791.7,219.6 L793.3,221.1 L794.8,219 L796.4,221.1 L798,220.7 L799.5,220.3 L801.1,221.3 L802.6,219.5 L804.2,222.2 L805.8,219.6 L807.3,221.4 L808.9,220.9 L810.4,222.8 L812,220.7 L813.6,222.6 L815.1,221.6 L816.7,220 L818.2,221.4 L819.8,221.3 L821.4,220.2 L822.9,220.1 L824.5,220.6 L826,219.3 L827.6,219.8 L829.2,218.5 L830.7,222.5 L832.3,221.7 L833.8,222.3 L835.4,220.8 L837,221.3 L838.5,219.5 L840.1,222.6 L841.6,220.2 L843.2,221 L844.8,219 L846.3,221.2 L847.9,219.7 L849.5,218.2 L851,217.5 L852.6,225 L854.1,220.4 L855.7,218.1 L857.3,221.2 L858.8,220.9 L860.4,222.2 L861.9,221.1 L863.5,219.3 L865.1,226.7 L866.6,237.4 L868.2,247.3 L869.7,255.5 L871.3,255.5 L872.9,255.5 L874.4,255.5 L876,255.5 L877.5,255.5 L879.1,255.5 L880.7,255.5 L882.2,255.5 L883.8,255.5 L885.3,255.5 L886.9,255.5 L888.5,255.5 L890,252 L891.6,242.3 L893.1,230.4 L894.7,223.6 L896.3,221.4 L897.8,221.2 L899.4,219.3 L900.9,219.5 L902.5,219.8 L904.1,220.7 L905.6,221.3 L907.2,220.2 L908.7,222 L910.3,221.7 L911.9,219.3 L913.4,218.7 L915,217.9 L916.5,222.8 L918.1,220.2 L919.7,217.9 L921.2,221.7 L922.8,218.1 L924.3,220.5 L925.9,220 L927.5,219.6 L929,220.7 L930.6,219.7 L932.1,217.9 L933.7,219.9 L935.3,222.1 L936.8,222.1 L938.4,220.6 L940,221.7 L941.5,217 L943.1,220.6 L944.6,220.4 L946.2,221 L947.8,222.6 L949.3,220.3 L950.9,220.1 L952.4,218.9 L954,220 L955.6,220.3 L957.1,218.6 L958.7,218.1 L960.2,218.9 L961.8,220.6 L963.4,220.2 L964.9,220.2 L966.5,220.2 L968,219.6 L969.6,221.7 L971.2,222.5 L972.7,220.2 L974.3,220.4 L975.8,219.3 L977.4,219.3 L979,220.7 L980.5,219.4 L982.1,221.4 L983.6,221.2 L985.2,219.4 L986.8,222.7 L988.3,222 L989.9,220.3 L991.4,222.1 L993,221.9 L994.6,220.6 L996.1,220.8 L997.7,218.5 L999.2,220 L1000.8,217.1 L1002.4,216.9 L1003.9,216.9 L1005.5,215 L1007,214.8 L1008.6,218.8 L1010.2,220.3 L1011.7,219.2 L1013.3,219.4 L1014.8,219.9 L1016.4,218.5 L1018,217.8 L1019.5,214 L1021.1,220.1 L1022.6,218.9 L1024.2,219.7 L1025.8,217 L1027.3,218.9 L1028.9,218.1 L1030.5,217.6 L1032,218.9 L1033.6,218 L1035.1,220.3 L1036.7,218.7 L1038.3,218 L1039.8,218.9 L1041.4,218.8 L1042.9,221.5 L1044.5,220.3 L1046.1,220.2 L1047.6,219 L1049.2,219 L1050.7,219.2 L1052.3,219.2 L1053.9,220.8 L1055.4,219.6 L1057,219 L1058.5,219.7 L1060.1,220 L1061.7,219.2 L1063.2,221.3 L1064.8,219 L1066.3,221.8 L1067.9,221.1 L1069.5,219.3 L1071,220.1 L1072.6,220.3 L1074.1,220.5 L1075.7,220.3 L1077.3,222.3 L1078.8,221.5 L1080.4,222.8 L1081.9,219 L1083.5,220.1 L1085.1,216.1 L1086.6,219.4 L1088.2,219.7 L1089.7,218.3 L1091.3,219.1 L1092.9,219.5 L1094.4,222 L1096,218.7 L1097.5,221.7 L1099.1,219.1 L1100.7,219.8 L1102.2,219.3 L1103.8,219.4 L1105.3,219.4 L1106.9,219.6 L1108.5,219.2 L1110,218.6 L1111.6,221.4 L1113.1,219.8 L1114.7,219.8 L1116.3,220.7 L1117.8,220.4 L1119.4,220.9 L1120.9,219.1 L1122.5,220.8 L1124.1,219.7 L1125.6,219.8 L1127.2,222.3 L1128.8,219.9 L1130.3,221.5 L1131.9,221.8 L1133.4,222 L1135,220.9 L1136.6,219.8 L1138.1,219.2 L1139.7,219 L1141.2,220.3 L1142.8,221.1 L1144.4,220.9 L1145.9,219.3 L1147.5,220.1 L1149,220.7 L1150.6,220.2 L1152.2,220.6 L1153.7,221.7 L1155.3,219.2 L1156.8,221.4 L1158.4,221.7 L1160,220.5 L1161.5,220.5 L1163.1,221.3 L1164.6,220.3 L1166.2,220.1 L1167.8,223.1 L1169.3,223.6 L1170.9,221.3 L1172.4,218.1 L1174,219.3 L1175.6,220.4 L1177.1,222.3 L1178.7,218.2 L1180.2,219.2 L1181.8,220.8 L1183.4,221.1 L1184.9,224.1 L1186.5,221.1 L1188,219.8 L1189.6,220.5 L1191.2,219.8 L1192.7,222.8 L1194.3,219.4 L1195.8,221.6 L1197.4,220.1 L1199,217.8 L1200.5,218.6 L1202.1,218.9 L1203.6,219.6 L1205.2,218.5 L1206.8,219.8 L1208.3,223.2 L1209.9,220.5 L1211.4,219.8 L1213,219.6 L1214.6,221.7 L1216.1,221.9 L1217.7,220.9 L1219.3,218.6 L1220.8,220.9 L1222.4,219.3 L1223.9,220.9 L1225.5,220.2 L1227.1,221.2 L1228.6,218.3 L1230.2,218.6 L1231.7,222.6 L1233.3,220.4 L1234.9,220.5 L1236.4,221 L1238,217.9 L1239.5,218.3 L1241.1,218.9 L1242.7,219.4 L1244.2,220.5 L1245.8,217.3 L1247.3,219.4 L1248.9,221.8 L1250.5,217.8 L1252,220.1 L1253.6,221.6 L1255.1,221.2 L1256.7,222 L1258.3,222.7 L1259.8,220.1 L1261.4,219 L1262.9,223 L1264.5,220.7" stroke="#6ed0e0"/>
</g>
<path d="M1357.2,239.5 L1361.5,242.9 L1365.5,240.1 L1369.4,240.1 L1373.7,230.1 L1378,246.4 L1382,233 L1386.3,230.1 L1390.3,249.2 L1394.5,249.2 L1398.5,226.4 L1402.8,242.9 L1406.8,233 L1410.8,239.5 L1415.1,242.9 L1419.1,235.8 L1423,242.9 L1427.3,235.8 L1431.3,249.2 L1435.6,233 L1439.6,230.1 L1443.9,242.9 L1447.9,226.4 L1452.1,223.5 L1456.1,230.1 L1460.4,236.4 L1464.4,239.5 L1468.4,236.4 L1472.7,233 L1476.7,236.4 L1480.6,233 L1484.9,223.5 L1488.9,236.4 L1493.2,239.5 L1497.5,168.8 L1501.5,91.8 L1505.7,85.5 L1509.7,130.3 L1513.7,226.4 L1518,230.1 L1522,239.5 L1526.3,223.5 L1530.3,249.2 L1534.5,236.4 L1538.5,223.5 L1542.8,223.5 L1546.8,230.1 L1550.8,233 L1555.1,236.4 L1559.1,220.1 L1563.3,236.4 L1567.3,233 L1571.6,226.4 L1575.6,239.5 L1579.6,223.5 L1583.9,246.4 L1587.9,223.5 L1592.1,223.5 L1596.1,210.7 L1600.4,226.4 L1604.6,230.1 L1608.6,233.8 L1612.8,242.4 L1616.8,217.3 L1621.1,207.9 L1625.1,210.7 L1629.4,220.1 L1633.4,239.5 L1637.6,204.4 L1641.6,220.1 L1645.6,220.1 L1649.9,230.1 L1654.2,201 L1658.2,223.5 L1662.2,214.4 L1666.4,230.1 L1670.4,233 L1674.7,216.7 L1678.7,214.4 L1683,216.7 L1687,204.4 L1691.2,220.1 L1695.2,233 L1699.5,214.4 L1703.5,214.4 L1707.8,207.9 L1711.8,214.4 L1716.1,207.9 L1720,191.6 L1724.3,223.5 L1728.3,207.9 L1732.6,204.4 L1736.6,230.1 L1740.9,223.5 L1744.9,210.7 L1749.1,201 L1753.1,214.4 L1757.4,217.3 L1761.4,214.4 L1765.4,225.8 L1769.7,223.5 L1773.7,201 L1777.9,214.4 L1781.9,207.9 L1786.2,216.7 L1790.2,226.4 L1794.5,214.4 L1798.5,220.1 L1802.7,217.3 L1806.7,223.5 L1811,217.3 L1815,204.4 L1819.3,214.4 L1823.3,220.1 L1827.3,226.4 L1831.5,217.3 L1835.5,233 L1839.8,217.3 L1844.4,210.7 L1844.4,255.5 L1357.2,255.5 Z" fill="#6ed0e0" fill-opacity="0.3"/>
<path d="M1357.2,239.5 L1361.5,242.9 L1365.5,240.1 L1369.4,240.1 L1373.7,230.1 L1378,246.4 L1382,233 L1386.3,230.1 L1390.3,249.2 L1394.5,249.2 L1398.5,226.4 L1402.8,242.9 L1406.8,233 L1410.8,239.5 L1415.1,242.9 L1419.1,235.8 L1423,242.9 L1427.3,235.8 L1431.3,249.2 L1435.6,233 L1439.6,230.1 L1443.9,242.9 L1447.9,226.4 L1452.1,223.5 L1456.1,230.1 L1460.4,236.4 L1464.4,239.5 L1468.4,236.4 L1472.7,233 L1476.7,236.4 L1480.6,233 L1484.9,223.5 L1488.9,236.4 L1493.2,239.5 L1497.5,168.8 L1501.5,91.8 L1505.7,85.5 L1509.7,130.3 L1513.7,226.4 L1518,230.1 L1522,239.5 L1526.3,223.5 L1530.3,249.2 L1534.5,236.4 L1538.5,223.5 L1542.8,223.5 L1546.8,230.1 L1550.8,233 L1555.1,236.4 L1559.1,220.1 L1563.3,236.4 L1567.3,233 L1571.6,226.4 L1575.6,239.5 L1579.6,223.5 L1583.9,246.4 L1587.9,223.5 L1592.1,223.5 L1596.1,210.7 L1600.4,226.4 L1604.6,230.1 L1608.6,233.8 L1612.8,242.4 L1616.8,217.3 L1621.1,207.9 L1625.1,210.7 L1629.4,220.1 L1633.4,239.5 L1637.6,204.4 L1641.6,220.1 L1645.6,220.1 L1649.9,230.1 L1654.2,201 L1658.2,223.5 L1662.2,214.4 L1666.4,230.1 L1670.4,233 L1674.7,216.7 L1678.7,214.4 L1683,216.7 L1687,204.4 L1691.2,220.1 L1695.2,233 L1699.5,214.4 L1703.5,214.4 L1707.8,207.9 L1711.8,214.4 L1716.1,207.9 L1720,191.6 L1724.3,223.5 L1728.3,207.9 L1732.6,204.4 L1736.6,230.1 L1740.9,223.5 L1744.9,210.7 L1749.1,201 L1753.1,214.4 L1757.4,217.3 L1761.4,214.4 L1765.4,225.8 L1769.7,223.5 L1773.7,201 L1777.9,214.4 L1781.9,207.9 L1786.2,216.7 L1790.2,226.4 L1794.5,214.4 L1798.5,220.1 L1802.7,217.3 L1806.7,223.5 L1811,217.3 L1815,204.4 L1819.3,214.4 L1823.3,220.1 L1827.3,226.4 L1831.5,217.3 L1835.5,233 L1839.8,217.3 L1844.4,210.7" fill="none" stroke="#6ed0e0" stroke-width="2.4" stroke-linejoin="round"/>
<g fill="#6ed0e0"><circle cx="1357.2" cy="239.5" r="3.4"/><circle cx="1361.5" cy="242.9" r="3.4"/><circle cx="1365.5" cy="240.1" r="3.4"/><circle cx="1369.4" cy="240.1" r="3.4"/><circle cx="1373.7" cy="230.1" r="3.4"/><circle cx="1378" cy="246.4" r="3.4"/><circle cx="1382" cy="233" r="3.4"/><circle cx="1386.3" cy="230.1" r="3.4"/><circle cx="1390.3" cy="249.2" r="3.4"/><circle cx="1394.5" cy="249.2" r="3.4"/><circle cx="1398.5" cy="226.4" r="3.4"/><circle cx="1402.8" cy="242.9" r="3.4"/><circle cx="1406.8" cy="233" r="3.4"/><circle cx="1410.8" cy="239.5" r="3.4"/><circle cx="1415.1" cy="242.9" r="3.4"/><circle cx="1419.1" cy="235.8" r="3.4"/><circle cx="1423" cy="242.9" r="3.4"/><circle cx="1427.3" cy="235.8" r="3.4"/><circle cx="1431.3" cy="249.2" r="3.4"/><circle cx="1435.6" cy="233" r="3.4"/><circle cx="1439.6" cy="230.1" r="3.4"/><circle cx="1443.9" cy="242.9" r="3.4"/><circle cx="1447.9" cy="226.4" r="3.4"/><circle cx="1452.1" cy="223.5" r="3.4"/><circle cx="1456.1" cy="230.1" r="3.4"/><circle cx="1460.4" cy="236.4" r="3.4"/><circle cx="1464.4" cy="239.5" r="3.4"/><circle cx="1468.4" cy="236.4" r="3.4"/><circle cx="1472.7" cy="233" r="3.4"/><circle cx="1476.7" cy="236.4" r="3.4"/><circle cx="1480.6" cy="233" r="3.4"/><circle cx="1484.9" cy="223.5" r="3.4"/><circle cx="1488.9" cy="236.4" r="3.4"/><circle cx="1493.2" cy="239.5" r="3.4"/><circle cx="1497.5" cy="168.8" r="3.4"/><circle cx="1501.5" cy="91.8" r="3.4"/><circle cx="1505.7" cy="85.5" r="3.4"/><circle cx="1509.7" cy="130.3" r="3.4"/><circle cx="1513.7" cy="226.4" r="3.4"/><circle cx="1518" cy="230.1" r="3.4"/><circle cx="1522" cy="239.5" r="3.4"/><circle cx="1526.3" cy="223.5" r="3.4"/><circle cx="1530.3" cy="249.2" r="3.4"/><circle cx="1534.5" cy="236.4" r="3.4"/><circle cx="1538.5" cy="223.5" r="3.4"/><circle cx="1542.8" cy="223.5" r="3.4"/><circle cx="1546.8" cy="230.1" r="3.4"/><circle cx="1550.8" cy="233" r="3.4"/><circle cx="1555.1" cy="236.4" r="3.4"/><circle cx="1559.1" cy="220.1" r="3.4"/><circle cx="1563.3" cy="236.4" r="3.4"/><circle cx="1567.3" cy="233" r="3.4"/><circle cx="1571.6" cy="226.4" r="3.4"/><circle cx="1575.6" cy="239.5" r="3.4"/><circle cx="1579.6" cy="223.5" r="3.4"/><circle cx="1583.9" cy="246.4" r="3.4"/><circle cx="1587.9" cy="223.5" r="3.4"/><circle cx="1592.1" cy="223.5" r="3.4"/><circle cx="1596.1" cy="210.7" r="3.4"/><circle cx="1600.4" cy="226.4" r="3.4"/><circle cx="1604.6" cy="230.1" r="3.4"/><circle cx="1608.6" cy="233.8" r="3.4"/><circle cx="1612.8" cy="242.4" r="3.4"/><circle cx="1616.8" cy="217.3" r="3.4"/><circle cx="1621.1" cy="207.9" r="3.4"/><circle cx="1625.1" cy="210.7" r="3.4"/><circle cx="1629.4" cy="220.1" r="3.4"/><circle cx="1633.4" cy="239.5" r="3.4"/><circle cx="1637.6" cy="204.4" r="3.4"/><circle cx="1641.6" cy="220.1" r="3.4"/><circle cx="1645.6" cy="220.1" r="3.4"/><circle cx="1649.9" cy="230.1" r="3.4"/><circle cx="1654.2" cy="201" r="3.4"/><circle cx="1658.2" cy="223.5" r="3.4"/><circle cx="1662.2" cy="214.4" r="3.4"/><circle cx="1666.4" cy="230.1" r="3.4"/><circle cx="1670.4" cy="233" r="3.4"/><circle cx="1674.7" cy="216.7" r="3.4"/><circle cx="1678.7" cy="214.4" r="3.4"/><circle cx="1683" cy="216.7" r="3.4"/><circle cx="1687" cy="204.4" r="3.4"/><circle cx="1691.2" cy="220.1" r="3.4"/><circle cx="1695.2" cy="233" r="3.4"/><circle cx="1699.5" cy="214.4" r="3.4"/><circle cx="1703.5" cy="214.4" r="3.4"/><circle cx="1707.8" cy="207.9" r="3.4"/><circle cx="1711.8" cy="214.4" r="3.4"/><circle cx="1716.1" cy="207.9" r="3.4"/><circle cx="1720" cy="191.6" r="3.4"/><circle cx="1724.3" cy="223.5" r="3.4"/><circle cx="1728.3" cy="207.9" r="3.4"/><circle cx="1732.6" cy="204.4" r="3.4"/><circle cx="1736.6" cy="230.1" r="3.4"/><circle cx="1740.9" cy="223.5" r="3.4"/><circle cx="1744.9" cy="210.7" r="3.4"/><circle cx="1749.1" cy="201" r="3.4"/><circle cx="1753.1" cy="214.4" r="3.4"/><circle cx="1757.4" cy="217.3" r="3.4"/><circle cx="1761.4" cy="214.4" r="3.4"/><circle cx="1765.4" cy="225.8" r="3.4"/><circle cx="1769.7" cy="223.5" r="3.4"/><circle cx="1773.7" cy="201" r="3.4"/><circle cx="1777.9" cy="214.4" r="3.4"/><circle cx="1781.9" cy="207.9" r="3.4"/><circle cx="1786.2" cy="216.7" r="3.4"/><circle cx="1790.2" cy="226.4" r="3.4"/><circle cx="1794.5" cy="214.4" r="3.4"/><circle cx="1798.5" cy="220.1" r="3.4"/><circle cx="1802.7" cy="217.3" r="3.4"/><circle cx="1806.7" cy="223.5" r="3.4"/><circle cx="1811" cy="217.3" r="3.4"/><circle cx="1815" cy="204.4" r="3.4"/><circle cx="1819.3" cy="214.4" r="3.4"/><circle cx="1823.3" cy="220.1" r="3.4"/><circle cx="1827.3" cy="226.4" r="3.4"/><circle cx="1831.5" cy="217.3" r="3.4"/><circle cx="1835.5" cy="233" r="3.4"/><circle cx="1839.8" cy="217.3" r="3.4"/><circle cx="1844.4" cy="210.7" r="3.4"/></g>
<path d="M1354.9,197.8 L1356.3,198.2 L1357.6,195.1 L1359,194.5 L1360.4,194.9 L1361.7,197.4 L1363.1,197.4 L1364.5,199.5 L1365.9,202.1 L1367.2,204 L1368.6,203.1 L1370,199 L1371.3,195.6 L1372.7,198.3 L1374.1,196.3 L1375.4,197.4 L1376.8,192.2 L1378.2,190.6 L1379.6,185.1 L1380.9,181.2 L1382.3,180.6 L1383.7,178 L1385,176.4 L1386.4,171.9 L1387.8,172.7 L1389.1,172 L1390.5,174 L1391.9,173.5 L1393.3,177.6 L1394.6,180.4 L1396,184 L1397.4,188.2 L1398.7,191.9 L1400.1,192.1 L1401.5,192.4 L1402.8,193.6 L1404.2,194.6 L1405.6,194.6 L1407,191.8 L1408.3,188.4 L1409.7,186.8 L1411.1,185.7 L1412.4,185.9 L1413.8,182.2 L1415.2,183.7 L1416.5,180.8 L1417.9,182.1 L1419.3,179.2 L1420.7,180.3 L1422,177 L1423.4,175.6 L1424.8,174.9 L1426.1,172.4 L1427.5,168.2 L1428.9,167.7 L1430.2,166.7 L1431.6,169.3 L1433,167.3 L1434.4,170.6 L1435.7,171.5 L1437.1,170.9 L1438.5,172.5 L1439.8,172.2 L1441.2,173.4 L1442.6,173.3 L1443.9,175.8 L1445.3,176.8 L1446.7,178.9 L1448.1,173.5 L1449.4,168.7 L1450.8,168.5 L1452.2,169.3 L1453.5,171.7 L1454.9,173.9 L1456.3,174.9 L1457.6,174.8 L1459,174.9 L1460.4,176.1 L1461.8,178.6 L1463.1,183.7 L1464.5,185.9 L1465.9,183.2 L1467.2,183.4 L1468.6,180.9 L1470,179.3 L1471.3,172.1 L1472.7,170.3 L1474.1,168.7 L1475.5,170.4 L1476.8,169.9 L1478.2,168.1 L1479.6,169.9 L1480.9,172 L1482.3,176.7 L1483.7,179.8 L1485,183.2 L1486.4,185.1 L1487.8,183.8 L1489.2,180.8 L1490.5,174 L1491.9,170.7 L1493.3,167.1 L1494.6,163.4 L1496,159 L1497.4,157.4 L1498.7,151.8 L1500.1,148.9 L1501.5,144.9 L1502.9,146.4 L1504.2,145.2 L1505.6,148.6 L1507,150.8 L1508.3,154.4 L1509.7,154.4 L1511.1,156.4 L1512.4,157.1 L1513.8,158.9 L1515.2,161 L1516.6,164.8 L1517.9,169.7 L1519.3,169.3 L1520.7,170.1 L1522,170.6 L1523.4,173.8 L1524.8,178 L1526.1,174.5 L1527.5,175.6 L1528.9,174.1 L1530.3,173.8 L1531.6,171.2 L1533,170.8 L1534.4,172.3 L1535.7,170.8 L1537.1,168.6 L1538.5,164.9 L1539.8,161.8 L1541.2,160 L1542.6,159.6 L1544,161 L1545.3,160 L1546.7,158 L1548.1,155.5 L1549.4,151.8 L1550.8,155.1 L1552.2,157.4 L1553.5,157.9 L1554.9,156.5 L1556.3,158.4 L1557.7,155.6 L1559,155.3 L1560.4,153.2 L1561.8,154.9 L1563.1,157.7 L1564.5,158 L1565.9,156.9 L1567.2,155.5 L1568.6,155.5 L1570,154.9 L1571.4,156 L1572.7,159 L1574.1,159.6 L1575.5,159.7 L1576.8,158.7 L1578.2,155.7 L1579.6,158.1 L1580.9,157.8 L1582.3,155.3 L1583.7,152.8 L1585.1,151.3 L1586.4,153.1 L1587.8,152 L1589.2,149.3 L1590.5,149.7 L1591.9,149.2 L1593.3,148.9 L1594.6,148 L1596,147.9 L1597.4,152.5 L1598.8,153.6 L1600.1,150.1 L1601.5,146.9 L1602.9,144.9 L1604.2,145.6 L1605.6,140.8 L1607,136 L1608.3,134.1 L1609.7,130.5 L1611.1,126.5 L1612.5,125 L1613.8,124.5 L1615.2,124.8 L1616.6,124.4 L1617.9,126.6 L1619.3,130.4 L1620.7,135.6 L1622,143.7 L1623.4,146.7 L1624.8,144.7 L1626.2,143.3 L1627.5,142.3 L1628.9,146.2 L1630.3,148 L1631.6,147.2 L1633,145.8 L1634.4,145 L1635.7,140.2 L1637.1,135.7 L1638.5,133.8 L1639.9,132.8 L1641.2,132.5 L1642.6,130.5 L1644,129.8 L1645.3,131.3 L1646.7,132.5 L1648.1,133 L1649.4,132.3 L1650.8,127 L1652.2,127 L1653.6,131 L1654.9,135.8 L1656.3,138.3 L1657.7,137.4 L1659,137.8 L1660.4,136 L1661.8,134.8 L1663.1,136.9 L1664.5,142.7 L1665.9,144.3 L1667.3,145.3 L1668.6,144.3 L1670,144.5 L1671.4,147.4 L1672.7,149.3 L1674.1,151.4 L1675.5,153.3 L1676.8,154.9 L1678.2,153.7 L1679.6,151.7 L1681,147 L1682.3,146.3 L1683.7,144.8 L1685.1,144.5 L1686.4,142 L1687.8,140.4 L1689.2,135.3 L1690.5,131.3 L1691.9,132.6 L1693.3,137.7 L1694.7,137.7 L1696,135.4 L1697.4,131.5 L1698.8,130.1 L1700.1,128.1 L1701.5,128.9 L1702.9,130.7 L1704.2,128.9 L1705.6,123.7 L1707,120.7 L1708.4,113.3 L1709.7,110 L1711.1,109.4 L1712.5,108.6 L1713.8,104.3 L1715.2,102.8 L1716.6,102.7 L1717.9,103.9 L1719.3,106.5 L1720.7,109.4 L1722.1,111.8 L1723.4,116.1 L1724.8,118.3 L1726.2,121.3 L1727.5,120.2 L1728.9,121 L1730.3,121.8 L1731.6,125.7 L1733,129.9 L1734.4,132.4 L1735.8,132.5 L1737.1,132.1 L1738.5,133.4 L1739.9,136.8 L1741.2,139.7 L1742.6,138.9 L1744,140.3 L1745.3,137.1 L1746.7,135.5 L1748.1,134.4 L1749.5,136.1 L1750.8,133.4 L1752.2,136.1 L1753.6,134.4 L1754.9,131.7 L1756.3,128.6 L1757.7,126.5 L1759,121.5 L1760.4,118.7 L1761.8,118.8 L1763.2,121.5 L1764.5,124.2 L1765.9,126.5 L1767.3,125.6 L1768.6,123.8 L1770,122.6 L1771.4,121.3 L1772.7,122.5 L1774.1,122 L1775.5,122.6 L1776.9,116 L1778.2,116.5 L1779.6,116.3 L1781,118.8 L1782.3,117.4 L1783.7,117.1 L1785.1,116.1 L1786.4,114.1 L1787.8,113.8 L1789.2,114.7 L1790.6,116.3 L1791.9,114.6 L1793.3,109.7 L1794.7,106.5 L1796,102.6 L1797.4,102.2 L1798.8,104.2 L1800.1,103.5 L1801.5,101.6 L1802.9,98.5 L1804.3,95.8 L1805.6,100.1 L1807,102.1 L1808.4,103.2 L1809.7,100.7 L1811.1,95.7 L1812.5,92.4 L1813.8,94.4 L1815.2,98.2 L1816.6,98.5 L1818,97.9 L1819.3,96.3 L1820.7,96.2 L1822.1,97.9 L1823.4,101.9 L1824.8,108.5 L1826.2,114.8 L1827.5,112.4 L1828.9,109.8 L1830.3,108.3 L1831.7,112.7 L1833,113.9 L1834.4,114.6 L1835.8,117.1 L1837.1,119.3 L1838.5,114.1 L1839.9,112.8 L1841.2,111.8 L1842.6,116.3 L1844,119.1 L1845.4,124.1 L1846.7,122.2 L1848.1,120.9" fill="none" stroke="#e24d42" stroke-width="2.4" stroke-linejoin="round"/>
<clipPath id="c3"><rect x="146" y="380" width="900" height="242"/></clipPath><g clip-path="url(#c3)" shape-rendering="crispEdges">
<rect x="132.7" y="438.1" width="20" height="82" fill="#e24d42"/>
<rect x="132.7" y="520.1" width="20" height="61.5" fill="#ef843c"/>
<rect x="132.7" y="581.6" width="20" height="27.2" fill="#eab839"/>
<rect x="132.7" y="608.8" width="20" height="12.7" fill="#f2c96d"/>
<rect x="162.6" y="454.9" width="20" height="74.5" fill="#e24d42"/>
<rect x="162.6" y="529.4" width="20" height="56.3" fill="#ef843c"/>
<rect x="162.6" y="585.7" width="20" height="28.3" fill="#eab839"/>
<rect x="162.6" y="614" width="20" height="7.5" fill="#f2c96d"/>
<rect x="192.5" y="463.4" width="20" height="71.6" fill="#e24d42"/>
<rect x="192.5" y="535" width="20" height="50.3" fill="#ef843c"/>
<rect x="192.5" y="585.3" width="20" height="28" fill="#eab839"/>
<rect x="192.5" y="613.3" width="20" height="8.2" fill="#f2c96d"/>
<rect x="222.4" y="463.1" width="20" height="71.2" fill="#e24d42"/>
<rect x="222.4" y="534.2" width="20" height="51.4" fill="#ef843c"/>
<rect x="222.4" y="585.7" width="20" height="26.5" fill="#eab839"/>
<rect x="222.4" y="612.1" width="20" height="9.4" fill="#f2c96d"/>
<rect x="252.3" y="469.4" width="20" height="67.8" fill="#e24d42"/>
<rect x="252.3" y="537.2" width="20" height="49.9" fill="#ef843c"/>
<rect x="252.3" y="587.2" width="20" height="26.1" fill="#eab839"/>
<rect x="252.3" y="613.3" width="20" height="8.2" fill="#f2c96d"/>
<rect x="282.2" y="459" width="20" height="71.6" fill="#e24d42"/>
<rect x="282.2" y="530.5" width="20" height="52.9" fill="#ef843c"/>
<rect x="282.2" y="583.4" width="20" height="28" fill="#eab839"/>
<rect x="282.2" y="611.4" width="20" height="10.1" fill="#f2c96d"/>
<rect x="312.1" y="467.9" width="20" height="71.9" fill="#e24d42"/>
<rect x="312.1" y="539.8" width="20" height="49.6" fill="#ef843c"/>
<rect x="312.1" y="589.4" width="20" height="25" fill="#eab839"/>
<rect x="312.1" y="614.4" width="20" height="7.1" fill="#f2c96d"/>
<rect x="342" y="474.6" width="20" height="65.2" fill="#e24d42"/>
<rect x="342" y="539.8" width="20" height="47.3" fill="#ef843c"/>
<rect x="342" y="587.2" width="20" height="26.1" fill="#eab839"/>
<rect x="342" y="613.3" width="20" height="8.2" fill="#f2c96d"/>
<rect x="371.9" y="447.4" width="20" height="74.9" fill="#e24d42"/>
<rect x="371.9" y="522.3" width="20" height="56.3" fill="#ef843c"/>
<rect x="371.9" y="578.6" width="20" height="30.6" fill="#eab839"/>
<rect x="371.9" y="609.2" width="20" height="12.3" fill="#f2c96d"/>
<rect x="401.8" y="460.8" width="20" height="68.6" fill="#e24d42"/>
<rect x="401.8" y="529.4" width="20" height="54" fill="#ef843c"/>
<rect x="401.8" y="583.4" width="20" height="27.6" fill="#eab839"/>
<rect x="401.8" y="611" width="20" height="10.5" fill="#f2c96d"/>
<rect x="431.7" y="455.2" width="20" height="81.3" fill="#e24d42"/>
<rect x="431.7" y="536.5" width="20" height="49.9" fill="#ef843c"/>
<rect x="431.7" y="586.4" width="20" height="26.8" fill="#eab839"/>
<rect x="431.7" y="613.3" width="20" height="8.2" fill="#f2c96d"/>
<rect x="461.5" y="459.3" width="20" height="74.2" fill="#e24d42"/>
<rect x="461.5" y="533.5" width="20" height="51.1" fill="#ef843c"/>
<rect x="461.5" y="584.6" width="20" height="28" fill="#eab839"/>
<rect x="461.5" y="612.5" width="20" height="9" fill="#f2c96d"/>
<rect x="491.4" y="446.7" width="20" height="78.6" fill="#e24d42"/>
<rect x="491.4" y="525.3" width="20" height="57" fill="#ef843c"/>
<rect x="491.4" y="582.3" width="20" height="29.4" fill="#eab839"/>
<rect x="491.4" y="611.8" width="20" height="9.7" fill="#f2c96d"/>
<rect x="521.3" y="466" width="20" height="72.7" fill="#e24d42"/>
<rect x="521.3" y="538.7" width="20" height="48.5" fill="#ef843c"/>
<rect x="521.3" y="587.2" width="20" height="26.1" fill="#eab839"/>
<rect x="521.3" y="613.3" width="20" height="8.2" fill="#f2c96d"/>
<rect x="551.2" y="465.3" width="20" height="74.2" fill="#e24d42"/>
<rect x="551.2" y="539.5" width="20" height="49.9" fill="#ef843c"/>
<rect x="551.2" y="589.4" width="20" height="25.7" fill="#eab839"/>
<rect x="551.2" y="615.1" width="20" height="6.4" fill="#f2c96d"/>
<rect x="581.1" y="479.1" width="20" height="62.6" fill="#e24d42"/>
<rect x="581.1" y="541.7" width="20" height="49.2" fill="#ef843c"/>
<rect x="581.1" y="590.9" width="20" height="24.6" fill="#eab839"/>
<rect x="581.1" y="615.5" width="20" height="6" fill="#f2c96d"/>
<rect x="611" y="451.1" width="20" height="80.5" fill="#e24d42"/>
<rect x="611" y="531.6" width="20" height="53.7" fill="#ef843c"/>
<rect x="611" y="585.3" width="20" height="28" fill="#eab839"/>
<rect x="611" y="613.3" width="20" height="8.2" fill="#f2c96d"/>
<rect x="640.9" y="475.4" width="20" height="67.8" fill="#e24d42"/>
<rect x="640.9" y="543.2" width="20" height="46.2" fill="#ef843c"/>
<rect x="640.9" y="589.4" width="20" height="24.6" fill="#eab839"/>
<rect x="640.9" y="614" width="20" height="7.5" fill="#f2c96d"/>
<rect x="670.8" y="451.9" width="20" height="80.9" fill="#e24d42"/>
<rect x="670.8" y="532.8" width="20" height="51.8" fill="#ef843c"/>
<rect x="670.8" y="584.6" width="20" height="29.4" fill="#eab839"/>
<rect x="670.8" y="614" width="20" height="7.5" fill="#f2c96d"/>
<rect x="700.7" y="470.9" width="20" height="70.4" fill="#e24d42"/>
<rect x="700.7" y="541.3" width="20" height="47" fill="#ef843c"/>
<rect x="700.7" y="588.3" width="20" height="25" fill="#eab839"/>
<rect x="700.7" y="613.3" width="20" height="8.2" fill="#f2c96d"/>
<rect x="730.6" y="453.7" width="20" height="77.9" fill="#e24d42"/>
<rect x="730.6" y="531.6" width="20" height="55.5" fill="#ef843c"/>
<rect x="730.6" y="587.2" width="20" height="26.1" fill="#eab839"/>
<rect x="730.6" y="613.3" width="20" height="8.2" fill="#f2c96d"/>
<rect x="760.5" y="454.5" width="20" height="73.1" fill="#e24d42"/>
<rect x="760.5" y="527.5" width="20" height="54.8" fill="#ef843c"/>
<rect x="760.5" y="582.3" width="20" height="28.7" fill="#eab839"/>
<rect x="760.5" y="611" width="20" height="10.5" fill="#f2c96d"/>
<rect x="790.4" y="436.2" width="20" height="85.4" fill="#e24d42"/>
<rect x="790.4" y="521.6" width="20" height="62.6" fill="#ef843c"/>
<rect x="790.4" y="584.2" width="20" height="28" fill="#eab839"/>
<rect x="790.4" y="612.1" width="20" height="9.4" fill="#f2c96d"/>
<rect x="820.3" y="460.8" width="20" height="73.8" fill="#e24d42"/>
<rect x="820.3" y="534.6" width="20" height="49.6" fill="#ef843c"/>
<rect x="820.3" y="584.2" width="20" height="26.8" fill="#eab839"/>
<rect x="820.3" y="611" width="20" height="10.5" fill="#f2c96d"/>
<rect x="850.2" y="440.3" width="20" height="78.3" fill="#e24d42"/>
<rect x="850.2" y="518.6" width="20" height="56.3" fill="#ef843c"/>
<rect x="850.2" y="574.9" width="20" height="32.4" fill="#eab839"/>
<rect x="850.2" y="607.3" width="20" height="14.2" fill="#f2c96d"/>
<rect x="880.1" y="463.8" width="20" height="73.4" fill="#e24d42"/>
<rect x="880.1" y="537.2" width="20" height="47.7" fill="#ef843c"/>
<rect x="880.1" y="584.9" width="20" height="26.5" fill="#eab839"/>
<rect x="880.1" y="611.4" width="20" height="10.1" fill="#f2c96d"/>
<rect x="910" y="449.3" width="20" height="83.5" fill="#e24d42"/>
<rect x="910" y="532.8" width="20" height="53.7" fill="#ef843c"/>
<rect x="910" y="586.4" width="20" height="26.8" fill="#eab839"/>
<rect x="910" y="613.3" width="20" height="8.2" fill="#f2c96d"/>
<rect x="939.9" y="443.7" width="20" height="86.8" fill="#e24d42"/>
<rect x="939.9" y="530.5" width="20" height="51.8" fill="#ef843c"/>
<rect x="939.9" y="582.3" width="20" height="28.7" fill="#eab839"/>
<rect x="939.9" y="611" width="20" height="10.5" fill="#f2c96d"/>
<rect x="969.8" y="441.1" width="20" height="91.7" fill="#e24d42"/>
<rect x="969.8" y="532.8" width="20" height="51.4" fill="#ef843c"/>
<rect x="969.8" y="584.2" width="20" height="28" fill="#eab839"/>
<rect x="969.8" y="612.1" width="20" height="9.4" fill="#f2c96d"/>
<rect x="999.7" y="457.8" width="20" height="74.9" fill="#e24d42"/>
<rect x="999.7" y="532.8" width="20" height="49.6" fill="#ef843c"/>
<rect x="999.7" y="582.3" width="20" height="28" fill="#eab839"/>
<rect x="999.7" y="610.3" width="20" height="11.2" fill="#f2c96d"/>
</g>
<g clip-path="url(#c3)">
<rect x="132.7" y="519.6" width="20" height="1" fill="#d67534" fill-opacity="0.8"/>
<rect x="132.7" y="581.1" width="20" height="1" fill="#d0a332" fill-opacity="0.8"/>
<rect x="132.7" y="608.3" width="20" height="1" fill="#d8b35f" fill-opacity="0.8"/>
<rect x="162.6" y="528.9" width="20" height="1" fill="#d67534" fill-opacity="0.8"/>
<rect x="162.6" y="585.2" width="20" height="1" fill="#d0a332" fill-opacity="0.8"/>
<rect x="162.6" y="613.5" width="20" height="1" fill="#d8b35f" fill-opacity="0.8"/>
<rect x="192.5" y="534.5" width="20" height="1" fill="#d67534" fill-opacity="0.8"/>
<rect x="192.5" y="584.8" width="20" height="1" fill="#d0a332" fill-opacity="0.8"/>
<rect x="192.5" y="612.8" width="20" height="1" fill="#d8b35f" fill-opacity="0.8"/>
<rect x="222.4" y="533.7" width="20" height="1" fill="#d67534" fill-opacity="0.8"/>
<rect x="222.4" y="585.2" width="20" height="1" fill="#d0a332" fill-opacity="0.8"/>
<rect x="222.4" y="611.6" width="20" height="1" fill="#d8b35f" fill-opacity="0.8"/>
<rect x="252.3" y="536.7" width="20" height="1" fill="#d67534" fill-opacity="0.8"/>
<rect x="252.3" y="586.7" width="20" height="1" fill="#d0a332" fill-opacity="0.8"/>
<rect x="252.3" y="612.8" width="20" height="1" fill="#d8b35f" fill-opacity="0.8"/>
<rect x="282.2" y="530" width="20" height="1" fill="#d67534" fill-opacity="0.8"/>
<rect x="282.2" y="582.9" width="20" height="1" fill="#d0a332" fill-opacity="0.8"/>
<rect x="282.2" y="610.9" width="20" height="1" fill="#d8b35f" fill-opacity="0.8"/>
<rect x="312.1" y="539.3" width="20" height="1" fill="#d67534" fill-opacity="0.8"/>
<rect x="312.1" y="588.9" width="20" height="1" fill="#d0a332" fill-opacity="0.8"/>
<rect x="312.1" y="613.9" width="20" height="1" fill="#d8b35f" fill-opacity="0.8"/>
<rect x="342" y="539.3" width="20" height="1" fill="#d67534" fill-opacity="0.8"/>
<rect x="342" y="586.7" width="20" height="1" fill="#d0a332" fill-opacity="0.8"/>
<rect x="342" y="612.8" width="20" height="1" fill="#d8b35f" fill-opacity="0.8"/>
<rect x="371.9" y="521.8" width="20" height="1" fill="#d67534" fill-opacity="0.8"/>
<rect x="371.9" y="578.1" width="20" height="1" fill="#d0a332" fill-opacity="0.8"/>
<rect x="371.9" y="608.7" width="20" height="1" fill="#d8b35f" fill-opacity="0.8"/>
<rect x="401.8" y="528.9" width="20" height="1" fill="#d67534" fill-opacity="0.8"/>
<rect x="401.8" y="582.9" width="20" height="1" fill="#d0a332" fill-opacity="0.8"/>
<rect x="401.8" y="610.5" width="20" height="1" fill="#d8b35f" fill-opacity="0.8"/>
<rect x="431.7" y="536" width="20" height="1" fill="#d67534" fill-opacity="0.8"/>
<rect x="431.7" y="585.9" width="20" height="1" fill="#d0a332" fill-opacity="0.8"/>
<rect x="431.7" y="612.8" width="20" height="1" fill="#d8b35f" fill-opacity="0.8"/>
<rect x="461.5" y="533" width="20" height="1" fill="#d67534" fill-opacity="0.8"/>
<rect x="461.5" y="584.1" width="20" height="1" fill="#d0a332" fill-opacity="0.8"/>
<rect x="461.5" y="612" width="20" height="1" fill="#d8b35f" fill-opacity="0.8"/>
<rect x="491.4" y="524.8" width="20" height="1" fill="#d67534" fill-opacity="0.8"/>
<rect x="491.4" y="581.8" width="20" height="1" fill="#d0a332" fill-opacity="0.8"/>
<rect x="491.4" y="611.3" width="20" height="1" fill="#d8b35f" fill-opacity="0.8"/>
<rect x="521.3" y="538.2" width="20" height="1" fill="#d67534" fill-opacity="0.8"/>
<rect x="521.3" y="586.7" width="20" height="1" fill="#d0a332" fill-opacity="0.8"/>
<rect x="521.3" y="612.8" width="20" height="1" fill="#d8b35f" fill-opacity="0.8"/>
<rect x="551.2" y="539" width="20" height="1" fill="#d67534" fill-opacity="0.8"/>
<rect x="551.2" y="588.9" width="20" height="1" fill="#d0a332" fill-opacity="0.8"/>
<rect x="551.2" y="614.6" width="20" height="1" fill="#d8b35f" fill-opacity="0.8"/>
<rect x="581.1" y="541.2" width="20" height="1" fill="#d67534" fill-opacity="0.8"/>
<rect x="581.1" y="590.4" width="20" height="1" fill="#d0a332" fill-opacity="0.8"/>
<rect x="581.1" y="615" width="20" height="1" fill="#d8b35f" fill-opacity="0.8"/>
<rect x="611" y="531.1" width="20" height="1" fill="#d67534" fill-opacity="0.8"/>
<rect x="611" y="584.8" width="20" height="1" fill="#d0a332" fill-opacity="0.8"/>
<rect x="611" y="612.8" width="20" height="1" fill="#d8b35f" fill-opacity="0.8"/>
<rect x="640.9" y="542.7" width="20" height="1" fill="#d67534" fill-opacity="0.8"/>
<rect x="640.9" y="588.9" width="20" height="1" fill="#d0a332" fill-opacity="0.8"/>
<rect x="640.9" y="613.5" width="20" height="1" fill="#d8b35f" fill-opacity="0.8"/>
<rect x="670.8" y="532.3" width="20" height="1" fill="#d67534" fill-opacity="0.8"/>
<rect x="670.8" y="584.1" width="20" height="1" fill="#d0a332" fill-opacity="0.8"/>
<rect x="670.8" y="613.5" width="20" height="1" fill="#d8b35f" fill-opacity="0.8"/>
<rect x="700.7" y="540.8" width="20" height="1" fill="#d67534" fill-opacity="0.8"/>
<rect x="700.7" y="587.8" width="20" height="1" fill="#d0a332" fill-opacity="0.8"/>
<rect x="700.7" y="612.8" width="20" height="1" fill="#d8b35f" fill-opacity="0.8"/>
<rect x="730.6" y="531.1" width="20" height="1" fill="#d67534" fill-opacity="0.8"/>
<rect x="730.6" y="586.7" width="20" height="1" fill="#d0a332" fill-opacity="0.8"/>
<rect x="730.6" y="612.8" width="20" height="1" fill="#d8b35f" fill-opacity="0.8"/>
<rect x="760.5" y="527" width="20" height="1" fill="#d67534" fill-opacity="0.8"/>
<rect x="760.5" y="581.8" width="20" height="1" fill="#d0a332" fill-opacity="0.8"/>
<rect x="760.5" y="610.5" width="20" height="1" fill="#d8b35f" fill-opacity="0.8"/>
<rect x="790.4" y="521.1" width="20" height="1" fill="#d67534" fill-opacity="0.8"/>
<rect x="790.4" y="583.7" width="20" height="1" fill="#d0a332" fill-opacity="0.8"/>
<rect x="790.4" y="611.6" width="20" height="1" fill="#d8b35f" fill-opacity="0.8"/>
<rect x="820.3" y="534.1" width="20" height="1" fill="#d67534" fill-opacity="0.8"/>
<rect x="820.3" y="583.7" width="20" height="1" fill="#d0a332" fill-opacity="0.8"/>
<rect x="820.3" y="610.5" width="20" height="1" fill="#d8b35f" fill-opacity="0.8"/>
<rect x="850.2" y="518.1" width="20" height="1" fill="#d67534" fill-opacity="0.8"/>
<rect x="850.2" y="574.4" width="20" height="1" fill="#d0a332" fill-opacity="0.8"/>
<rect x="850.2" y="606.8" width="20" height="1" fill="#d8b35f" fill-opacity="0.8"/>
<rect x="880.1" y="536.7" width="20" height="1" fill="#d67534" fill-opacity="0.8"/>
<rect x="880.1" y="584.4" width="20" height="1" fill="#d0a332" fill-opacity="0.8"/>
<rect x="880.1" y="610.9" width="20" height="1" fill="#d8b35f" fill-opacity="0.8"/>
<rect x="910" y="532.3" width="20" height="1" fill="#d67534" fill-opacity="0.8"/>
<rect x="910" y="585.9" width="20" height="1" fill="#d0a332" fill-opacity="0.8"/>
<rect x="910" y="612.8" width="20" height="1" fill="#d8b35f" fill-opacity="0.8"/>
<rect x="939.9" y="530" width="20" height="1" fill="#d67534" fill-opacity="0.8"/>
<rect x="939.9" y="581.8" width="20" height="1" fill="#d0a332" fill-opacity="0.8"/>
<rect x="939.9" y="610.5" width="20" height="1" fill="#d8b35f" fill-opacity="0.8"/>
<rect x="969.8" y="532.3" width="20" height="1" fill="#d67534" fill-opacity="0.8"/>
<rect x="969.8" y="583.7" width="20" height="1" fill="#d0a332" fill-opacity="0.8"/>
<rect x="969.8" y="611.6" width="20" height="1" fill="#d8b35f" fill-opacity="0.8"/>
<rect x="999.7" y="532.3" width="20" height="1" fill="#d67534" fill-opacity="0.8"/>
<rect x="999.7" y="581.8" width="20" height="1" fill="#d0a332" fill-opacity="0.8"/>
<rect x="999.7" y="609.8" width="20" height="1" fill="#d8b35f" fill-opacity="0.8"/>
</g>
<path d="M1341.6,450.7 L1343,456.5 L1344.3,458.5 L1345.7,460.4 L1347.1,460 L1348.4,460.3 L1349.8,455.6 L1351.2,460 L1352.6,459.9 L1353.9,457.7 L1355.3,454 L1356.7,455.8 L1358,454.2 L1359.4,455.2 L1360.8,453.2 L1362.1,453.1 L1363.5,449.5 L1364.9,448.4 L1366.3,450.9 L1367.6,447.5 L1369,448.6 L1370.4,450.6 L1371.7,452.3 L1373.1,455.2 L1374.5,449.5 L1375.8,454.9 L1377.2,455.9 L1378.6,460.3 L1380,461.7 L1381.3,455.5 L1382.7,460.2 L1384.1,456.8 L1385.4,456.5 L1386.8,451.1 L1388.2,454.8 L1389.5,454.4 L1390.9,454 L1392.3,455.9 L1393.7,454.8 L1395,448.4 L1396.4,450.2 L1397.8,451 L1399.1,451.4 L1400.5,452.1 L1401.9,448.1 L1403.2,446.4 L1404.6,453 L1406,463.5 L1407.4,466.5 L1408.7,463.5 L1410.1,467.1 L1411.5,465.5 L1412.8,459.8 L1414.2,459.2 L1415.6,455.3 L1416.9,453 L1418.3,446.5 L1419.7,453.2 L1421.1,450.7 L1422.4,446.7 L1423.8,442.4 L1425.2,446.9 L1426.5,450.8 L1427.9,458.6 L1429.3,453.2 L1430.6,458.5 L1432,452.9 L1433.4,451.8 L1434.8,451.2 L1436.1,452.2 L1437.5,448 L1438.9,452.2 L1440.2,449.7 L1441.6,453.4 L1443,445.7 L1444.3,443.8 L1445.7,439.1 L1447.1,442.1 L1448.5,436.1 L1449.8,440 L1451.2,446.7 L1452.6,450.3 L1453.9,463 L1455.3,464.6 L1456.7,466.7 L1458,465.6 L1459.4,462.8 L1460.8,464.7 L1462.2,456.2 L1463.5,457.6 L1464.9,452.5 L1466.3,458.2 L1467.6,460.5 L1469,459.9 L1470.4,456 L1471.7,451.4 L1473.1,444.9 L1474.5,443.7 L1475.9,444 L1477.2,449.9 L1478.6,449.3 L1480,456.3 L1481.3,456.5 L1482.7,456.5 L1484.1,453.9 L1485.4,454.7 L1486.8,448 L1488.2,451.5 L1489.6,454.7 L1490.9,456.5 L1492.3,454.8 L1493.7,457.6 L1495,453.7 L1496.4,452.8 L1497.8,451.8 L1499.1,450.8 L1500.5,451.2 L1501.9,449.6 L1503.3,450.2 L1504.6,453.4 L1506,449.7 L1507.4,450.3 L1508.7,451.1 L1510.1,447.9 L1511.5,453.9 L1512.8,457.2 L1514.2,455 L1515.6,457.8 L1517,453.8 L1518.3,451.6 L1519.7,451.5 L1521.1,447.1 L1522.4,449.2 L1523.8,448.2 L1525.2,451.2 L1526.5,448.8 L1527.9,443.6 L1529.3,437.7 L1530.7,444.8 L1532,443 L1533.4,445.6 L1534.8,444.8 L1536.1,449.4 L1537.5,449.9 L1538.9,451.2 L1540.2,455.4 L1541.6,457.3 L1543,457.9 L1544.4,458 L1545.7,456.3 L1547.1,453.9 L1548.5,454.2 L1549.8,458.9 L1551.2,457.4 L1552.6,454.3 L1553.9,453.9 L1555.3,453 L1556.7,457.1 L1558.1,456 L1559.4,456.4 L1560.8,455.6 L1562.2,458.1 L1563.5,458.4 L1564.9,454.3 L1566.3,453.8 L1567.6,452.6 L1569,447 L1570.4,447.4 L1571.8,445.8 L1573.1,445.6 L1574.5,449.9 L1575.9,448.2 L1577.2,447.3 L1578.6,444.2 L1580,446.7 L1581.3,446 L1582.7,450.7 L1584.1,451.3 L1585.5,448.7 L1586.8,476.2 L1588.2,520.5 L1589.6,520.7 L1590.9,520.1 L1592.3,521.2 L1593.7,519.4 L1595,522.1 L1596.4,516 L1597.8,509.1 L1599.2,467 L1600.5,459.9 L1601.9,460.7 L1603.3,457.3 L1604.6,454.6 L1606,454.8 L1607.4,458.9 L1608.7,453.9 L1610.1,454.9 L1611.5,455.2 L1612.9,458.1 L1614.2,458.6 L1615.6,460.1 L1617,452 L1618.3,449.8 L1619.7,452.1 L1621.1,448.8 L1622.4,447.8 L1623.8,451.8 L1625.2,452.7 L1626.6,455.7 L1627.9,451.5 L1629.3,454.2 L1630.7,445.7 L1632,442.6 L1633.4,448.9 L1634.8,443.6 L1636.1,443.4 L1637.5,446.3 L1638.9,447.5 L1640.3,446.6 L1641.6,454.5 L1643,456.1 L1644.4,462.2 L1645.7,458.4 L1647.1,453.3 L1648.5,451.5 L1649.8,450.4 L1651.2,453.6 L1652.6,454.3 L1654,457.6 L1655.3,446.3 L1656.7,449.3 L1658.1,448.9 L1659.4,454 L1660.8,450.3 L1662.2,447.1 L1663.5,446.3 L1664.9,451.8 L1666.3,453 L1667.7,457.9 L1669,455.3 L1670.4,458.9 L1671.8,455 L1673.1,456.2 L1674.5,457.6 L1675.9,461.5 L1677.2,465.7 L1678.6,464.2 L1680,463.6 L1681.4,464.5 L1682.7,456 L1684.1,493.1 L1685.5,519.8 L1686.8,519.8 L1688.2,517.1 L1689.6,521.2 L1690.9,518.5 L1692.3,520.3 L1693.7,506 L1695.1,457.1 L1696.4,448.6 L1697.8,447.3 L1699.2,447.9 L1700.5,445.3 L1701.9,448.7 L1703.3,453 L1704.6,460.1 L1706,455.1 L1707.4,450.8 L1708.8,446.5 L1710.1,452.8 L1711.5,448.3 L1712.9,454.9 L1714.2,456.4 L1715.6,461.6 L1717,456.7 L1718.3,457.2 L1719.7,450.9 L1721.1,452.8 L1722.5,457.1 L1723.8,457.6 L1725.2,457.3 L1726.6,462.6 L1727.9,461.9 L1729.3,462.9 L1730.7,464.6 L1732,465 L1733.4,458.2 L1734.8,459.8 L1736.2,458.3 L1737.5,456.6 L1738.9,456.2 L1740.3,451.4 L1741.6,458.8 L1743,452 L1744.4,456.9 L1745.7,456.7 L1747.1,456.8 L1748.5,451.9 L1749.9,449.5 L1751.2,448.6 L1752.6,448.4 L1754,452.3 L1755.3,457.4 L1756.7,458.4 L1758.1,457.4 L1759.4,457.6 L1760.8,456.3 L1762.2,454.7 L1763.6,453.4 L1764.9,454.9 L1766.3,456.8 L1767.7,461.6 L1769,461 L1770.4,469.1 L1771.8,470.8 L1773.1,469.9 L1774.5,467.9 L1775.9,466.5 L1777.3,469.9 L1778.6,467.9 L1780,459.4 L1781.4,455.9 L1782.7,452.5 L1784.1,452.3 L1785.5,454.9 L1786.8,451.7 L1788.2,458.7 L1789.6,456.2 L1791,450.1 L1792.3,448.7 L1793.7,446.9 L1795.1,444.7 L1796.4,450.3 L1797.8,449.9 L1799.2,457.1 L1800.5,460.5 L1801.9,459.2 L1803.3,457.6 L1804.7,456.2 L1806,456.2 L1807.4,460.3 L1808.8,458.4 L1810.1,469.3 L1811.5,465.7 L1812.9,465.8 L1814.2,459.7 L1815.6,460.1 L1817,460.3 L1818.4,455.2 L1819.7,457.2 L1821.1,452.1 L1822.5,452.1 L1823.8,455.1 L1825.2,457.4 L1826.6,453.7 L1827.9,458.8 L1829.3,459.4 L1830.7,452.2 L1832.1,456.3 L1833.4,455.2 L1834.8,454.4 L1836.2,453.7 L1837.5,450.2 L1838.9,445.6 L1840.3,450.5 L1841.6,448.3 L1843,442.6 L1844.4,445.7 L1845.8,444.3 L1847.1,442.5 L1848.5,453.2 L1849.9,453.1 L1851.2,473.3 L1852.6,524.6 L1854,523.7 L1855.3,521.9 L1856.7,523 L1858.1,524 L1859.5,525.6 L1860.8,523.2 L1862.2,502.1 L1863.6,464.8 L1864.9,464.9 L1866.3,460.7 L1867.7,466.3 L1869,469.1 L1869,523.8 L1867.7,525.6 L1866.3,525.2 L1864.9,522.3 L1863.6,520.3 L1862.2,522 L1860.8,523.2 L1859.5,525.6 L1858.1,524 L1856.7,523 L1855.3,521.9 L1854,523.7 L1852.6,524.6 L1851.2,524.9 L1849.9,524 L1848.5,522.5 L1847.1,526.4 L1845.8,523.1 L1844.4,522 L1843,519 L1841.6,520.5 L1840.3,526.4 L1838.9,527.4 L1837.5,524 L1836.2,524.1 L1834.8,524.9 L1833.4,521.8 L1832.1,520.8 L1830.7,519.9 L1829.3,522.7 L1827.9,526 L1826.6,519.6 L1825.2,523 L1823.8,518.1 L1822.5,519.1 L1821.1,521.2 L1819.7,517 L1818.4,522.2 L1817,524.4 L1815.6,525.8 L1814.2,526.1 L1812.9,532.1 L1811.5,530.5 L1810.1,523.7 L1808.8,525.2 L1807.4,517.9 L1806,520.7 L1804.7,517.2 L1803.3,519.2 L1801.9,520.4 L1800.5,523.4 L1799.2,522.9 L1797.8,522.9 L1796.4,523.9 L1795.1,524.6 L1793.7,527.2 L1792.3,528.2 L1791,527.2 L1789.6,528.8 L1788.2,526.3 L1786.8,524.3 L1785.5,523.5 L1784.1,526.9 L1782.7,525.2 L1781.4,519.2 L1780,520.9 L1778.6,521.3 L1777.3,520.5 L1775.9,525 L1774.5,528.4 L1773.1,531.1 L1771.8,528 L1770.4,530.3 L1769,534 L1767.7,528.9 L1766.3,531.5 L1764.9,527.2 L1763.6,522.9 L1762.2,521.6 L1760.8,521.9 L1759.4,523.4 L1758.1,522 L1756.7,521.9 L1755.3,522 L1754,523.1 L1752.6,514.9 L1751.2,512.4 L1749.9,515.8 L1748.5,514 L1747.1,519.7 L1745.7,523.2 L1744.4,522.6 L1743,526.4 L1741.6,528.5 L1740.3,524.1 L1738.9,525.8 L1737.5,528.5 L1736.2,524.8 L1734.8,528 L1733.4,527.6 L1732,526.8 L1730.7,527.4 L1729.3,525.8 L1727.9,524.3 L1726.6,526.6 L1725.2,523.9 L1723.8,522.8 L1722.5,520.9 L1721.1,522.3 L1719.7,521.3 L1718.3,524.5 L1717,526 L1715.6,524 L1714.2,521.2 L1712.9,520.5 L1711.5,518.6 L1710.1,515.8 L1708.8,516.6 L1707.4,511.8 L1706,516.5 L1704.6,522.1 L1703.3,517.7 L1701.9,511.2 L1700.5,510.3 L1699.2,516.2 L1697.8,514.3 L1696.4,515.1 L1695.1,520.8 L1693.7,570.3 L1692.3,587 L1690.9,587 L1689.6,587 L1688.2,587 L1686.8,587 L1685.5,587 L1684.1,557 L1682.7,526.6 L1681.4,528.7 L1680,529.4 L1678.6,527.2 L1677.2,524.7 L1675.9,526.7 L1674.5,525.1 L1673.1,527.1 L1671.8,524.7 L1670.4,527.1 L1669,524.6 L1667.7,529.5 L1666.3,526.6 L1664.9,524.3 L1663.5,525.5 L1662.2,524.1 L1660.8,522.2 L1659.4,523.4 L1658.1,523.4 L1656.7,521.4 L1655.3,523.3 L1654,532.3 L1652.6,529.1 L1651.2,522.3 L1649.8,518 L1648.5,516.7 L1647.1,519 L1645.7,519.1 L1644.4,518.1 L1643,520.1 L1641.6,521.6 L1640.3,523 L1638.9,520.7 L1637.5,522.4 L1636.1,520.6 L1634.8,521.5 L1633.4,520.9 L1632,518.3 L1630.7,519.5 L1629.3,524.4 L1627.9,532.2 L1626.6,527.8 L1625.2,526.8 L1623.8,525.3 L1622.4,526.3 L1621.1,519.5 L1619.7,522.5 L1618.3,523.5 L1617,521.2 L1615.6,523.6 L1614.2,519.8 L1612.9,526.6 L1611.5,524.8 L1610.1,523.2 L1608.7,526.1 L1607.4,528.7 L1606,528.5 L1604.6,526.6 L1603.3,528 L1601.9,526.3 L1600.5,529.4 L1599.2,533.7 L1597.8,575.4 L1596.4,587 L1595,587 L1593.7,587 L1592.3,587 L1590.9,587 L1589.6,587 L1588.2,587 L1586.8,542.6 L1585.5,519.2 L1584.1,515.7 L1582.7,515.4 L1581.3,517 L1580,514.4 L1578.6,514.8 L1577.2,515.1 L1575.9,517.4 L1574.5,517 L1573.1,513.5 L1571.8,520.7 L1570.4,518.4 L1569,522.5 L1567.6,519.8 L1566.3,522.3 L1564.9,524.5 L1563.5,528.6 L1562.2,530.2 L1560.8,525.2 L1559.4,526.5 L1558.1,525.1 L1556.7,525 L1555.3,525.1 L1553.9,523.2 L1552.6,525.8 L1551.2,526.6 L1549.8,527.6 L1548.5,527.3 L1547.1,525.7 L1545.7,524.6 L1544.4,526.3 L1543,522.1 L1541.6,524.4 L1540.2,522.1 L1538.9,522.4 L1537.5,526.2 L1536.1,523.1 L1534.8,522.5 L1533.4,518.5 L1532,514.5 L1530.7,513.2 L1529.3,515.4 L1527.9,515.2 L1526.5,516.4 L1525.2,517.6 L1523.8,517.6 L1522.4,519.4 L1521.1,519.9 L1519.7,517.2 L1518.3,522.6 L1517,523.4 L1515.6,525.2 L1514.2,525.1 L1512.8,528.5 L1511.5,527.5 L1510.1,528.4 L1508.7,528.2 L1507.4,524.6 L1506,526.7 L1504.6,523.5 L1503.3,524.4 L1501.9,524.2 L1500.5,522.7 L1499.1,521.6 L1497.8,521.9 L1496.4,522.7 L1495,527 L1493.7,525.5 L1492.3,523.8 L1490.9,525.4 L1489.6,523.5 L1488.2,525.5 L1486.8,530.4 L1485.4,526.7 L1484.1,524.6 L1482.7,523.5 L1481.3,527.4 L1480,522.7 L1478.6,522.7 L1477.2,519.1 L1475.9,515.3 L1474.5,519.1 L1473.1,522.1 L1471.7,519.8 L1470.4,525 L1469,528.8 L1467.6,528.7 L1466.3,524.6 L1464.9,523.5 L1463.5,521.8 L1462.2,524 L1460.8,518.2 L1459.4,518.1 L1458,522.9 L1456.7,521.7 L1455.3,520.4 L1453.9,518 L1452.6,517.2 L1451.2,520.8 L1449.8,517.1 L1448.5,522.4 L1447.1,521 L1445.7,523.5 L1444.3,518.9 L1443,524.2 L1441.6,525 L1440.2,526.6 L1438.9,521.5 L1437.5,522.6 L1436.1,525.4 L1434.8,524.9 L1433.4,526.7 L1432,525.2 L1430.6,522.8 L1429.3,522.6 L1427.9,525.8 L1426.5,524.1 L1425.2,521.1 L1423.8,522.6 L1422.4,523.1 L1421.1,525.4 L1419.7,524.2 L1418.3,524 L1416.9,521.1 L1415.6,523.7 L1414.2,522.8 L1412.8,523.7 L1411.5,531 L1410.1,525.4 L1408.7,522.5 L1407.4,517.2 L1406,520.1 L1404.6,518 L1403.2,516.5 L1401.9,516.3 L1400.5,518.9 L1399.1,517 L1397.8,516.2 L1396.4,511.6 L1395,514 L1393.7,511.8 L1392.3,512.9 L1390.9,512 L1389.5,518.3 L1388.2,519.3 L1386.8,520.9 L1385.4,521.4 L1384.1,524.4 L1382.7,522.7 L1381.3,521.3 L1380,522.4 L1378.6,519.3 L1377.2,518.5 L1375.8,525.8 L1374.5,516.2 L1373.1,518.1 L1371.7,516.1 L1370.4,515 L1369,514.1 L1367.6,517.1 L1366.3,514.1 L1364.9,520.8 L1363.5,514.7 L1362.1,517 L1360.8,514.6 L1359.4,519.2 L1358,517.9 L1356.7,516.4 L1355.3,516.8 L1353.9,523.9 L1352.6,524.3 L1351.2,525.9 L1349.8,520.1 L1348.4,520.2 L1347.1,520.3 L1345.7,519.6 L1344.3,517.3 L1343,520.6 L1341.6,520.2 Z" fill="#e24d42" fill-opacity="0.1"/>
<path d="M1341.6,520.2 L1343,520.6 L1344.3,517.3 L1345.7,519.6 L1347.1,520.3 L1348.4,520.2 L1349.8,520.1 L1351.2,525.9 L1352.6,524.3 L1353.9,523.9 L1355.3,516.8 L1356.7,516.4 L1358,517.9 L1359.4,519.2 L1360.8,514.6 L1362.1,517 L1363.5,514.7 L1364.9,520.8 L1366.3,514.1 L1367.6,517.1 L1369,514.1 L1370.4,515 L1371.7,516.1 L1373.1,518.1 L1374.5,516.2 L1375.8,525.8 L1377.2,518.5 L1378.6,519.3 L1380,522.4 L1381.3,521.3 L1382.7,522.7 L1384.1,524.4 L1385.4,521.4 L1386.8,520.9 L1388.2,519.3 L1389.5,518.3 L1390.9,512 L1392.3,512.9 L1393.7,511.8 L1395,514 L1396.4,511.6 L1397.8,516.2 L1399.1,517 L1400.5,518.9 L1401.9,516.3 L1403.2,516.5 L1404.6,518 L1406,520.1 L1407.4,517.2 L1408.7,522.5 L1410.1,525.4 L1411.5,531 L1412.8,523.7 L1414.2,522.8 L1415.6,523.7 L1416.9,521.1 L1418.3,524 L1419.7,524.2 L1421.1,525.4 L1422.4,523.1 L1423.8,522.6 L1425.2,521.1 L1426.5,524.1 L1427.9,525.8 L1429.3,522.6 L1430.6,522.8 L1432,525.2 L1433.4,526.7 L1434.8,524.9 L1436.1,525.4 L1437.5,522.6 L1438.9,521.5 L1440.2,526.6 L1441.6,525 L1443,524.2 L1444.3,518.9 L1445.7,523.5 L1447.1,521 L1448.5,522.4 L1449.8,517.1 L1451.2,520.8 L1452.6,517.2 L1453.9,518 L1455.3,520.4 L1456.7,521.7 L1458,522.9 L1459.4,518.1 L1460.8,518.2 L1462.2,524 L1463.5,521.8 L1464.9,523.5 L1466.3,524.6 L1467.6,528.7 L1469,528.8 L1470.4,525 L1471.7,519.8 L1473.1,522.1 L1474.5,519.1 L1475.9,515.3 L1477.2,519.1 L1478.6,522.7 L1480,522.7 L1481.3,527.4 L1482.7,523.5 L1484.1,524.6 L1485.4,526.7 L1486.8,530.4 L1488.2,525.5 L1489.6,523.5 L1490.9,525.4 L1492.3,523.8 L1493.7,525.5 L1495,527 L1496.4,522.7 L1497.8,521.9 L1499.1,521.6 L1500.5,522.7 L1501.9,524.2 L1503.3,524.4 L1504.6,523.5 L1506,526.7 L1507.4,524.6 L1508.7,528.2 L1510.1,528.4 L1511.5,527.5 L1512.8,528.5 L1514.2,525.1 L1515.6,525.2 L1517,523.4 L1518.3,522.6 L1519.7,517.2 L1521.1,519.9 L1522.4,519.4 L1523.8,517.6 L1525.2,517.6 L1526.5,516.4 L1527.9,515.2 L1529.3,515.4 L1530.7,513.2 L1532,514.5 L1533.4,518.5 L1534.8,522.5 L1536.1,523.1 L1537.5,526.2 L1538.9,522.4 L1540.2,522.1 L1541.6,524.4 L1543,522.1 L1544.4,526.3 L1545.7,524.6 L1547.1,525.7 L1548.5,527.3 L1549.8,527.6 L1551.2,526.6 L1552.6,525.8 L1553.9,523.2 L1555.3,525.1 L1556.7,525 L1558.1,525.1 L1559.4,526.5 L1560.8,525.2 L1562.2,530.2 L1563.5,528.6 L1564.9,524.5 L1566.3,522.3 L1567.6,519.8 L1569,522.5 L1570.4,518.4 L1571.8,520.7 L1573.1,513.5 L1574.5,517 L1575.9,517.4 L1577.2,515.1 L1578.6,514.8 L1580,514.4 L1581.3,517 L1582.7,515.4 L1584.1,515.7 L1585.5,519.2 L1586.8,542.6 L1588.2,587 L1589.6,587 L1590.9,587 L1592.3,587 L1593.7,587 L1595,587 L1596.4,587 L1597.8,575.4 L1599.2,533.7 L1600.5,529.4 L1601.9,526.3 L1603.3,528 L1604.6,526.6 L1606,528.5 L1607.4,528.7 L1608.7,526.1 L1610.1,523.2 L1611.5,524.8 L1612.9,526.6 L1614.2,519.8 L1615.6,523.6 L1617,521.2 L1618.3,523.5 L1619.7,522.5 L1621.1,519.5 L1622.4,526.3 L1623.8,525.3 L1625.2,526.8 L1626.6,527.8 L1627.9,532.2 L1629.3,524.4 L1630.7,519.5 L1632,518.3 L1633.4,520.9 L1634.8,521.5 L1636.1,520.6 L1637.5,522.4 L1638.9,520.7 L1640.3,523 L1641.6,521.6 L1643,520.1 L1644.4,518.1 L1645.7,519.1 L1647.1,519 L1648.5,516.7 L1649.8,518 L1651.2,522.3 L1652.6,529.1 L1654,532.3 L1655.3,523.3 L1656.7,521.4 L1658.1,523.4 L1659.4,523.4 L1660.8,522.2 L1662.2,524.1 L1663.5,525.5 L1664.9,524.3 L1666.3,526.6 L1667.7,529.5 L1669,524.6 L1670.4,527.1 L1671.8,524.7 L1673.1,527.1 L1674.5,525.1 L1675.9,526.7 L1677.2,524.7 L1678.6,527.2 L1680,529.4 L1681.4,528.7 L1682.7,526.6 L1684.1,557 L1685.5,587 L1686.8,587 L1688.2,587 L1689.6,587 L1690.9,587 L1692.3,587 L1693.7,570.3 L1695.1,520.8 L1696.4,515.1 L1697.8,514.3 L1699.2,516.2 L1700.5,510.3 L1701.9,511.2 L1703.3,517.7 L1704.6,522.1 L1706,516.5 L1707.4,511.8 L1708.8,516.6 L1710.1,515.8 L1711.5,518.6 L1712.9,520.5 L1714.2,521.2 L1715.6,524 L1717,526 L1718.3,524.5 L1719.7,521.3 L1721.1,522.3 L1722.5,520.9 L1723.8,522.8 L1725.2,523.9 L1726.6,526.6 L1727.9,524.3 L1729.3,525.8 L1730.7,527.4 L1732,526.8 L1733.4,527.6 L1734.8,528 L1736.2,524.8 L1737.5,528.5 L1738.9,525.8 L1740.3,524.1 L1741.6,528.5 L1743,526.4 L1744.4,522.6 L1745.7,523.2 L1747.1,519.7 L1748.5,514 L1749.9,515.8 L1751.2,512.4 L1752.6,514.9 L1754,523.1 L1755.3,522 L1756.7,521.9 L1758.1,522 L1759.4,523.4 L1760.8,521.9 L1762.2,521.6 L1763.6,522.9 L1764.9,527.2 L1766.3,531.5 L1767.7,528.9 L1769,534 L1770.4,530.3 L1771.8,528 L1773.1,531.1 L1774.5,528.4 L1775.9,525 L1777.3,520.5 L1778.6,521.3 L1780,520.9 L1781.4,519.2 L1782.7,525.2 L1784.1,526.9 L1785.5,523.5 L1786.8,524.3 L1788.2,526.3 L1789.6,528.8 L1791,527.2 L1792.3,528.2 L1793.7,527.2 L1795.1,524.6 L1796.4,523.9 L1797.8,522.9 L1799.2,522.9 L1800.5,523.4 L1801.9,520.4 L1803.3,519.2 L1804.7,517.2 L1806,520.7 L1807.4,517.9 L1808.8,525.2 L1810.1,523.7 L1811.5,530.5 L1812.9,532.1 L1814.2,526.1 L1815.6,525.8 L1817,524.4 L1818.4,522.2 L1819.7,517 L1821.1,521.2 L1822.5,519.1 L1823.8,518.1 L1825.2,523 L1826.6,519.6 L1827.9,526 L1829.3,522.7 L1830.7,519.9 L1832.1,520.8 L1833.4,521.8 L1834.8,524.9 L1836.2,524.1 L1837.5,524 L1838.9,527.4 L1840.3,526.4 L1841.6,520.5 L1843,519 L1844.4,522 L1845.8,523.1 L1847.1,526.4 L1848.5,522.5 L1849.9,524 L1851.2,524.9 L1852.6,524.6 L1854,523.7 L1855.3,521.9 L1856.7,523 L1858.1,524 L1859.5,525.6 L1860.8,523.2 L1862.2,522 L1863.6,520.3 L1864.9,522.3 L1866.3,525.2 L1867.7,525.6 L1869,523.8 L1869,587 L1341.6,587 Z" fill="#5195ce" fill-opacity="0.1"/>
<path d="M1341.6,450.7 L1343,456.5 L1344.3,458.5 L1345.7,460.4 L1347.1,460 L1348.4,460.3 L1349.8,455.6 L1351.2,460 L1352.6,459.9 L1353.9,457.7 L1355.3,454 L1356.7,455.8 L1358,454.2 L1359.4,455.2 L1360.8,453.2 L1362.1,453.1 L1363.5,449.5 L1364.9,448.4 L1366.3,450.9 L1367.6,447.5 L1369,448.6 L1370.4,450.6 L1371.7,452.3 L1373.1,455.2 L1374.5,449.5 L1375.8,454.9 L1377.2,455.9 L1378.6,460.3 L1380,461.7 L1381.3,455.5 L1382.7,460.2 L1384.1,456.8 L1385.4,456.5 L1386.8,451.1 L1388.2,454.8 L1389.5,454.4 L1390.9,454 L1392.3,455.9 L1393.7,454.8 L1395,448.4 L1396.4,450.2 L1397.8,451 L1399.1,451.4 L1400.5,452.1 L1401.9,448.1 L1403.2,446.4 L1404.6,453 L1406,463.5 L1407.4,466.5 L1408.7,463.5 L1410.1,467.1 L1411.5,465.5 L1412.8,459.8 L1414.2,459.2 L1415.6,455.3 L1416.9,453 L1418.3,446.5 L1419.7,453.2 L1421.1,450.7 L1422.4,446.7 L1423.8,442.4 L1425.2,446.9 L1426.5,450.8 L1427.9,458.6 L1429.3,453.2 L1430.6,458.5 L1432,452.9 L1433.4,451.8 L1434.8,451.2 L1436.1,452.2 L1437.5,448 L1438.9,452.2 L1440.2,449.7 L1441.6,453.4 L1443,445.7 L1444.3,443.8 L1445.7,439.1 L1447.1,442.1 L1448.5,436.1 L1449.8,440 L1451.2,446.7 L1452.6,450.3 L1453.9,463 L1455.3,464.6 L1456.7,466.7 L1458,465.6 L1459.4,462.8 L1460.8,464.7 L1462.2,456.2 L1463.5,457.6 L1464.9,452.5 L1466.3,458.2 L1467.6,460.5 L1469,459.9 L1470.4,456 L1471.7,451.4 L1473.1,444.9 L1474.5,443.7 L1475.9,444 L1477.2,449.9 L1478.6,449.3 L1480,456.3 L1481.3,456.5 L1482.7,456.5 L1484.1,453.9 L1485.4,454.7 L1486.8,448 L1488.2,451.5 L1489.6,454.7 L1490.9,456.5 L1492.3,454.8 L1493.7,457.6 L1495,453.7 L1496.4,452.8 L1497.8,451.8 L1499.1,450.8 L1500.5,451.2 L1501.9,449.6 L1503.3,450.2 L1504.6,453.4 L1506,449.7 L1507.4,450.3 L1508.7,451.1 L1510.1,447.9 L1511.5,453.9 L1512.8,457.2 L1514.2,455 L1515.6,457.8 L1517,453.8 L1518.3,451.6 L1519.7,451.5 L1521.1,447.1 L1522.4,449.2 L1523.8,448.2 L1525.2,451.2 L1526.5,448.8 L1527.9,443.6 L1529.3,437.7 L1530.7,444.8 L1532,443 L1533.4,445.6 L1534.8,444.8 L1536.1,449.4 L1537.5,449.9 L1538.9,451.2 L1540.2,455.4 L1541.6,457.3 L1543,457.9 L1544.4,458 L1545.7,456.3 L1547.1,453.9 L1548.5,454.2 L1549.8,458.9 L1551.2,457.4 L1552.6,454.3 L1553.9,453.9 L1555.3,453 L1556.7,457.1 L1558.1,456 L1559.4,456.4 L1560.8,455.6 L1562.2,458.1 L1563.5,458.4 L1564.9,454.3 L1566.3,453.8 L1567.6,452.6 L1569,447 L1570.4,447.4 L1571.8,445.8 L1573.1,445.6 L1574.5,449.9 L1575.9,448.2 L1577.2,447.3 L1578.6,444.2 L1580,446.7 L1581.3,446 L1582.7,450.7 L1584.1,451.3 L1585.5,448.7 L1586.8,476.2 L1588.2,520.5 L1589.6,520.7 L1590.9,520.1 L1592.3,521.2 L1593.7,519.4 L1595,522.1 L1596.4,516 L1597.8,509.1 L1599.2,467 L1600.5,459.9 L1601.9,460.7 L1603.3,457.3 L1604.6,454.6 L1606,454.8 L1607.4,458.9 L1608.7,453.9 L1610.1,454.9 L1611.5,455.2 L1612.9,458.1 L1614.2,458.6 L1615.6,460.1 L1617,452 L1618.3,449.8 L1619.7,452.1 L1621.1,448.8 L1622.4,447.8 L1623.8,451.8 L1625.2,452.7 L1626.6,455.7 L1627.9,451.5 L1629.3,454.2 L1630.7,445.7 L1632,442.6 L1633.4,448.9 L1634.8,443.6 L1636.1,443.4 L1637.5,446.3 L1638.9,447.5 L1640.3,446.6 L1641.6,454.5 L1643,456.1 L1644.4,462.2 L1645.7,458.4 L1647.1,453.3 L1648.5,451.5 L1649.8,450.4 L1651.2,453.6 L1652.6,454.3 L1654,457.6 L1655.3,446.3 L1656.7,449.3 L1658.1,448.9 L1659.4,454 L1660.8,450.3 L1662.2,447.1 L1663.5,446.3 L1664.9,451.8 L1666.3,453 L1667.7,457.9 L1669,455.3 L1670.4,458.9 L1671.8,455 L1673.1,456.2 L1674.5,457.6 L1675.9,461.5 L1677.2,465.7 L1678.6,464.2 L1680,463.6 L1681.4,464.5 L1682.7,456 L1684.1,493.1 L1685.5,519.8 L1686.8,519.8 L1688.2,517.1 L1689.6,521.2 L1690.9,518.5 L1692.3,520.3 L1693.7,506 L1695.1,457.1 L1696.4,448.6 L1697.8,447.3 L1699.2,447.9 L1700.5,445.3 L1701.9,448.7 L1703.3,453 L1704.6,460.1 L1706,455.1 L1707.4,450.8 L1708.8,446.5 L1710.1,452.8 L1711.5,448.3 L1712.9,454.9 L1714.2,456.4 L1715.6,461.6 L1717,456.7 L1718.3,457.2 L1719.7,450.9 L1721.1,452.8 L1722.5,457.1 L1723.8,457.6 L1725.2,457.3 L1726.6,462.6 L1727.9,461.9 L1729.3,462.9 L1730.7,464.6 L1732,465 L1733.4,458.2 L1734.8,459.8 L1736.2,458.3 L1737.5,456.6 L1738.9,456.2 L1740.3,451.4 L1741.6,458.8 L1743,452 L1744.4,456.9 L1745.7,456.7 L1747.1,456.8 L1748.5,451.9 L1749.9,449.5 L1751.2,448.6 L1752.6,448.4 L1754,452.3 L1755.3,457.4 L1756.7,458.4 L1758.1,457.4 L1759.4,457.6 L1760.8,456.3 L1762.2,454.7 L1763.6,453.4 L1764.9,454.9 L1766.3,456.8 L1767.7,461.6 L1769,461 L1770.4,469.1 L1771.8,470.8 L1773.1,469.9 L1774.5,467.9 L1775.9,466.5 L1777.3,469.9 L1778.6,467.9 L1780,459.4 L1781.4,455.9 L1782.7,452.5 L1784.1,452.3 L1785.5,454.9 L1786.8,451.7 L1788.2,458.7 L1789.6,456.2 L1791,450.1 L1792.3,448.7 L1793.7,446.9 L1795.1,444.7 L1796.4,450.3 L1797.8,449.9 L1799.2,457.1 L1800.5,460.5 L1801.9,459.2 L1803.3,457.6 L1804.7,456.2 L1806,456.2 L1807.4,460.3 L1808.8,458.4 L1810.1,469.3 L1811.5,465.7 L1812.9,465.8 L1814.2,459.7 L1815.6,460.1 L1817,460.3 L1818.4,455.2 L1819.7,457.2 L1821.1,452.1 L1822.5,452.1 L1823.8,455.1 L1825.2,457.4 L1826.6,453.7 L1827.9,458.8 L1829.3,459.4 L1830.7,452.2 L1832.1,456.3 L1833.4,455.2 L1834.8,454.4 L1836.2,453.7 L1837.5,450.2 L1838.9,445.6 L1840.3,450.5 L1841.6,448.3 L1843,442.6 L1844.4,445.7 L1845.8,444.3 L1847.1,442.5 L1848.5,453.2 L1849.9,453.1 L1851.2,473.3 L1852.6,524.6 L1854,523.7 L1855.3,521.9 L1856.7,523 L1858.1,524 L1859.5,525.6 L1860.8,523.2 L1862.2,502.1 L1863.6,464.8 L1864.9,464.9 L1866.3,460.7 L1867.7,466.3 L1869,469.1" fill="none" stroke="#e24d42" stroke-width="1.3" stroke-linejoin="round"/>
<path d="M1341.6,520.2 L1343,520.6 L1344.3,517.3 L1345.7,519.6 L1347.1,520.3 L1348.4,520.2 L1349.8,520.1 L1351.2,525.9 L1352.6,524.3 L1353.9,523.9 L1355.3,516.8 L1356.7,516.4 L1358,517.9 L1359.4,519.2 L1360.8,514.6 L1362.1,517 L1363.5,514.7 L1364.9,520.8 L1366.3,514.1 L1367.6,517.1 L1369,514.1 L1370.4,515 L1371.7,516.1 L1373.1,518.1 L1374.5,516.2 L1375.8,525.8 L1377.2,518.5 L1378.6,519.3 L1380,522.4 L1381.3,521.3 L1382.7,522.7 L1384.1,524.4 L1385.4,521.4 L1386.8,520.9 L1388.2,519.3 L1389.5,518.3 L1390.9,512 L1392.3,512.9 L1393.7,511.8 L1395,514 L1396.4,511.6 L1397.8,516.2 L1399.1,517 L1400.5,518.9 L1401.9,516.3 L1403.2,516.5 L1404.6,518 L1406,520.1 L1407.4,517.2 L1408.7,522.5 L1410.1,525.4 L1411.5,531 L1412.8,523.7 L1414.2,522.8 L1415.6,523.7 L1416.9,521.1 L1418.3,524 L1419.7,524.2 L1421.1,525.4 L1422.4,523.1 L1423.8,522.6 L1425.2,521.1 L1426.5,524.1 L1427.9,525.8 L1429.3,522.6 L1430.6,522.8 L1432,525.2 L1433.4,526.7 L1434.8,524.9 L1436.1,525.4 L1437.5,522.6 L1438.9,521.5 L1440.2,526.6 L1441.6,525 L1443,524.2 L1444.3,518.9 L1445.7,523.5 L1447.1,521 L1448.5,522.4 L1449.8,517.1 L1451.2,520.8 L1452.6,517.2 L1453.9,518 L1455.3,520.4 L1456.7,521.7 L1458,522.9 L1459.4,518.1 L1460.8,518.2 L1462.2,524 L1463.5,521.8 L1464.9,523.5 L1466.3,524.6 L1467.6,528.7 L1469,528.8 L1470.4,525 L1471.7,519.8 L1473.1,522.1 L1474.5,519.1 L1475.9,515.3 L1477.2,519.1 L1478.6,522.7 L1480,522.7 L1481.3,527.4 L1482.7,523.5 L1484.1,524.6 L1485.4,526.7 L1486.8,530.4 L1488.2,525.5 L1489.6,523.5 L1490.9,525.4 L1492.3,523.8 L1493.7,525.5 L1495,527 L1496.4,522.7 L1497.8,521.9 L1499.1,521.6 L1500.5,522.7 L1501.9,524.2 L1503.3,524.4 L1504.6,523.5 L1506,526.7 L1507.4,524.6 L1508.7,528.2 L1510.1,528.4 L1511.5,527.5 L1512.8,528.5 L1514.2,525.1 L1515.6,525.2 L1517,523.4 L1518.3,522.6 L1519.7,517.2 L1521.1,519.9 L1522.4,519.4 L1523.8,517.6 L1525.2,517.6 L1526.5,516.4 L1527.9,515.2 L1529.3,515.4 L1530.7,513.2 L1532,514.5 L1533.4,518.5 L1534.8,522.5 L1536.1,523.1 L1537.5,526.2 L1538.9,522.4 L1540.2,522.1 L1541.6,524.4 L1543,522.1 L1544.4,526.3 L1545.7,524.6 L1547.1,525.7 L1548.5,527.3 L1549.8,527.6 L1551.2,526.6 L1552.6,525.8 L1553.9,523.2 L1555.3,525.1 L1556.7,525 L1558.1,525.1 L1559.4,526.5 L1560.8,525.2 L1562.2,530.2 L1563.5,528.6 L1564.9,524.5 L1566.3,522.3 L1567.6,519.8 L1569,522.5 L1570.4,518.4 L1571.8,520.7 L1573.1,513.5 L1574.5,517 L1575.9,517.4 L1577.2,515.1 L1578.6,514.8 L1580,514.4 L1581.3,517 L1582.7,515.4 L1584.1,515.7 L1585.5,519.2 L1586.8,542.6 L1588.2,587 L1589.6,587 L1590.9,587 L1592.3,587 L1593.7,587 L1595,587 L1596.4,587 L1597.8,575.4 L1599.2,533.7 L1600.5,529.4 L1601.9,526.3 L1603.3,528 L1604.6,526.6 L1606,528.5 L1607.4,528.7 L1608.7,526.1 L1610.1,523.2 L1611.5,524.8 L1612.9,526.6 L1614.2,519.8 L1615.6,523.6 L1617,521.2 L1618.3,523.5 L1619.7,522.5 L1621.1,519.5 L1622.4,526.3 L1623.8,525.3 L1625.2,526.8 L1626.6,527.8 L1627.9,532.2 L1629.3,524.4 L1630.7,519.5 L1632,518.3 L1633.4,520.9 L1634.8,521.5 L1636.1,520.6 L1637.5,522.4 L1638.9,520.7 L1640.3,523 L1641.6,521.6 L1643,520.1 L1644.4,518.1 L1645.7,519.1 L1647.1,519 L1648.5,516.7 L1649.8,518 L1651.2,522.3 L1652.6,529.1 L1654,532.3 L1655.3,523.3 L1656.7,521.4 L1658.1,523.4 L1659.4,523.4 L1660.8,522.2 L1662.2,524.1 L1663.5,525.5 L1664.9,524.3 L1666.3,526.6 L1667.7,529.5 L1669,524.6 L1670.4,527.1 L1671.8,524.7 L1673.1,527.1 L1674.5,525.1 L1675.9,526.7 L1677.2,524.7 L1678.6,527.2 L1680,529.4 L1681.4,528.7 L1682.7,526.6 L1684.1,557 L1685.5,587 L1686.8,587 L1688.2,587 L1689.6,587 L1690.9,587 L1692.3,587 L1693.7,570.3 L1695.1,520.8 L1696.4,515.1 L1697.8,514.3 L1699.2,516.2 L1700.5,510.3 L1701.9,511.2 L1703.3,517.7 L1704.6,522.1 L1706,516.5 L1707.4,511.8 L1708.8,516.6 L1710.1,515.8 L1711.5,518.6 L1712.9,520.5 L1714.2,521.2 L1715.6,524 L1717,526 L1718.3,524.5 L1719.7,521.3 L1721.1,522.3 L1722.5,520.9 L1723.8,522.8 L1725.2,523.9 L1726.6,526.6 L1727.9,524.3 L1729.3,525.8 L1730.7,527.4 L1732,526.8 L1733.4,527.6 L1734.8,528 L1736.2,524.8 L1737.5,528.5 L1738.9,525.8 L1740.3,524.1 L1741.6,528.5 L1743,526.4 L1744.4,522.6 L1745.7,523.2 L1747.1,519.7 L1748.5,514 L1749.9,515.8 L1751.2,512.4 L1752.6,514.9 L1754,523.1 L1755.3,522 L1756.7,521.9 L1758.1,522 L1759.4,523.4 L1760.8,521.9 L1762.2,521.6 L1763.6,522.9 L1764.9,527.2 L1766.3,531.5 L1767.7,528.9 L1769,534 L1770.4,530.3 L1771.8,528 L1773.1,531.1 L1774.5,528.4 L1775.9,525 L1777.3,520.5 L1778.6,521.3 L1780,520.9 L1781.4,519.2 L1782.7,525.2 L1784.1,526.9 L1785.5,523.5 L1786.8,524.3 L1788.2,526.3 L1789.6,528.8 L1791,527.2 L1792.3,528.2 L1793.7,527.2 L1795.1,524.6 L1796.4,523.9 L1797.8,522.9 L1799.2,522.9 L1800.5,523.4 L1801.9,520.4 L1803.3,519.2 L1804.7,517.2 L1806,520.7 L1807.4,517.9 L1808.8,525.2 L1810.1,523.7 L1811.5,530.5 L1812.9,532.1 L1814.2,526.1 L1815.6,525.8 L1817,524.4 L1818.4,522.2 L1819.7,517 L1821.1,521.2 L1822.5,519.1 L1823.8,518.1 L1825.2,523 L1826.6,519.6 L1827.9,526 L1829.3,522.7 L1830.7,519.9 L1832.1,520.8 L1833.4,521.8 L1834.8,524.9 L1836.2,524.1 L1837.5,524 L1838.9,527.4 L1840.3,526.4 L1841.6,520.5 L1843,519 L1844.4,522 L1845.8,523.1 L1847.1,526.4 L1848.5,522.5 L1849.9,524 L1851.2,524.9 L1852.6,524.6 L1854,523.7 L1855.3,521.9 L1856.7,523 L1858.1,524 L1859.5,525.6 L1860.8,523.2 L1862.2,522 L1863.6,520.3 L1864.9,522.3 L1866.3,525.2 L1867.7,525.6 L1869,523.8" fill="none" stroke="#5195ce" stroke-width="1.3" stroke-linejoin="round"/>
<g fill-opacity="0.3">
<path d="M155.4,830.5 L167,829.9 L178.7,833.7 L190.3,836.4 L201.9,834.7 L213.6,834.3 L225.2,834.9 L236.8,835.2 L248.5,832 L260.1,837.1 L271.8,833.3 L283.4,833.7 L295,833.7 L306.7,836.4 L318.3,832.6 L329.9,833.7 L341.6,834.1 L353.2,836.4 L364.8,835.8 L376.5,835.8 L388.1,830.9 L399.7,834.7 L411.4,831.8 L423,834.7 L434.6,835.4 L446.3,833.3 L457.9,838.9 L469.5,835.2 L481.2,835.4 L492.8,834.3 L504.5,834.3 L516.1,829.9 L527.7,830.9 L539.4,832.2 L551,832.6 L562.6,831.2 L574.3,835.8 L585.9,832.2 L597.5,834.1 L609.2,835.2 L620.8,835.4 L632.4,835.2 L644.1,832.2 L655.7,832.2 L667.3,835.2 L679,834.7 L690.6,834.3 L702.2,833.7 L713.9,832.6 L725.5,833.1 L737.1,834.7 L748.8,835.8 L760.4,834.7 L772.1,834.7 L783.7,833.7 L795.3,834.1 L807,838.9 L818.6,836.8 L830.2,836.2 L841.9,839.6 L853.5,831.2 L865.1,835.8 L876.8,835.8 L888.4,835.8 L900,831.2 L911.7,835.8 L923.3,833.7 L934.9,830.5 L946.6,840 L958.2,835.4 L969.8,834.7 L981.5,833.7 L993.1,836.8 L1004.8,832.6 L1016.4,838.3 L1028,836.2 L1039.7,835.2 L1051.3,833.7 L1062.9,833.7 L1074.6,836.8 L1086.2,831.6 L1097.8,838.9 L1109.5,832.6 L1121.1,835.2 L1132.7,834.7 L1144.4,832.6 L1156,830.1 L1167.6,831.6 L1179.3,834.3 L1190.9,834.7 L1202.6,835.2 L1214.2,834.3 L1225.8,830.5 L1237.5,833.1 L1249.1,835.4 L1260.7,828 L1272.4,830.9 L1284,828.8 L1295.6,832.6 L1307.3,838.3 L1318.9,829.9 L1330.5,834.7 L1342.2,830.9 L1353.8,829.1 L1365.4,832.2 L1377.1,838.9 L1388.7,836.8 L1400.3,830.9 L1412,833.7 L1423.6,833.7 L1435.2,834.3 L1446.9,830.1 L1458.5,834.1 L1470.2,836.8 L1481.8,833.7 L1493.4,832.6 L1505.1,833.7 L1516.7,829.9 L1528.3,834.3 L1528.3,841.1 L155.4,841.1 Z" fill="#7eb26d"/>
<path d="M155.4,818.3 L167,818.5 L178.7,817.1 L190.3,820.6 L201.9,819.4 L213.6,815.8 L225.2,816 L236.8,820.6 L248.5,814.3 L260.1,822.1 L271.8,816.8 L283.4,823.2 L295,820.2 L306.7,820.2 L318.3,812.6 L329.9,816.2 L341.6,817.5 L353.2,822.5 L364.8,821.3 L376.5,819.4 L388.1,814.1 L399.7,817.5 L411.4,819.4 L423,821.9 L434.6,814.7 L446.3,821.7 L457.9,822.5 L469.5,819.6 L481.2,822.7 L492.8,817.9 L504.5,817.9 L516.1,813.7 L527.7,815.4 L539.4,820 L551,813.7 L562.6,812 L574.3,820.4 L585.9,816.4 L597.5,821.1 L609.2,817.5 L620.8,817.9 L632.4,819.4 L644.1,822.5 L655.7,817.9 L667.3,818.9 L679,817.9 L690.6,816.8 L702.2,812.6 L713.9,816.8 L725.5,816.8 L737.1,820 L748.8,820 L760.4,817.3 L772.1,819.4 L783.7,821.7 L795.3,819.6 L807,821.5 L818.6,821.1 L830.2,816.8 L841.9,823.8 L853.5,817.9 L865.1,820 L876.8,822.7 L888.4,817.9 L900,817.3 L911.7,822.1 L923.3,817.3 L934.9,817.5 L946.6,823.8 L958.2,820 L969.8,820.6 L981.5,816.8 L993.1,818.3 L1004.8,809.5 L1016.4,820 L1028,821.1 L1039.7,824.2 L1051.3,814.1 L1062.9,820.6 L1074.6,824.8 L1086.2,810.5 L1097.8,824.2 L1109.5,817.5 L1121.1,818.9 L1132.7,820.6 L1144.4,815.4 L1156,813.1 L1167.6,815.2 L1179.3,817.5 L1190.9,821.1 L1202.6,816.8 L1214.2,818.9 L1225.8,812.6 L1237.5,822.5 L1249.1,819.6 L1260.7,814.7 L1272.4,812.2 L1284,813.3 L1295.6,814.3 L1307.3,823.8 L1318.9,817.9 L1330.5,814.7 L1342.2,818.5 L1353.8,813.3 L1365.4,818.3 L1377.1,822.7 L1388.7,823.2 L1400.3,816.4 L1412,815.8 L1423.6,819.6 L1435.2,816.8 L1446.9,814.1 L1458.5,817.3 L1470.2,820.6 L1481.8,820 L1493.4,815.4 L1505.1,817.5 L1516.7,818.5 L1528.3,817.5 L1528.3,841.1 L155.4,841.1 Z" fill="#629e51"/>
<path d="M155.4,786.9 L167,788.4 L178.7,795.8 L190.3,789.5 L201.9,801.1 L213.6,794.1 L225.2,790.9 L236.8,800.6 L248.5,793.7 L260.1,801.1 L271.8,800.6 L283.4,802.1 L295,804.2 L306.7,800 L318.3,786.9 L329.9,800 L341.6,793.1 L353.2,803.6 L364.8,801.1 L376.5,799.4 L388.1,796.8 L399.7,789.9 L411.4,800.4 L423,802.5 L434.6,793.7 L446.3,799.6 L457.9,805.3 L469.5,802.7 L481.2,799.6 L492.8,806.7 L504.5,798.3 L516.1,794.3 L527.7,788 L539.4,796.2 L551,798.3 L562.6,794.7 L574.3,797.5 L585.9,796.4 L597.5,797.9 L609.2,796.8 L620.8,794.1 L632.4,798.9 L644.1,805.7 L655.7,799.4 L667.3,803.8 L679,794.3 L690.6,796.8 L702.2,786.9 L713.9,797.9 L725.5,791.6 L737.1,798.9 L748.8,797.5 L760.4,797.9 L772.1,802.5 L783.7,805.9 L795.3,803.2 L807,801.1 L818.6,795.8 L830.2,795.8 L841.9,806.7 L853.5,797.9 L865.1,799.6 L876.8,797.3 L888.4,796.8 L900,800 L911.7,790.5 L923.3,795.8 L934.9,801.1 L946.6,805.9 L958.2,804.2 L969.8,797.9 L981.5,802.1 L993.1,800 L1004.8,789.5 L1016.4,798.9 L1028,801.1 L1039.7,810.5 L1051.3,794.1 L1062.9,803.8 L1074.6,797.5 L1086.2,776.8 L1097.8,802.1 L1109.5,799.6 L1121.1,798.9 L1132.7,801.1 L1144.4,790.5 L1156,790.9 L1167.6,797.5 L1179.3,782.7 L1190.9,779.4 L1202.6,794.7 L1214.2,805.9 L1225.8,795.8 L1237.5,795.4 L1249.1,802.1 L1260.7,794.1 L1272.4,797.3 L1284,790.5 L1295.6,796.2 L1307.3,803.8 L1318.9,800.6 L1330.5,800.6 L1342.2,799.6 L1353.8,780.4 L1365.4,794.7 L1377.1,809.9 L1388.7,799.4 L1400.3,800.6 L1412,794.7 L1423.6,798.5 L1435.2,798.3 L1446.9,793.7 L1458.5,797.5 L1470.2,800 L1481.8,800.6 L1493.4,797.3 L1505.1,800.6 L1516.7,800.6 L1528.3,799.6 L1528.3,841.1 L155.4,841.1 Z" fill="#629e51"/>
<path d="M155.4,754.7 L167,773.7 L178.7,790.1 L190.3,776.4 L201.9,780.4 L213.6,780.4 L225.2,780 L236.8,784.2 L248.5,774.3 L260.1,776.4 L271.8,790.5 L283.4,794.7 L295,776.8 L306.7,786.3 L318.3,769.9 L329.9,779.6 L341.6,777.5 L353.2,787.4 L364.8,794.3 L376.5,791.6 L388.1,770.1 L399.7,776.8 L411.4,789.5 L423,782.7 L434.6,777.9 L446.3,780 L457.9,783.2 L469.5,793.7 L481.2,774.3 L492.8,792.6 L504.5,787.8 L516.1,763.2 L527.7,776.4 L539.4,782.7 L551,790.5 L562.6,770.9 L574.3,787.4 L585.9,788.8 L597.5,787.8 L609.2,759.4 L620.8,757.9 L632.4,790.1 L644.1,787.4 L655.7,772.6 L667.3,775.2 L679,782.1 L690.6,787.4 L702.2,782.5 L713.9,773.7 L725.5,771.2 L737.1,772.6 L748.8,775.2 L760.4,782.1 L772.1,780 L783.7,784.2 L795.3,787.8 L807,784.2 L818.6,771.2 L830.2,775.2 L841.9,799.6 L853.5,786.9 L865.1,785.9 L876.8,784.2 L888.4,782.1 L900,774.3 L911.7,763.8 L923.3,776.4 L934.9,777.9 L946.6,785.3 L958.2,789.1 L969.8,786.7 L981.5,780 L993.1,782.5 L1004.8,774.3 L1016.4,760.4 L1028,757.9 L1039.7,800 L1051.3,782.1 L1062.9,790.1 L1074.6,781.1 L1086.2,764.2 L1097.8,784.2 L1109.5,776.8 L1121.1,777.9 L1132.7,782.5 L1144.4,777.5 L1156,782.7 L1167.6,774.7 L1179.3,770.5 L1190.9,756.8 L1202.6,779.6 L1214.2,778.5 L1225.8,781.5 L1237.5,772.2 L1249.1,787.4 L1260.7,781.7 L1272.4,780.6 L1284,767.4 L1295.6,773.7 L1307.3,777.3 L1318.9,768 L1330.5,788.8 L1342.2,787.4 L1353.8,741.1 L1365.4,770.5 L1377.1,792.6 L1388.7,781.1 L1400.3,770.5 L1412,759.6 L1423.6,766.3 L1435.2,778.9 L1446.9,740 L1458.5,758.9 L1470.2,787.8 L1481.8,774.7 L1493.4,772 L1505.1,787.8 L1516.7,785.3 L1528.3,771.2 L1528.3,841.1 L155.4,841.1 Z" fill="#508642"/>
<path d="M155.4,927.5 L167,908.5 L178.7,892.1 L190.3,905.8 L201.9,901.8 L213.6,901.8 L225.2,902.2 L236.8,898 L248.5,907.9 L260.1,905.8 L271.8,891.7 L283.4,887.5 L295,905.4 L306.7,895.9 L318.3,912.3 L329.9,902.6 L341.6,904.7 L353.2,894.8 L364.8,887.9 L376.5,890.6 L388.1,912.1 L399.7,905.4 L411.4,892.7 L423,899.5 L434.6,904.3 L446.3,902.2 L457.9,899 L469.5,888.5 L481.2,907.9 L492.8,889.6 L504.5,894.4 L516.1,919 L527.7,905.8 L539.4,899.5 L551,891.7 L562.6,911.3 L574.3,894.8 L585.9,893.4 L597.5,894.4 L609.2,922.8 L620.8,924.3 L632.4,892.1 L644.1,894.8 L655.7,909.6 L667.3,907 L679,900.1 L690.6,894.8 L702.2,899.7 L713.9,908.5 L725.5,911 L737.1,909.6 L748.8,907 L760.4,900.1 L772.1,902.2 L783.7,898 L795.3,894.4 L807,898 L818.6,911 L830.2,907 L841.9,882.6 L853.5,895.3 L865.1,896.3 L876.8,898 L888.4,900.1 L900,907.9 L911.7,918.4 L923.3,905.8 L934.9,904.3 L946.6,896.9 L958.2,893.1 L969.8,895.5 L981.5,902.2 L993.1,899.7 L1004.8,907.9 L1016.4,921.8 L1028,924.3 L1039.7,882.2 L1051.3,900.1 L1062.9,892.1 L1074.6,901.1 L1086.2,918 L1097.8,898 L1109.5,905.4 L1121.1,904.3 L1132.7,899.7 L1144.4,904.7 L1156,899.5 L1167.6,907.5 L1179.3,911.7 L1190.9,925.4 L1202.6,902.6 L1214.2,903.7 L1225.8,900.7 L1237.5,910 L1249.1,894.8 L1260.7,900.5 L1272.4,901.6 L1284,914.8 L1295.6,908.5 L1307.3,904.9 L1318.9,914.2 L1330.5,893.4 L1342.2,894.8 L1353.8,941.1 L1365.4,911.7 L1377.1,889.6 L1388.7,901.1 L1400.3,911.7 L1412,922.6 L1423.6,915.9 L1435.2,903.3 L1446.9,942.2 L1458.5,923.3 L1470.2,894.4 L1481.8,907.5 L1493.4,910.2 L1505.1,894.4 L1516.7,896.9 L1528.3,911 L1528.3,841.1 L155.4,841.1 Z" fill="#82b5d8"/>
<path d="M155.4,863.9 L167,863.7 L178.7,865.1 L190.3,861.6 L201.9,862.8 L213.6,866.4 L225.2,866.2 L236.8,861.6 L248.5,867.9 L260.1,860.1 L271.8,865.4 L283.4,859 L295,862 L306.7,862 L318.3,869.6 L329.9,866 L341.6,864.7 L353.2,859.7 L364.8,860.9 L376.5,862.8 L388.1,868.1 L399.7,864.7 L411.4,862.8 L423,860.3 L434.6,867.5 L446.3,860.5 L457.9,859.7 L469.5,862.6 L481.2,859.5 L492.8,864.3 L504.5,864.3 L516.1,868.5 L527.7,866.8 L539.4,862.2 L551,868.5 L562.6,870.2 L574.3,861.8 L585.9,865.8 L597.5,861.1 L609.2,864.7 L620.8,864.3 L632.4,862.8 L644.1,859.7 L655.7,864.3 L667.3,863.3 L679,864.3 L690.6,865.4 L702.2,869.6 L713.9,865.4 L725.5,865.4 L737.1,862.2 L748.8,862.2 L760.4,864.9 L772.1,862.8 L783.7,860.5 L795.3,862.6 L807,860.7 L818.6,861.1 L830.2,865.4 L841.9,858.4 L853.5,864.3 L865.1,862.2 L876.8,859.5 L888.4,864.3 L900,864.9 L911.7,860.1 L923.3,864.9 L934.9,864.7 L946.6,858.4 L958.2,862.2 L969.8,861.6 L981.5,865.4 L993.1,863.9 L1004.8,872.7 L1016.4,862.2 L1028,861.1 L1039.7,858 L1051.3,868.1 L1062.9,861.6 L1074.6,857.4 L1086.2,871.7 L1097.8,858 L1109.5,864.7 L1121.1,863.3 L1132.7,861.6 L1144.4,866.8 L1156,869.1 L1167.6,867 L1179.3,864.7 L1190.9,861.1 L1202.6,865.4 L1214.2,863.3 L1225.8,869.6 L1237.5,859.7 L1249.1,862.6 L1260.7,867.5 L1272.4,870 L1284,868.9 L1295.6,867.9 L1307.3,858.4 L1318.9,864.3 L1330.5,867.5 L1342.2,863.7 L1353.8,868.9 L1365.4,863.9 L1377.1,859.5 L1388.7,859 L1400.3,865.8 L1412,866.4 L1423.6,862.6 L1435.2,865.4 L1446.9,868.1 L1458.5,864.9 L1470.2,861.6 L1481.8,862.2 L1493.4,866.8 L1505.1,864.7 L1516.7,863.7 L1528.3,864.7 L1528.3,841.1 L155.4,841.1 Z" fill="#1f78c1"/>
</g>
<g fill="none" stroke-width="2.5" stroke-linejoin="round">
<path d="M155.4,840.7 L167,840.7 L178.7,840.7 L190.3,840.7 L201.9,840.7 L213.6,840.7 L225.2,840.7 L236.8,840.7 L248.5,840.7 L260.1,840.7 L271.8,840.7 L283.4,840.7 L295,840.7 L306.7,840.7 L318.3,840.7 L329.9,840.7 L341.6,840.7 L353.2,840.7 L364.8,840.7 L376.5,840.7 L388.1,840.7 L399.7,840.7 L411.4,840.7 L423,840.7 L434.6,840.7 L446.3,840.7 L457.9,840.7 L469.5,840.7 L481.2,840.7 L492.8,840.7 L504.5,840.7 L516.1,840.7 L527.7,840.7 L539.4,840.7 L551,840.7 L562.6,840.7 L574.3,840.7 L585.9,840.7 L597.5,840.7 L609.2,840.7 L620.8,840.7 L632.4,840.7 L644.1,840.7 L655.7,840.7 L667.3,840.7 L679,840.7 L690.6,840.7 L702.2,840.7 L713.9,840.7 L725.5,840.7 L737.1,840.7 L748.8,840.7 L760.4,840.7 L772.1,840.7 L783.7,840.7 L795.3,840.7 L807,840.7 L818.6,840.7 L830.2,840.7 L841.9,840.7 L853.5,840.7 L865.1,840.7 L876.8,840.7 L888.4,840.7 L900,840.7 L911.7,840.7 L923.3,840.7 L934.9,840.7 L946.6,840.7 L958.2,840.7 L969.8,840.7 L981.5,840.7 L993.1,840.7 L1004.8,840.7 L1016.4,840.7 L1028,840.7 L1039.7,840.7 L1051.3,840.7 L1062.9,840.7 L1074.6,840.7 L1086.2,840.7 L1097.8,840.7 L1109.5,840.7 L1121.1,840.7 L1132.7,840.7 L1144.4,840.7 L1156,840.7 L1167.6,840.7 L1179.3,840.7 L1190.9,840.7 L1202.6,840.7 L1214.2,840.7 L1225.8,840.7 L1237.5,840.7 L1249.1,840.7 L1260.7,840.7 L1272.4,840.7 L1284,840.7 L1295.6,840.7 L1307.3,840.7 L1318.9,840.7 L1330.5,840.7 L1342.2,840.7 L1353.8,840.7 L1365.4,840.7 L1377.1,840.7 L1388.7,840.7 L1400.3,840.7 L1412,840.7 L1423.6,840.7 L1435.2,840.7 L1446.9,840.7 L1458.5,840.7 L1470.2,840.7 L1481.8,840.7 L1493.4,840.7 L1505.1,840.7 L1516.7,840.7 L1528.3,840.7" stroke="#86b873" stroke-width="2"/>
<path d="M155.4,830.5 L167,829.9 L178.7,833.7 L190.3,836.4 L201.9,834.7 L213.6,834.3 L225.2,834.9 L236.8,835.2 L248.5,832 L260.1,837.1 L271.8,833.3 L283.4,833.7 L295,833.7 L306.7,836.4 L318.3,832.6 L329.9,833.7 L341.6,834.1 L353.2,836.4 L364.8,835.8 L376.5,835.8 L388.1,830.9 L399.7,834.7 L411.4,831.8 L423,834.7 L434.6,835.4 L446.3,833.3 L457.9,838.9 L469.5,835.2 L481.2,835.4 L492.8,834.3 L504.5,834.3 L516.1,829.9 L527.7,830.9 L539.4,832.2 L551,832.6 L562.6,831.2 L574.3,835.8 L585.9,832.2 L597.5,834.1 L609.2,835.2 L620.8,835.4 L632.4,835.2 L644.1,832.2 L655.7,832.2 L667.3,835.2 L679,834.7 L690.6,834.3 L702.2,833.7 L713.9,832.6 L725.5,833.1 L737.1,834.7 L748.8,835.8 L760.4,834.7 L772.1,834.7 L783.7,833.7 L795.3,834.1 L807,838.9 L818.6,836.8 L830.2,836.2 L841.9,839.6 L853.5,831.2 L865.1,835.8 L876.8,835.8 L888.4,835.8 L900,831.2 L911.7,835.8 L923.3,833.7 L934.9,830.5 L946.6,840 L958.2,835.4 L969.8,834.7 L981.5,833.7 L993.1,836.8 L1004.8,832.6 L1016.4,838.3 L1028,836.2 L1039.7,835.2 L1051.3,833.7 L1062.9,833.7 L1074.6,836.8 L1086.2,831.6 L1097.8,838.9 L1109.5,832.6 L1121.1,835.2 L1132.7,834.7 L1144.4,832.6 L1156,830.1 L1167.6,831.6 L1179.3,834.3 L1190.9,834.7 L1202.6,835.2 L1214.2,834.3 L1225.8,830.5 L1237.5,833.1 L1249.1,835.4 L1260.7,828 L1272.4,830.9 L1284,828.8 L1295.6,832.6 L1307.3,838.3 L1318.9,829.9 L1330.5,834.7 L1342.2,830.9 L1353.8,829.1 L1365.4,832.2 L1377.1,838.9 L1388.7,836.8 L1400.3,830.9 L1412,833.7 L1423.6,833.7 L1435.2,834.3 L1446.9,830.1 L1458.5,834.1 L1470.2,836.8 L1481.8,833.7 L1493.4,832.6 L1505.1,833.7 L1516.7,829.9 L1528.3,834.3" stroke="#74b35e"/>
<path d="M155.4,818.3 L167,818.5 L178.7,817.1 L190.3,820.6 L201.9,819.4 L213.6,815.8 L225.2,816 L236.8,820.6 L248.5,814.3 L260.1,822.1 L271.8,816.8 L283.4,823.2 L295,820.2 L306.7,820.2 L318.3,812.6 L329.9,816.2 L341.6,817.5 L353.2,822.5 L364.8,821.3 L376.5,819.4 L388.1,814.1 L399.7,817.5 L411.4,819.4 L423,821.9 L434.6,814.7 L446.3,821.7 L457.9,822.5 L469.5,819.6 L481.2,822.7 L492.8,817.9 L504.5,817.9 L516.1,813.7 L527.7,815.4 L539.4,820 L551,813.7 L562.6,812 L574.3,820.4 L585.9,816.4 L597.5,821.1 L609.2,817.5 L620.8,817.9 L632.4,819.4 L644.1,822.5 L655.7,817.9 L667.3,818.9 L679,817.9 L690.6,816.8 L702.2,812.6 L713.9,816.8 L725.5,816.8 L737.1,820 L748.8,820 L760.4,817.3 L772.1,819.4 L783.7,821.7 L795.3,819.6 L807,821.5 L818.6,821.1 L830.2,816.8 L841.9,823.8 L853.5,817.9 L865.1,820 L876.8,822.7 L888.4,817.9 L900,817.3 L911.7,822.1 L923.3,817.3 L934.9,817.5 L946.6,823.8 L958.2,820 L969.8,820.6 L981.5,816.8 L993.1,818.3 L1004.8,809.5 L1016.4,820 L1028,821.1 L1039.7,824.2 L1051.3,814.1 L1062.9,820.6 L1074.6,824.8 L1086.2,810.5 L1097.8,824.2 L1109.5,817.5 L1121.1,818.9 L1132.7,820.6 L1144.4,815.4 L1156,813.1 L1167.6,815.2 L1179.3,817.5 L1190.9,821.1 L1202.6,816.8 L1214.2,818.9 L1225.8,812.6 L1237.5,822.5 L1249.1,819.6 L1260.7,814.7 L1272.4,812.2 L1284,813.3 L1295.6,814.3 L1307.3,823.8 L1318.9,817.9 L1330.5,814.7 L1342.2,818.5 L1353.8,813.3 L1365.4,818.3 L1377.1,822.7 L1388.7,823.2 L1400.3,816.4 L1412,815.8 L1423.6,819.6 L1435.2,816.8 L1446.9,814.1 L1458.5,817.3 L1470.2,820.6 L1481.8,820 L1493.4,815.4 L1505.1,817.5 L1516.7,818.5 L1528.3,817.5" stroke="#6aa84f"/>
<path d="M155.4,786.9 L167,788.4 L178.7,795.8 L190.3,789.5 L201.9,801.1 L213.6,794.1 L225.2,790.9 L236.8,800.6 L248.5,793.7 L260.1,801.1 L271.8,800.6 L283.4,802.1 L295,804.2 L306.7,800 L318.3,786.9 L329.9,800 L341.6,793.1 L353.2,803.6 L364.8,801.1 L376.5,799.4 L388.1,796.8 L399.7,789.9 L411.4,800.4 L423,802.5 L434.6,793.7 L446.3,799.6 L457.9,805.3 L469.5,802.7 L481.2,799.6 L492.8,806.7 L504.5,798.3 L516.1,794.3 L527.7,788 L539.4,796.2 L551,798.3 L562.6,794.7 L574.3,797.5 L585.9,796.4 L597.5,797.9 L609.2,796.8 L620.8,794.1 L632.4,798.9 L644.1,805.7 L655.7,799.4 L667.3,803.8 L679,794.3 L690.6,796.8 L702.2,786.9 L713.9,797.9 L725.5,791.6 L737.1,798.9 L748.8,797.5 L760.4,797.9 L772.1,802.5 L783.7,805.9 L795.3,803.2 L807,801.1 L818.6,795.8 L830.2,795.8 L841.9,806.7 L853.5,797.9 L865.1,799.6 L876.8,797.3 L888.4,796.8 L900,800 L911.7,790.5 L923.3,795.8 L934.9,801.1 L946.6,805.9 L958.2,804.2 L969.8,797.9 L981.5,802.1 L993.1,800 L1004.8,789.5 L1016.4,798.9 L1028,801.1 L1039.7,810.5 L1051.3,794.1 L1062.9,803.8 L1074.6,797.5 L1086.2,776.8 L1097.8,802.1 L1109.5,799.6 L1121.1,798.9 L1132.7,801.1 L1144.4,790.5 L1156,790.9 L1167.6,797.5 L1179.3,782.7 L1190.9,779.4 L1202.6,794.7 L1214.2,805.9 L1225.8,795.8 L1237.5,795.4 L1249.1,802.1 L1260.7,794.1 L1272.4,797.3 L1284,790.5 L1295.6,796.2 L1307.3,803.8 L1318.9,800.6 L1330.5,800.6 L1342.2,799.6 L1353.8,780.4 L1365.4,794.7 L1377.1,809.9 L1388.7,799.4 L1400.3,800.6 L1412,794.7 L1423.6,798.5 L1435.2,798.3 L1446.9,793.7 L1458.5,797.5 L1470.2,800 L1481.8,800.6 L1493.4,797.3 L1505.1,800.6 L1516.7,800.6 L1528.3,799.6" stroke="#629e51"/>
<path d="M155.4,754.7 L167,773.7 L178.7,790.1 L190.3,776.4 L201.9,780.4 L213.6,780.4 L225.2,780 L236.8,784.2 L248.5,774.3 L260.1,776.4 L271.8,790.5 L283.4,794.7 L295,776.8 L306.7,786.3 L318.3,769.9 L329.9,779.6 L341.6,777.5 L353.2,787.4 L364.8,794.3 L376.5,791.6 L388.1,770.1 L399.7,776.8 L411.4,789.5 L423,782.7 L434.6,777.9 L446.3,780 L457.9,783.2 L469.5,793.7 L481.2,774.3 L492.8,792.6 L504.5,787.8 L516.1,763.2 L527.7,776.4 L539.4,782.7 L551,790.5 L562.6,770.9 L574.3,787.4 L585.9,788.8 L597.5,787.8 L609.2,759.4 L620.8,757.9 L632.4,790.1 L644.1,787.4 L655.7,772.6 L667.3,775.2 L679,782.1 L690.6,787.4 L702.2,782.5 L713.9,773.7 L725.5,771.2 L737.1,772.6 L748.8,775.2 L760.4,782.1 L772.1,780 L783.7,784.2 L795.3,787.8 L807,784.2 L818.6,771.2 L830.2,775.2 L841.9,799.6 L853.5,786.9 L865.1,785.9 L876.8,784.2 L888.4,782.1 L900,774.3 L911.7,763.8 L923.3,776.4 L934.9,777.9 L946.6,785.3 L958.2,789.1 L969.8,786.7 L981.5,780 L993.1,782.5 L1004.8,774.3 L1016.4,760.4 L1028,757.9 L1039.7,800 L1051.3,782.1 L1062.9,790.1 L1074.6,781.1 L1086.2,764.2 L1097.8,784.2 L1109.5,776.8 L1121.1,777.9 L1132.7,782.5 L1144.4,777.5 L1156,782.7 L1167.6,774.7 L1179.3,770.5 L1190.9,756.8 L1202.6,779.6 L1214.2,778.5 L1225.8,781.5 L1237.5,772.2 L1249.1,787.4 L1260.7,781.7 L1272.4,780.6 L1284,767.4 L1295.6,773.7 L1307.3,777.3 L1318.9,768 L1330.5,788.8 L1342.2,787.4 L1353.8,741.1 L1365.4,770.5 L1377.1,792.6 L1388.7,781.1 L1400.3,770.5 L1412,759.6 L1423.6,766.3 L1435.2,778.9 L1446.9,740 L1458.5,758.9 L1470.2,787.8 L1481.8,774.7 L1493.4,772 L1505.1,787.8 L1516.7,785.3 L1528.3,771.2" stroke="#5a9645"/>
<path d="M155.4,927.5 L167,908.5 L178.7,892.1 L190.3,905.8 L201.9,901.8 L213.6,901.8 L225.2,902.2 L236.8,898 L248.5,907.9 L260.1,905.8 L271.8,891.7 L283.4,887.5 L295,905.4 L306.7,895.9 L318.3,912.3 L329.9,902.6 L341.6,904.7 L353.2,894.8 L364.8,887.9 L376.5,890.6 L388.1,912.1 L399.7,905.4 L411.4,892.7 L423,899.5 L434.6,904.3 L446.3,902.2 L457.9,899 L469.5,888.5 L481.2,907.9 L492.8,889.6 L504.5,894.4 L516.1,919 L527.7,905.8 L539.4,899.5 L551,891.7 L562.6,911.3 L574.3,894.8 L585.9,893.4 L597.5,894.4 L609.2,922.8 L620.8,924.3 L632.4,892.1 L644.1,894.8 L655.7,909.6 L667.3,907 L679,900.1 L690.6,894.8 L702.2,899.7 L713.9,908.5 L725.5,911 L737.1,909.6 L748.8,907 L760.4,900.1 L772.1,902.2 L783.7,898 L795.3,894.4 L807,898 L818.6,911 L830.2,907 L841.9,882.6 L853.5,895.3 L865.1,896.3 L876.8,898 L888.4,900.1 L900,907.9 L911.7,918.4 L923.3,905.8 L934.9,904.3 L946.6,896.9 L958.2,893.1 L969.8,895.5 L981.5,902.2 L993.1,899.7 L1004.8,907.9 L1016.4,921.8 L1028,924.3 L1039.7,882.2 L1051.3,900.1 L1062.9,892.1 L1074.6,901.1 L1086.2,918 L1097.8,898 L1109.5,905.4 L1121.1,904.3 L1132.7,899.7 L1144.4,904.7 L1156,899.5 L1167.6,907.5 L1179.3,911.7 L1190.9,925.4 L1202.6,902.6 L1214.2,903.7 L1225.8,900.7 L1237.5,910 L1249.1,894.8 L1260.7,900.5 L1272.4,901.6 L1284,914.8 L1295.6,908.5 L1307.3,904.9 L1318.9,914.2 L1330.5,893.4 L1342.2,894.8 L1353.8,941.1 L1365.4,911.7 L1377.1,889.6 L1388.7,901.1 L1400.3,911.7 L1412,922.6 L1423.6,915.9 L1435.2,903.3 L1446.9,942.2 L1458.5,923.3 L1470.2,894.4 L1481.8,907.5 L1493.4,910.2 L1505.1,894.4 L1516.7,896.9 L1528.3,911" stroke="#82b5d8"/>
<path d="M155.4,863.9 L167,863.7 L178.7,865.1 L190.3,861.6 L201.9,862.8 L213.6,866.4 L225.2,866.2 L236.8,861.6 L248.5,867.9 L260.1,860.1 L271.8,865.4 L283.4,859 L295,862 L306.7,862 L318.3,869.6 L329.9,866 L341.6,864.7 L353.2,859.7 L364.8,860.9 L376.5,862.8 L388.1,868.1 L399.7,864.7 L411.4,862.8 L423,860.3 L434.6,867.5 L446.3,860.5 L457.9,859.7 L469.5,862.6 L481.2,859.5 L492.8,864.3 L504.5,864.3 L516.1,868.5 L527.7,866.8 L539.4,862.2 L551,868.5 L562.6,870.2 L574.3,861.8 L585.9,865.8 L597.5,861.1 L609.2,864.7 L620.8,864.3 L632.4,862.8 L644.1,859.7 L655.7,864.3 L667.3,863.3 L679,864.3 L690.6,865.4 L702.2,869.6 L713.9,865.4 L725.5,865.4 L737.1,862.2 L748.8,862.2 L760.4,864.9 L772.1,862.8 L783.7,860.5 L795.3,862.6 L807,860.7 L818.6,861.1 L830.2,865.4 L841.9,858.4 L853.5,864.3 L865.1,862.2 L876.8,859.5 L888.4,864.3 L900,864.9 L911.7,860.1 L923.3,864.9 L934.9,864.7 L946.6,858.4 L958.2,862.2 L969.8,861.6 L981.5,865.4 L993.1,863.9 L1004.8,872.7 L1016.4,862.2 L1028,861.1 L1039.7,858 L1051.3,868.1 L1062.9,861.6 L1074.6,857.4 L1086.2,871.7 L1097.8,858 L1109.5,864.7 L1121.1,863.3 L1132.7,861.6 L1144.4,866.8 L1156,869.1 L1167.6,867 L1179.3,864.7 L1190.9,861.1 L1202.6,865.4 L1214.2,863.3 L1225.8,869.6 L1237.5,859.7 L1249.1,862.6 L1260.7,867.5 L1272.4,870 L1284,868.9 L1295.6,867.9 L1307.3,858.4 L1318.9,864.3 L1330.5,867.5 L1342.2,863.7 L1353.8,868.9 L1365.4,863.9 L1377.1,859.5 L1388.7,859 L1400.3,865.8 L1412,866.4 L1423.6,862.6 L1435.2,865.4 L1446.9,868.1 L1458.5,864.9 L1470.2,861.6 L1481.8,862.2 L1493.4,866.8 L1505.1,864.7 L1516.7,863.7 L1528.3,864.7" stroke="#1f78c1"/>
</g>
<text x="132.2" y="259.8" text-anchor="end">0</text>
<text x="132.2" y="195.8" text-anchor="end">50</text>
<text x="132.2" y="131.8" text-anchor="end">100</text>
<text x="154.3" y="276.9" text-anchor="middle">12:10</text>
<text x="248" y="276.9" text-anchor="middle">12:20</text>
<text x="341.8" y="276.9" text-anchor="middle">12:30</text>
<text x="435.5" y="276.9" text-anchor="middle">12:40</text>
<text x="529.2" y="276.9" text-anchor="middle">12:50</text>
<text x="623" y="276.9" text-anchor="middle">13:00</text>
<text x="716.7" y="276.9" text-anchor="middle">13:10</text>
<text x="810.4" y="276.9" text-anchor="middle">13:20</text>
<text x="904.1" y="276.9" text-anchor="middle">13:30</text>
<text x="997.9" y="276.9" text-anchor="middle">13:40</text>
<text x="1091.6" y="276.9" text-anchor="middle">13:50</text>
<text x="1185.3" y="276.9" text-anchor="middle">14:00</text>
<rect x="122.6" y="303.9" width="13.2" height="2.2" fill="#6ed0e0"/>
<text x="144" y="308.9" letter-spacing="-0.42">web_server_01</text>
<rect x="258.4" y="303.9" width="13.2" height="2.2" fill="#5195ce"/>
<text x="279.8" y="308.9" letter-spacing="-0.42">web_server_02</text>
<rect x="394.2" y="303.9" width="13.2" height="2.2" fill="#0a50a1"/>
<text x="415.6" y="308.9" letter-spacing="-0.42">web_server_03</text>
<rect x="530" y="303.9" width="13.2" height="2.2" fill="#0a437c"/>
<text x="551.4" y="308.9" letter-spacing="-0.42">web_server_04</text>
<text x="1346.6" y="259.8" text-anchor="end" letter-spacing="-0.3">0 B</text>
<text x="1346.6" y="227.8" text-anchor="end" letter-spacing="-0.3">10 B</text>
<text x="1346.6" y="195.7" text-anchor="end" letter-spacing="-0.3">20 B</text>
<text x="1346.6" y="163.7" text-anchor="end" letter-spacing="-0.3">30 B</text>
<text x="1346.6" y="131.6" text-anchor="end" letter-spacing="-0.3">40 B</text>
<text x="1346.6" y="99.5" text-anchor="end" letter-spacing="-0.3">50 B</text>
<text x="1860" y="259.8" letter-spacing="-0.35">0%</text>
<text x="1860" y="220.8" letter-spacing="-0.35">5%</text>
<text x="1860" y="181.8" letter-spacing="-0.35">10%</text>
<text x="1860" y="142.8" letter-spacing="-0.35">15%</text>
<text x="1860" y="103.8" letter-spacing="-0.35">20%</text>
<text x="1442.8" y="276.9" text-anchor="middle">12:30</text>
<text x="1566.4" y="276.9" text-anchor="middle">13:00</text>
<text x="1690" y="276.9" text-anchor="middle">13:30</text>
<text x="1813.7" y="276.9" text-anchor="middle">14:00</text>
<rect x="1332.7" y="303.9" width="13.2" height="2.2" fill="#6ed0e0"/>
<text x="1354" y="308.9" letter-spacing="-0.2">memory</text>
<rect x="1842.4" y="303.9" width="13.2" height="2.2" fill="#e24d42"/>
<text x="1864.4" y="308.9" letter-spacing="-0.2">cpu</text>
<text x="139.6" y="626.8" text-anchor="end" letter-spacing="-0.3">0 ms</text>
<text x="139.6" y="581.4" text-anchor="end" letter-spacing="-0.3">1 s</text>
<text x="139.6" y="536.1" text-anchor="end" letter-spacing="-0.3">2 s</text>
<text x="139.6" y="490.8" text-anchor="end" letter-spacing="-0.3">3 s</text>
<text x="139.6" y="445.4" text-anchor="end" letter-spacing="-0.3">4 s</text>
<text x="139.6" y="400.1" text-anchor="end" letter-spacing="-0.3">5 s</text>
<text x="157.8" y="643.1" text-anchor="middle">12:10</text>
<text x="232.5" y="643.1" text-anchor="middle">12:20</text>
<text x="307.3" y="643.1" text-anchor="middle">12:30</text>
<text x="382" y="643.1" text-anchor="middle">12:40</text>
<text x="456.8" y="643.1" text-anchor="middle">12:50</text>
<text x="531.5" y="643.1" text-anchor="middle">13:00</text>
<text x="606.2" y="643.1" text-anchor="middle">13:10</text>
<text x="681" y="643.1" text-anchor="middle">13:20</text>
<text x="755.7" y="643.1" text-anchor="middle">13:30</text>
<text x="830.5" y="643.1" text-anchor="middle">13:40</text>
<text x="905.2" y="643.1" text-anchor="middle">13:50</text>
<text x="979.9" y="643.1" text-anchor="middle">14:00</text>
<text x="684" y="363" text-anchor="middle" font-size="17.5" fill="#d8d9da" letter-spacing="0.1" stroke="#d8d9da" stroke-width="0.7">client side full page load</text>
<text x="1265" y="409" text-anchor="end" fill="#33a2e5" font-weight="bold" letter-spacing="-0.7">avg</text>
<rect x="1084.3" y="427.8" width="13.6" height="2.2" fill="#f9e2d2"/>
<text x="1109.7" y="434.9" letter-spacing="-0.25">upper_25</text>
<text x="1265" y="434.9" text-anchor="end" letter-spacing="-0.2">3 ms</text>
<rect x="1084.3" y="457.8" width="13.6" height="2.2" fill="#f2c96d"/>
<text x="1109.7" y="464.9" letter-spacing="-0.25">upper_50</text>
<text x="1265" y="464.9" text-anchor="end" letter-spacing="-0.2">192 ms</text>
<rect x="1084.3" y="487.8" width="13.6" height="2.2" fill="#eab839"/>
<text x="1109.7" y="494.9" letter-spacing="-0.25">upper_75</text>
<text x="1265" y="494.9" text-anchor="end" letter-spacing="-0.2">607 ms</text>
<rect x="1084.3" y="517.8" width="13.6" height="2.2" fill="#ef843c"/>
<text x="1109.7" y="524.9" letter-spacing="-0.25">upper_90</text>
<text x="1265" y="524.9" text-anchor="end" letter-spacing="-0.2">1.157 s</text>
<rect x="1084.3" y="547.8" width="13.6" height="2.2" fill="#e24d42"/>
<text x="1109.7" y="554.9" letter-spacing="-0.25">upper_95</text>
<text x="1265" y="554.9" text-anchor="end" letter-spacing="-0.2">1.661 s</text>
<text x="1334.2" y="591.2" text-anchor="end">0</text>
<text x="1334.2" y="543.4" text-anchor="end">20</text>
<text x="1334.2" y="495.7" text-anchor="end">40</text>
<text x="1334.2" y="447.9" text-anchor="end">60</text>
<text x="1334.2" y="400.2" text-anchor="end">80</text>
<text x="1436.8" y="610" text-anchor="middle">12:30</text>
<text x="1568.3" y="610" text-anchor="middle">13:00</text>
<text x="1700.8" y="610" text-anchor="middle">13:30</text>
<text x="1832.7" y="610" text-anchor="middle">14:00</text>
<text x="1591" y="363" text-anchor="middle" font-size="17.5" fill="#d8d9da" letter-spacing="0.1" stroke="#d8d9da" stroke-width="0.7">logins</text>
<rect x="1332.6" y="636.8" width="13.2" height="2.2" fill="#5195ce"/>
<text x="1354" y="642" letter-spacing="-0.15">logins</text>
<rect x="1409.4" y="636.8" width="13.2" height="2.2" fill="#e24d42"/>
<text x="1431.5" y="642" letter-spacing="-0.1">logins (-1 hour)</text>
<text x="140.2" y="732.5" text-anchor="end" letter-spacing="-0.3">3 kB</text>
<text x="140.2" y="770" text-anchor="end" letter-spacing="-0.3">2 kB</text>
<text x="140.2" y="807.6" text-anchor="end" letter-spacing="-0.3">1 kB</text>
<text x="140.2" y="845.1" text-anchor="end" letter-spacing="-0.3">0 B</text>
<text x="140.2" y="882.6" text-anchor="end" letter-spacing="-0.3">-1 kB</text>
<text x="140.2" y="920.2" text-anchor="end" letter-spacing="-0.3">-2 kB</text>
<text x="986.5" y="696" text-anchor="middle" font-size="17.5" fill="#d8d9da" letter-spacing="0.25" stroke="#d8d9da" stroke-width="0.7">Traffic In/Out</text>
<text x="1776" y="740.6" text-anchor="end" fill="#33a2e5" font-weight="bold" letter-spacing="-0.7">avg</text>
<text x="1869.8" y="740.6" text-anchor="end" fill="#33a2e5" font-weight="bold" letter-spacing="-0.5">current</text>
<rect x="1582.1" y="761" width="13.9" height="2.2" fill="#9ac48a"/>
<text x="1607.9" y="767.2" letter-spacing="-0.25">upper_25</text>
<text x="1776" y="767.2" text-anchor="end" letter-spacing="-0.2">3 B</text>
<text x="1869.8" y="767.2" text-anchor="end" letter-spacing="-0.2">3 B</text>
<rect x="1582.1" y="791" width="13.9" height="2.2" fill="#7eb26d"/>
<text x="1607.9" y="797.2" letter-spacing="-0.25">upper_50</text>
<text x="1776" y="797.2" text-anchor="end" letter-spacing="-0.2">192 B</text>
<text x="1869.8" y="797.2" text-anchor="end" letter-spacing="-0.2">180 B</text>
<rect x="1582.1" y="821" width="13.9" height="2.2" fill="#6aa84f"/>
<text x="1607.9" y="827.2" letter-spacing="-0.25">upper_75</text>
<text x="1776" y="827.2" text-anchor="end" letter-spacing="-0.2">607 B</text>
<text x="1869.8" y="827.2" text-anchor="end" letter-spacing="-0.2">623 B</text>
<rect x="1582.1" y="851" width="13.9" height="2.2" fill="#629e51"/>
<text x="1607.9" y="857.2" letter-spacing="-0.25">upper_90</text>
<text x="1776" y="857.2" text-anchor="end" letter-spacing="-0.2">1.156 kB</text>
<text x="1869.8" y="857.2" text-anchor="end" letter-spacing="-0.2">1.100 kB</text>
<rect x="1582.1" y="881" width="13.9" height="2.2" fill="#5a9645"/>
<text x="1607.9" y="887.2" letter-spacing="-0.25">upper_95</text>
<text x="1776" y="887.2" text-anchor="end" letter-spacing="-0.2">1.660 kB</text>
<text x="1869.8" y="887.2" text-anchor="end" letter-spacing="-0.2">1.869 kB</text>
<rect x="1582.1" y="911" width="13.9" height="2.2" fill="#5195ce"/>
<text x="1607.9" y="917.2" letter-spacing="-0.25">cpu1</text>
<text x="1776" y="917.2" text-anchor="end" letter-spacing="-0.2">1.660 kB</text>
<text x="1869.8" y="917.2" text-anchor="end" letter-spacing="-0.2">1.869 kB</text></svg>
<div class="header"></div>
<div class="side"></div><div class="shadow"></div>
<svg class="abs" style="left:16.27px;top:13.42px" width="37.91" height="39.91" viewBox="110 95 665 700">
<defs><linearGradient id="lg" gradientUnits="userSpaceOnUse" x1="0" y1="110" x2="0" y2="790"><stop offset="0" stop-color="#f05a28"/><stop offset="0.3" stop-color="#f26a2a"/><stop offset="1" stop-color="#fcce0b"/></linearGradient></defs>
<path fill="url(#lg)" d="M465 102 L533 166 Q610 190 683 176 Q690 215 692 250 Q745 320 758 428 L714 470 Q720 540 756 598 Q690 610 648 655 Q610 700 572 788 Q520 740 445 728 Q360 725 284 753 Q285 680 262 612 Q200 560 117 523 Q175 470 203 420 Q205 320 186 224 Q260 232 335 212 Q400 180 465 102 Z"/>
<path fill="#161719" d="M776 473 L777 460 L769 446 L756 434 L749 422 L744 410 L739 399 L734 388 L727 378 L722 367 L717 357 L710 347 L704 337 L697 328 L689 319 L681 311 L673 303 L664 295 L655 289 L645 282 L635 277 L625 272 L615 267 L605 263 L594 260 L583 257 L573 254 L562 252 L551 251 L540 250 L529 250 L519 250 L508 250 L497 251 L486 252 L476 253 L465 255 L455 258 L445 262 L435 265 L425 270 L415 275 L406 280 L397 286 L388 292 L379 299 L371 306 L363 314 L356 322 L349 330 L342 338 L336 347 L330 357 L325 366 L320 376 L316 386 L312 397 L309 407 L307 418 L305 429 L303 440 L302 451 L302 462 L304 473 L305 484 L308 495 L311 506 L314 516 L318 527 L323 537 L328 546 L333 556 L339 565 L346 574 L352 582 L360 590 L367 598 L376 605 L384 611 L393 617 L402 622 L412 627 L421 632 L431 636 L441 639 L451 642 L461 644 L471 646 L481 647 L491 648 L502 648 L512 647 L522 646 L531 643 L541 640 L550 637 L559 633 L568 629 L577 624 L584 618 L591 612 L598 605 L604 598 L610 591 L615 583 L620 575 L623 567 L622 566 L615 570 L607 573 L600 576 L593 579 L585 582 L578 584 L570 585 L563 587 L556 588 L548 589 L541 589 L534 589 L527 589 L520 589 L513 588 L506 587 L499 585 L492 584 L486 581 L479 579 L473 576 L467 573 L461 570 L456 566 L450 563 L445 558 L440 554 L436 549 L431 545 L427 540 L423 535 L420 529 L416 524 L413 519 L410 513 L408 507 L406 501 L404 495 L402 489 L401 483 L400 477 L400 471 L400 465 L400 459 L400 453 L400 447 L401 441 L402 435 L404 429 L405 423 L407 418 L409 412 L412 407 L415 402 L418 396 L421 392 L424 387 L428 382 L432 378 L436 374 L440 369 L445 365 L449 361 L454 357 L459 354 L464 351 L470 348 L475 345 L481 343 L486 341 L492 339 L498 337 L505 336 L511 335 L517 335 L523 334 L530 333 L536 333 L543 334 L550 334 L556 335 L563 336 L570 337 L577 338 L584 340 L591 342 L598 345 L605 348 L612 351 L619 355 L626 358 L634 362 L641 367 L648 372 L655 377 L662 383 L669 390 L675 397 L681 404 L687 412 L693 420 L699 429 L703 439 L706 448 L709 458 L711 469 Z"/>
<circle cx="520" cy="480" r="80" fill="#161719"/>
<path d="M568 535 L602 590" fill="none" stroke="#161719" stroke-width="24" stroke-linecap="round"/>
</svg>

<svg class="abs" style="left:0;top:0" width="76" height="912" viewBox="0 0 76 912" fill="none" stroke="#9da2ab" stroke-width="2.3" stroke-linecap="round" stroke-linejoin="round">
<!-- search -->
<circle cx="37.6" cy="144.5" r="10.6"/><path d="M45.6 152.6 L50.8 157.8"/>
<!-- apps -->
<g stroke-linejoin="miter"><rect x="27.3" y="189.8" width="9.2" height="9.2" rx="0.6"/><rect x="41.4" y="189.8" width="9.2" height="9.2" rx="0.6"/><rect x="27.3" y="203.6" width="9.2" height="9.2" rx="0.6"/><rect x="41.4" y="203.6" width="9.2" height="9.2" rx="0.6"/></g>
<!-- compass -->
<circle cx="39" cy="254.8" r="11.3"/>
<path d="M44.4 249.6 L41.2 257.4 L33.6 260.2 L36.8 252.4 Z" fill="#9da2ab" stroke-width="1.2"/>
<path d="M39 244.6v1.6M39 263.4v1.6M28.8 254.8h1.6M47.6 254.8h1.6" stroke-width="1.6"/>
<!-- sign in -->
<path d="M29.9 806.5 A11 11 0 1 1 29.9 819.3"/>
<path d="M49.6 812.9 H34 M39.2 807.4 L33.7 812.9 L39.2 818.4"/>
<!-- help -->
<circle cx="38.9" cy="866.8" r="11.3"/>
</svg>
<div class="abs q" style="left:28.9px;top:855.5px;width:20px;text-align:center;font-size:16px;font-weight:bold;color:#9da2ab;line-height:22px">?</div>

<div class="bluebar"></div>
<div class="title">Grafana Play Home</div>
<div class="btn" style="left:1459px;width:45px;"></div><div class="btn" style="left:1522px;width:45px;"></div><div class="btn" style="left:1584px;width:177px;"></div><div class="btn" style="left:1766px;width:45px;"></div><div class="btn" style="left:1816px;width:45px;border-radius:3px 0 0 3px"></div><div class="btn" style="left:1861px;width:39px;border-radius:0 3px 3px 0;border-left:none"></div>
<div class="tr">Last 2 hours</div>

<svg class="abs" style="left:0;top:0" width="1919" height="69" viewBox="0 0 1919 69" fill="none" stroke-linecap="round" stroke-linejoin="round">
<g stroke="#c9cbd0" stroke-width="2.2" stroke-linejoin="miter">
<rect x="98" y="26" width="6.6" height="6.2"/><rect x="108.6" y="26" width="6.6" height="6.2"/><rect x="98" y="35.6" width="6.6" height="6.2"/><rect x="108.6" y="35.6" width="6.6" height="6.2"/>
</g>
<g stroke="#c9cbd0" stroke-width="2">
<circle cx="354.7" cy="29.2" r="3"/><circle cx="343.9" cy="34" r="3"/><circle cx="354.7" cy="39" r="3"/>
<path d="M346.7 32.8 L351.9 30.4 M346.7 35.3 L351.9 37.8"/>
</g>
<g stroke="#8e9198" stroke-width="1.9">
<!-- gear -->
<circle cx="1481.4" cy="34.6" r="3.2"/>
<path d="M1488.1,33.1 L1490.5,33.4 L1490.5,35.8 L1488.1,36.1 L1487.2,38.3 L1488.7,40.2 L1487.0,41.9 L1485.1,40.4 L1482.9,41.3 L1482.6,43.7 L1480.2,43.7 L1479.9,41.3 L1477.7,40.4 L1475.8,41.9 L1474.1,40.2 L1475.6,38.3 L1474.7,36.1 L1472.3,35.8 L1472.3,33.4 L1474.7,33.1 L1475.6,30.9 L1474.1,29.0 L1475.8,27.3 L1477.7,28.8 L1479.9,27.9 L1480.2,25.5 L1482.6,25.5 L1482.9,27.9 L1485.1,28.8 L1487.0,27.3 L1488.7,29.0 L1487.2,30.9 Z"/>
<!-- monitor -->
<rect x="1536" y="26.1" width="16.2" height="12.8" rx="1.8"/><path d="M1536 35.5 H1552.2 M1540.3 42.8 H1547.9 L1547 39.4 H1541.2 Z"/>
<!-- clock -->
<circle cx="1605.4" cy="34.9" r="8.6"/><path d="M1605.6 30.2 V35.6 H1602.4"/>
<!-- chevron -->
<path d="M1740.2 32.9 L1744.1 36.8 L1748 32.9" stroke-width="2"/>
<!-- zoom out -->
<circle cx="1788.2" cy="33.6" r="7.7"/><path d="M1794 39.7 L1797.4 43.4 M1784.4 33.6 H1792.2"/>
<!-- sync -->
<path d="M1831.2 29.6 A8.3 8.3 0 0 1 1846.6 32.2 M1846.4 39.6 A8.3 8.3 0 0 1 1831 37 M1830.8 25.8 V30.2 H1835.2 M1846.8 43.4 V39 H1842.4"/>
<path d="M1876 33.3 L1879.9 37.2 L1883.8 33.3" stroke-width="2"/>
</g>
</svg>

<div class="scroll"></div>
</body></html>
